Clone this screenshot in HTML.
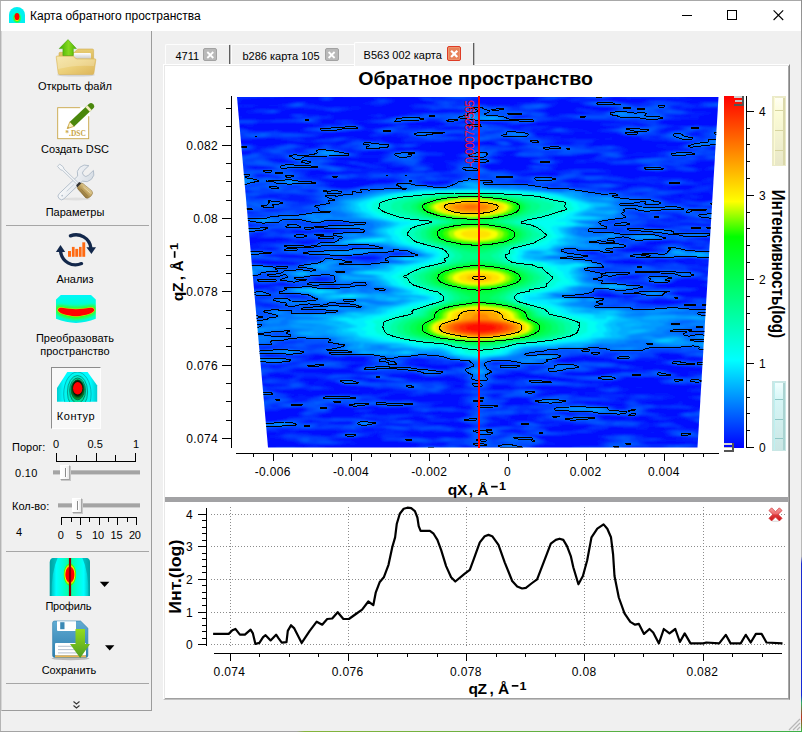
<!DOCTYPE html>
<html lang="ru"><head><meta charset="utf-8"><title>Карта обратного пространства</title>
<style>
*{box-sizing:border-box;margin:0;padding:0}
html,body{width:802px;height:732px;overflow:hidden;background:#f0f0f0}
body{font-family:"Liberation Sans",sans-serif;font-size:11px;color:#000;position:relative}
#win{position:absolute;left:0;top:0;width:802px;height:732px;background:#f0f0f0;overflow:hidden}
#edgeL{position:absolute;left:0;top:0;width:1px;height:732px;background:#b4b4b4}
#edgeT{position:absolute;left:0;top:0;width:802px;height:1px;background:#a8a8a8}
#edgeR{position:absolute;left:801px;top:0;width:1px;height:732px;background:linear-gradient(#8c8c8c 0,#b0b0b0 10%,#b8b8b8 76%,#1a2ad0 77%,#1428d8 95%,#30b060 96%,#c03020 98%,#30c040 100%)}
#edgeB{position:absolute;left:0;top:731px;width:802px;height:1px;background:linear-gradient(90deg,#a4a4a4 0,#a4a4a4 37%,#86b43c 38%,#6cb040 60%,#3cb048 100%)}
#titlebar{position:absolute;left:1px;top:1px;width:800px;height:30px;background:#fff}
#title{position:absolute;left:29px;top:8px;font-size:12px;line-height:14px;white-space:nowrap}
#dock{position:absolute;left:1px;top:31px;width:151px;height:680px;border-left:1px solid #d6d6d6;border-right:1px solid #9c9c9c;border-bottom:1px solid #9c9c9c;background:#f0f0f0}
.lbl{position:absolute;left:0;width:150px;text-align:center;font-size:11px;line-height:13px;white-space:nowrap}
.sep{position:absolute;left:4px;width:143px;height:1px;background:#a6a6a6}
.t{position:absolute;font-size:11px;line-height:13px;white-space:nowrap}
#cbtn{position:absolute;left:49px;top:336px;width:50px;height:62px;background:#f8f8f8;border:1px solid;border-color:#8c8c8c #fdfdfd #fdfdfd #8c8c8c}
.groove{position:absolute;height:5px;background:#a4a4a4;border-top:1px solid #bdbdbd;border-bottom:1px solid #cfcfcf}
.handle{position:absolute;width:10px;height:15px;background:linear-gradient(90deg,#fff 0,#fbfbfb 40%,#ececec 100%);border:1px solid;border-color:#fff #a8a8a8 #a0a0a0 #fff;box-shadow:1px 1px 0 #c8c8c8}
.handle:after{content:'';position:absolute;left:3.6px;top:1.5px;width:1px;height:9px;background:#8c8c8c;box-shadow:1px 0 0 #fff}
#tabs{position:absolute;left:164px;top:44px;width:626px;height:22px}
.tab{position:absolute;top:0px;height:20px;background:#f0f0f0;border-top:1px solid #fdfdfd;border-left:1px solid #fdfdfd;border-top-left-radius:2px;font-size:11px;line-height:13px;white-space:nowrap}
.tab span{position:absolute;top:4.7px}
.tab.act{top:-1.8px;height:23.8px;background:#f2f2f2;border:0;border-left:1.4px solid #fff;border-top:1.3px solid #fff;border-top-left-radius:2px}
.tab.act span{top:5.5px}
.tsep{position:absolute;top:0.5px;width:2px;height:19.5px;background:linear-gradient(90deg,#5e5e5e 0,#5e5e5e 50%,#c0c0c0 50%)}
.xb{position:absolute;width:14px;height:13px;border-radius:2px;background:#b9b9b9;border:1px solid #a2a2a2}
.xb.r{background:#e8825a;border:1.5px solid #de3c26;box-shadow:inset 0 0 0 1px #ec946e}
#paneframe{position:absolute;left:163px;top:64px;width:627px;height:636px;border-style:solid;border-width:1px;border-color:#fff #858585 #c0c0c0 #fff;background:#e8e8e8}
#pane{position:absolute;left:165px;top:66px;width:623px;height:632px;background:#fff;box-shadow:1px 0 0 #a8a8a8,0 1px 0 #a0a0a0,1px 1px 0 #a0a0a0}
#split{position:absolute;left:165px;top:497px;width:623px;height:5px;background:#a2a2a4}
#ov{position:absolute;left:0;top:0}
</style></head><body>
<div id="win">
<div id="titlebar"><div id="title">Карта обратного пространства</div></div>
<div id="dock">
<div class="lbl" style="top:48.5px;left:-2px">Открыть файл</div>
<div class="lbl" style="top:112.0px;left:-2px">Создать DSC</div>
<div class="lbl" style="top:174.5px;left:-2px">Параметры</div>
<div class="sep" style="top:194px"></div>
<div class="lbl" style="top:241.5px;left:-2px">Анализ</div>
<div class="lbl" style="top:301.1px;left:-2px">Преобразовать</div>
<div class="lbl" style="top:313.7px;left:-2px">пространство</div>
<div id="cbtn"></div>
<div class="lbl" style="top:378.5px;left:-1px"><span style="letter-spacing:0.5px">Контур</span></div>
<div class="t" style="left:10px;top:409.5px">Порог:</div>
<div class="t" style="left:51px;top:407px">0</div>
<div class="t" style="left:85.5px;top:407px">0.5</div>
<div class="t" style="left:131px;top:407px">1</div>
<div class="t" style="left:13px;top:436px;letter-spacing:0.3px">0.10</div>
<div class="groove" style="left:51px;top:438.5px;width:86.5px"></div>
<div class="handle" style="left:58px;top:434px"></div>
<div class="t" style="left:10px;top:468.5px">Кол-во:</div>
<div class="groove" style="left:56px;top:471.5px;width:82px"></div>
<div class="handle" style="left:70px;top:467px"></div>
<div class="t" style="left:14px;top:494.5px">4</div>
<div class="t" style="left:38.6px;top:497.5px;width:40px;text-align:center;letter-spacing:-0.2px">0</div>
<div class="t" style="left:56.9px;top:497.5px;width:40px;text-align:center;letter-spacing:-0.2px">5</div>
<div class="t" style="left:75.9px;top:497.5px;width:40px;text-align:center;letter-spacing:-0.2px">10</div>
<div class="t" style="left:94.5px;top:497.5px;width:40px;text-align:center;letter-spacing:-0.2px">15</div>
<div class="t" style="left:112.8px;top:497.5px;width:40px;text-align:center;letter-spacing:-0.2px">20</div>
<div class="sep" style="top:520px"></div>
<div class="lbl" style="top:569.0px;left:-8.7px"><span style="letter-spacing:-0.25px">Профиль</span></div>
<div class="lbl" style="top:632.8px;left:-8px">Сохранить</div>
<div class="sep" style="top:652px"></div>
</div>
<div id="paneframe"></div><div id="pane"></div>
<div id="tabs">
<div class="tab" style="left:1px;width:64px"><span style="left:9.5px">4711</span><div class="xb" style="left:37.3px;top:3.3px"></div></div>
<div class="tsep" style="left:65px"></div>
<div class="tab" style="left:67px;width:123px"><span style="left:10.5px">b286 карта 105</span><div class="xb" style="left:92.6px;top:3.3px"></div></div>
<div class="tab act" style="left:190px;width:119px"><span style="left:8.6px">B563 002 карта</span><div class="xb r" style="left:91.6px;top:3.2px;width:14.2px;height:14.3px"></div></div>
<div class="tsep" style="left:309px;top:-1px;height:22px"></div>
</div>
<div id="split"></div>
<svg id="ov" width="802" height="732" viewBox="0 0 802 732">
<defs><clipPath id="trap"><path d="M237,97 L718.5,97 L697.5,447.5 L268,447.5 Z"/></clipPath><filter id="bl" x="-5%" y="-5%" width="110%" height="110%"><feGaussianBlur stdDeviation="1.1"/></filter></defs>
<g clip-path="url(#trap)">
<g filter="url(#bl)">
<rect x="225" y="85" width="505" height="375" fill="#0009ff"/>
<path fill="#001bff" d="M232,92 312.8,92 316,93.1 333,93.3 340.3,92 375.9,92 373.7,95 374.4,97 392,98.9 395.8,100 396.5,101 382,106 376,106.7 371.4,105 360.6,104 362.6,103 373.8,101 374.4,100 372,97.2 336,96.4 333.7,97 334.9,99 333,100 325,100.8 316.1,99 321.1,96 296,92.7 293,93 284,97.1 259,97.6 242,99.5 240.4,100 242.6,101 241.1,102 232,103.7 232,96.5 241.2,95 232,93.7 232,92ZM382.7,92 383,92 383.6,92 383,92 382.7,92ZM400,93 414,92.8 420,93.9 423.6,96 430,96.8 452.7,94 432.8,92 516.9,92 503,94.4 483.3,95 479.1,98 478.1,100 476.5,101 477.6,103 480,104 493,105.4 502,105.1 510,105.9 517.5,105 517.2,104 515,103.4 504,103.8 502.8,103 531,102.3 536.9,101 533.7,99 534.6,98 555,95.3 570,94.2 572,94.7 573,96.2 577,96.6 578.6,96 580.3,94 590.7,92 617,92.6 619.5,92 709.2,92 711.7,93 711.8,94 709,95.1 692,95.6 685.6,97 694.9,100 690,100.5 685,100.6 683,99.8 664,97.6 640,97.6 629,98.8 616,97.1 588.5,100 610,100.6 632,103.4 642,102.5 646,100.6 653,99.7 684,101.1 688,103.1 693,104 704,101.7 716,101.8 724,101 724,107.4 683.6,109 683.4,110 692,111.6 711,112.3 714,113 699.4,116 698.7,117 699.5,118 698.9,119 665,119.9 661,120.9 660.4,122 663,124.1 676,125.4 724,125.5 724,146.9 713.9,147 713.9,148 717,148.6 724,147.8 724,160.3 701,161.5 694,164.2 688.1,165 686.9,166 703,169.2 710,166.4 724,166.3 724,170.4 704,170.1 699,171.3 691,171.9 684,171.8 673,170.2 655,171.3 642,170.6 634.9,169 635,167.9 643.7,166 642.1,165 639,164.6 612,165.3 605,162.7 597,161.7 578,163.4 572,163 576,159.9 588,159.4 591,158.6 599.1,154 597,153.5 589,153.6 580,155.3 569,156.1 557.7,156 553.4,157 553.3,158 555,159.7 563.2,161 564.7,162 556.7,164 556.3,165 559.1,166 554.6,168 555,169.3 557,170.4 563,170.4 571,168.9 593,168.6 609,170 612.1,171 611.2,172 606,172.9 588,172.6 584.1,174 585.2,175 594,175.1 608,173.8 614,174.8 614.4,176 631,178.6 647,176.6 658,176.7 692,179.3 695.2,180 692.4,181 693.6,182 696,182.1 702,181 701.8,180 703.3,179 716,177.3 719.4,178 713.9,180 711.7,182 712.5,183 724,183.4 724,187.4 718,187.2 714.9,188 715.5,190 717,191 724,191.1 724,195.9 715,195.4 709.8,194 707,192.1 704,192 692.4,194 693.2,195 703,196.1 705,197.1 701,198.2 689.2,199 691.2,200 702,201 714,200.3 724,200.9 724,206.5 716.4,207 724,207.9 724,229.6 720,230 719.3,231 724,231.2 724,263.8 707,264.5 701.4,266 711,265.4 724,266.1 724,272.8 712,273.1 709.8,274 710,275.2 711.5,276 724,275.4 724,293 709,293 704.5,292 711,290 712.8,288 697.2,285 707.5,283 708.2,282 704,280.5 693,278.7 687,278.4 679,279.6 677.3,280 677.7,281 675,282.2 660,284.3 657.7,285 657.1,286 667,287.6 697,287.9 700.2,289 698,290.3 691,291.4 679,291.9 673.9,293 673.6,294 689,297.1 701,297.4 710,298.6 715,300.1 724,300.3 724,350.6 717,350.9 711.9,352 712.5,353 724,353.4 724,356.8 703,358.6 692,357.7 687.1,359 688.1,360 694,361 724,359.7 724,387.6 661,383.5 657.6,382 657.6,381 659.2,379 669.4,378 657,377 643,377.5 626.8,377 624.5,378 624.7,379 624,379.3 611.1,381 612.4,382 610.7,383 604,383.8 603.3,385 603.8,386 606,386.5 619,386.1 622,387 621.8,388 623,388.4 631.2,389 629,390.2 615.7,393 617,393.4 629,394.6 642,393.7 653,394.3 659,393.5 672,393.9 672.6,394 667.7,395 678.3,397 659,400.2 644,401.7 641.1,403 643.2,404 668,405.2 677,403.6 678.5,403 678.1,402 680,401.6 682.6,402 683,403 682,405 694,406.5 700,408.7 706,408 707.4,407 702.5,404 705,402.3 714,401.3 724,401.2 724,422.7 701,423.6 680,417.8 663,420.5 645.1,419 649.8,417 645,416.1 628,416.9 609,415 596.9,416 603.5,418 604,420 625.6,420 622.7,419 629,417.6 636.6,419 632.3,421 646,421.4 648.5,422 647.9,423 650,423.6 665,421.6 671,421.8 676.9,423 679.2,425 685,427 686,428.6 689,429.2 713,428.5 724,429.6 724,430.2 715,430.9 704,430.9 701.2,433 712,434.5 717,437.4 724,437.6 724,445.4 712,443 696,441.8 689,442 682,440.9 654,441.4 643.8,443 650,444.2 661,443.5 678,444.4 689,443.4 699,444.4 707,444 713.6,446 724,446.4 724,449.1 714,449.7 705,447.2 691,447.7 678.1,450 675.4,452 661.1,452 667.9,450 666.2,449 655,447.8 644,448.6 632,447.8 627,450 613,449.9 605.3,452 551.8,452 553,451 558,449.9 567,449.6 570,447.8 576,446.8 596.4,446 598.8,444 599,442.6 592.2,441 603,440.2 605,439 596,437.1 584.3,437 588,436.5 595,436.7 599,435.8 610.5,435 614,433.7 627,433.7 643,435.1 644,435.5 644,437 647,437.6 660,437.8 666,439.6 674,440.1 685.6,437 662.1,436 667.4,434 666,432.9 658.9,432 660.2,431 677.2,429 671,427.8 653,426.5 649,426.7 647,429.2 642,429.7 636,429.3 635,429 634.7,428 633,427.7 622,427.6 613,426.6 610.5,427 610.5,428 607,429.1 595.6,431 603.1,432 602,432.3 576,433.5 568,435.3 537.9,436 540.7,438 546,439.7 549,442.3 557.1,444 553,444.9 546,444.6 535.8,446 533.4,447 538.3,449 531.4,451 519.9,452 473.3,452 466,451.3 457,452 377.4,452 374.7,450 381,448.7 401,449.1 416,446.6 418.8,446 418.8,445 416.4,444 416.8,443 408,442 395,441.1 382,441.3 380,440 380.7,438 380,437.4 375,436 335.1,439 338,439.6 355,439.6 355.8,440 351,441 359.4,444 355,444.5 348,443.8 331,445.2 297,444.1 295.1,442 287.3,441 280,438.5 265.3,437 285.3,433 284,432.7 276,432.6 265,431.2 257,432.7 250,432.1 241,432.6 238.8,433 244.2,435 232,436.8 232,432.3 235.6,432 232,431.2 232,426.3 246,424.2 251,422.6 272,421.5 281.6,420 288,417.6 299.9,417 299.1,416 296.4,415 296.6,414 299,412.1 303.4,411 304.7,409 300,407.6 287.3,408 279,410.4 271,410.7 246,414.3 242.3,414 240.7,413 241.3,412 244,410.9 232,410.4 232,399.4 257,399.7 261.8,399 262.8,398 254,395.6 232,394.9 232,381.7 257,380.3 263.3,378 253.7,375 232,374.2 232,372.6 244.2,372 245.7,371 232,369.5 232,366 241.4,365 245.6,364 246.5,363 241,362.6 232,363.3 232,286.4 245,288.5 257,288.2 270.9,286 270,285.3 266,285.2 258,286.9 251.2,286 250.9,285 252,284 245.3,282 247.5,280 245,278.6 232,277.5 232,244.6 245,244.7 261,242.2 288.1,240 287.2,239 279,237.7 261,238.5 232,234.8 232,226.3 248.9,226 248.5,225 242,223.9 232,223.4 232,193.4 248.3,192 245,191.3 232,191.1 232,189.4 234.1,189 232,188.8 232,154.4 245,154.1 250.3,153 251.9,152 243,151.7 232,152.8 232,145 252,144.3 260,146.6 264,146.8 289,143.2 312,145.9 322.6,143 293,141.4 270,137.8 249,140.2 241,140.3 236,142.3 232,142.7 232,136.2 235.6,136 235.9,135 232,134.4 232,124.2 242,125.9 246.7,125 244,123.9 232,124 232,119.1 271,119.7 289.5,119 293.2,118 288.7,116 289,114.6 295,113.6 322,115.8 337.3,115 333.4,117 333.1,118 334,119.1 325,118.9 320.6,120 321.9,121 321.8,123 323,123.6 335,124.1 335.7,124 333.7,122 336,119.6 364,120.8 370,119.6 383,119.1 386.1,118 386,117.1 379,117.4 366.1,116 367,115 384,114.7 385.6,115 386,117 387,117.2 400.7,116 396.6,115 399,114.3 405,114.4 411,112.8 433,112.8 447,111.8 456.1,112 464.4,111 462.2,110 456,109.6 434,111 422,109.8 409.2,110 413.9,108 407.7,106 409,105.5 414,104.6 429.2,104 432.3,103 431,101.8 420,100.1 417.8,98 413,96.2 406,95.8 400,94.2 400,93ZM479,122 478.4,122 481.3,123 499,123.8 503.7,123 489,121.6 479,122ZM508,151 501.3,153 506,154.4 510,154.6 514.8,153 517.9,151 508,151ZM521,116 516,116.7 514.6,117 524.9,117 525.5,116 521,116ZM554,99.9 551,100.9 537.5,101 537.6,102 541,102.5 549,102.9 553,101.6 557.2,102 558.7,103 556.5,104 555.7,106 548.6,108 545,109.9 537.9,111 548,112.4 550.2,114 549.2,116 553,116.8 556.3,115 560,114.3 584.5,114 584.4,113 575,111.3 572.6,110 577,108.2 593,109 605,110.9 610.8,110 612.7,109 612.5,108 610,107.4 602,107.4 582,105.2 578,102.5 569,101.7 565,99.3 554,99.9ZM631,123.9 640,125.1 643.4,125 640,123.8 631,123.9ZM655,137 654.6,137 655.5,137 655,137ZM683,115 677,115.5 673.5,116 684,116.6 691.1,116 692.1,115 683,115ZM668,128 663.4,130 667,130.6 678,130 681.9,129 676,127.5 668,128ZM692,133.9 691.2,135 697.6,135 697.4,134 696,133.7 692,133.9ZM569,179.9 565.6,181 566.9,182 577.7,183 590,183.1 599,182 574,179.7 569,179.9ZM604,181.9 603.2,182 610,183 621,183.3 628.8,185 622,187 621.2,188 622,188.3 639,184.7 659,187.2 662.5,187 664.1,186 654,185.5 649.2,184 636,182.4 621,182.8 613,181.6 604,181.9ZM666,198.8 665.3,199 668,200.1 674.8,200 671,198.5 666,198.8ZM678,185 666.8,188 667.9,189 672,189.5 686,189.6 689.6,189 695.8,186 685,184.7 678,185ZM703,183.7 701.2,185 710,184 708,183.4 703,183.7ZM694,248 692.1,249 702.4,249 700,247.9 694,248ZM695,224.9 703,226.2 711.4,226 710.3,225 706,224.5 695,224.9ZM707,219.9 706.5,220 710,220.5 714.1,220 707,219.9ZM703,271.9 702.7,272 706.2,272 704,271.8 703,271.9ZM712,367.9 711.2,368 715.4,368 714,367.9 712,367.9ZM619,397.8 618.2,398 619,399 622,400.5 626,399.7 626.9,398 624,397.4 619,397.8ZM665,395.9 664.2,396 667.4,396 667,395.7 665,395.9ZM652,408.8 647.5,410 647.1,411 649,412.1 655.6,413 673,413.9 694,411.3 698,410 697,409.4 681,408.6 659,408.3 652,408.8ZM575,450.9 574.3,451 579,451.7 584.7,451 575,450.9ZM280,429.9 285,431.4 290.3,431 289.6,430 287,429.6 280,429.9ZM301,429.9 296.4,431 295.2,432 298.9,433 311,433.5 314,435.1 328,436.1 330,435.9 331.5,434 347.7,432 347.1,431 330,429.7 301,429.9ZM248,382.9 248.2,384 268.7,386 272.4,386 274.3,385 253,382.4 248,382.9ZM267,354.9 267.5,356 270,356.4 282.4,356 278.6,355 267,354.9ZM247,247.8 243,249 252.5,249 252.4,248 251,247.3 247,247.8ZM270,248 266.9,249 270,249.6 273.6,249 273,248 270,248ZM240,212 247,212.7 250.6,212 244,211.7 240,212ZM252,166.7 251.4,168 256,169.1 265.1,169 271.1,168 263,166.7 252,166.7ZM258,148 256,149 260.4,149 260.1,148 258,148ZM272,159 270.5,160 282,162 289.4,162 280,158.9 272,159ZM294,231.9 296.7,233 301,233.1 311.3,232 300,231.1 294,231.9ZM310,146.7 307.6,148 314.1,148 315.5,147 310,146.7ZM262,122.8 254.5,124 252.8,125 254.8,126 254,126.5 242,126.2 237.9,127 237.3,128 245,128.7 258,131.4 265,131.5 277,130.2 280,130.5 284,132.3 295,131.6 298.9,133 305,133.2 310.3,133 300.5,131 301,129 304,127.7 318,127 320.5,126 307,123.3 288,122.5 262,122.8ZM352,130.9 346,132.1 324.3,133 320.8,136 315,137.7 306,137.3 300.1,138 310,140.1 348,136.4 356.2,137 354.8,138 368,140.4 372,140.3 375,138.8 383,139.8 389.4,143 396,144.1 413.7,143 399.3,141 403.7,138 401.6,137 389,135.8 373,137.7 367.2,136 367.1,135 374.9,133 371,131.5 366,130.4 352,130.9ZM360,122 352.8,123 361.7,125 366,127.9 369,128.7 380,128.2 393.5,126 392.8,125 388,123.8 369,123.3 360,122ZM416,122 406.7,123 405.8,124 412,125.8 421,126 431,127.4 435,125.9 443.2,125 443.8,124 438.7,122 433,121.2 416,122ZM450,126.9 441.6,129 450,129.3 461.5,128 458.3,127 450,126.9ZM461,122 464,122.4 469.1,122 465,121.5 461,122ZM500,140 505,140.3 507.9,140 504,139.6 500,140ZM504,156 495,156.7 492.7,158 502.9,160 504.1,161 499.6,164 501.1,165 493,163.9 487.2,164 484.4,166 484.5,167 493,170.4 505,169.3 511,171 518,171.3 530,169 525.1,167 525.2,166 538.9,164 531,162.7 527.8,161 530,159.7 534.8,159 534.8,158 534,157.8 509,155.5 504,156ZM565,118.9 564.6,119 567.9,119 566,118.7 565,118.9ZM576,119.8 572,121.2 567,121.6 551,120.9 508.6,126 509.2,127 514,127.8 527,125.4 546,125.7 555,127.1 588.4,130 588.2,131 587,131.4 578,131.4 574.2,132 573.1,133 576,134 567,134.6 563,134.4 560.1,133 557,132.6 538,132.2 536.2,133 537,135 540,136.5 556,136.1 564.8,137 561.1,138 560.8,139 562,139.1 568.2,139 571,138.1 584,139.2 602,138.8 616,137.5 616.4,138 612,138.9 611,140 602,139.5 596,140.6 593.6,142 594,143 593,143.7 588.5,145 592,146.1 607,145.2 623,146.8 628.4,150 628.7,151 623.4,153 624.1,154 627,154.5 632,154.3 637,152.4 648,153.6 667,150.3 682,150.6 683.7,150 664,148.2 653.1,146 657,144.9 663,144.6 666.4,145 667.2,146 670,146.7 676,146.8 690.8,142 654,141.3 642,139.6 637,137.2 623,135.3 613,132.9 602,132.5 590,133.7 580,133.3 578.9,133 587,132.1 600,132.4 600.8,132 595.2,131 596.3,130 617.6,127 603,126.1 598.1,125 601,123.1 612,122.9 615.1,122 613,121 594,120.7 583,119.5 576,119.8ZM574,356.9 557.9,360 557.4,361 569,362.7 584,360.2 594,362 608,360.9 615.7,363 643,367 644.1,368 641.7,369 643,369.4 659,369.4 670,370.7 670.7,371 669.9,372 671.3,373 682,374 679,376 681,377 686,376.9 690.4,374 684.9,372 697,371.6 706.9,370 703.7,369 693,368.1 686,366.4 654,364.1 649.8,363 659,362.3 661.9,361 659,360.3 652,360.2 649,361.5 644.8,361 643,360 630,361.1 603,358.7 588,356.5 574,356.9ZM590,252 584.8,253 586.8,254 591,254.3 594.4,254 595.9,253 593.8,252 590,252ZM608,261 606.5,262 615,263.4 640,264.3 644.5,264 645.4,263 640,261.7 625,260.4 608,261ZM613,189 612.4,190 616,190.2 619.4,190 621.3,189 621,188.3 613,189ZM636,246.9 630,248.9 622.2,250 629,252.1 638,251.3 650,251.9 655.4,251 653.8,250 645.2,248 644.2,247 636,246.9ZM648,225.8 647.4,226 647.7,227 656,227.8 667.6,227 648,225.8ZM673,195 671,196 680,197.2 685,196 684.2,195 681,194.2 673,195ZM689,258 683.9,259 692,260.2 696.6,259 689,258ZM701,237.9 700.1,238 707,239.9 716.9,240 714.1,239 701,237.9ZM705,230.9 709,231.3 715.8,231 709,230.5 705,230.9ZM665,415 661.6,416 663.1,417 667,417.3 676,416.7 677.5,416 676.8,415 674,414.2 665,415ZM272,373.8 269.1,376 270,377 287,378.8 291,378.1 294.3,376 290,374.4 277,373.3 272,373.8ZM251,260.9 250.4,261 251.8,262 256.6,263 271,264.5 296.3,264 287,261.7 261,260.5 251,260.9ZM268,255 270,256.1 291,257.4 305.2,257 304.7,256 293,254.7 268,255ZM260,175.9 261,176.1 264.6,176 262,175.4 260,175.9ZM270,195.9 269.3,197 272.6,197 271.4,196 270,195.9ZM298,243 304,244.1 306.5,244 307.4,243 304,242.3 298,243ZM309,171 311.9,172 307.3,174 306.8,175 313,175.6 318,174.8 360.7,173 352,171.9 334,172.3 316,170.1 309,171ZM331,163 327.7,164 337,166.1 348,166.7 355,168.4 367.2,168 365.5,167 342,162.7 331,163ZM344,141 335.9,143 335.3,144 340,144.2 345.7,143 346,141.4 344,141ZM373,151 363,151.9 361.3,153 362.5,155 374,155.9 384.5,154 385.1,153 384.7,152 382,151 373,151ZM447,141 440,142.4 426,142.4 421.6,144 420.5,145 421.7,146 420,146.5 409,148.1 400,148.1 394.7,150 400,150.6 421,150.3 428,152.1 444.5,153 446.4,155 440,156.3 430,155.9 426,156.5 425,157 426.5,159 422.1,161 426,162.5 437.2,164 429.8,166 434.2,168 434.5,169 433.5,170 435,170.9 442,171.3 450.1,170 450.5,169 443.9,167 449.1,165 442,161 451,160.8 461.7,158 454.1,156 456,154.9 464.8,153 467.2,151 464.7,149 465.7,147 475,144.3 493,145.1 496.4,144 488,141.3 474,142.7 466,141.4 447,141ZM452,134.8 451.1,135 458,135.7 462.1,135 458,134 452,134.8ZM493,385 492.5,386 493,387 490.8,389 493.9,390 514.3,389 508.6,387 508.8,386 506.3,385 493,385ZM516,372.9 513,374.2 498.2,375 496.3,377 496.8,378 501,378.4 519,376.8 561,381.4 572,381.2 573.7,380 573.6,379 572,378.8 544,376.3 525,373.9 520,372.4 516,372.9ZM533,173 518.8,175 551,176.2 556,175.5 559.1,174 555,172.7 549,172.1 533,173ZM514,142.5 513.1,143 517,144.6 523.3,144 519,142.7 514,142.5ZM543,128.9 541.3,130 547,130.3 551.4,129 549,128.2 543,128.9ZM558,142.7 552.9,144 566,144.4 569.3,144 569.8,143 565,142.2 558,142.7ZM640,155 632,155.7 624,158.3 617.1,159 622,159.7 646.5,158 656.9,157 658.9,156 640,155ZM668,166.9 667.6,167 670.4,167 669,166.9 668,166.9ZM600,368 599.5,368 599.9,369 601.5,370 586,372.4 562.9,373 569,375.3 589,376.1 602,375.4 608,373.7 637.1,370 600,368ZM608,294 599,295.2 596.1,296 600,297 612,297.3 619,296 608,294ZM626,276 621.2,277 628,277.7 633.1,277 633.3,276 626,276ZM655,299.9 654.9,301 652,301.8 642,301.3 639.4,302 642.1,303 663,304.6 679.3,303 681.8,302 663,299.5 655,299.9ZM653,241 646.1,243 648,244 652,244.5 675.7,242 673.6,241 670,240.7 653,241ZM677,260.8 674.6,262 689,264.2 694,264 695.9,263 694,262.2 685,261.5 682,260.2 677,260.8ZM280,283 278,284 283,284.9 285.2,284 283.7,283 280,283ZM294,296 297,296.5 300.9,296 298,295.9 294,296ZM272,210 271.8,210 273.4,210 273,210 272,210ZM313,176.8 312.3,177 314,177.6 318.7,177 313,176.8ZM328,179 321.7,180 325,181.4 338,183 332,184.3 330,185 329.7,186 334,187.3 342,188.2 355,187.5 372,183.7 389,183.1 395.5,181 383.3,179 371,180.3 360,178.7 345,179.8 328,179ZM338,156.9 331,158 332.7,159 343,161 357,161.2 371,163.4 378.1,162 378.7,159 381.1,158 378,157.4 354,158.1 347,156.9 338,156.9ZM346,151 349,152.1 350.7,152 351,151 346,151ZM413,358.9 414.3,360 421,361.5 426.1,360 423.2,359 413,358.9ZM442,181 426,181.8 423.9,183 427.2,184 434,184.5 448,183 448.1,182 447,181.4 442,181ZM491,417.9 491.1,419 498,420.3 504,420.8 508,420 495,417.7 491,417.9ZM492,394.9 491.5,395 492.2,396 495,396.4 496.8,395 492,394.9ZM514,397.8 509.3,399 510.9,401 503.8,403 506,404.4 511,405.1 534.9,404 528,401.4 527.8,400 525.9,398 514,397.8ZM532,385.9 528,387 528.5,388 541,389.6 564.1,391 561,391.8 551,392.1 539,395 542,395.6 571,393.2 572.2,393 569.9,392 572,391.6 578.3,392 580,392.8 590,392.2 600,393.6 606.7,393 595.2,391 595.5,388 593,387.2 572,387.9 564,385.8 532,385.9ZM580,382 591,383.5 596.5,382 590,381.4 580,382ZM600,381 599.1,382 604,382.3 607.4,382 608.3,381 600,381ZM624,296 630,296.8 639.4,296 634,295.3 624,296ZM664,353 658.5,354 658.2,355 662.8,357 662.8,358 667,359.5 677,359.4 684.7,358 679,355.3 678,354 664,353ZM658,259.7 655,261 657,262 664,261.8 667,261.3 668.9,260 665,259.2 658,259.7ZM317,354.9 313.7,357 312.3,359 308.6,360 317,360.1 321,358.4 327.9,357 326.9,356 323,355.1 317,354.9ZM323,230 319.6,231 327,232.1 334.1,231 331.7,230 323,230ZM346,256.9 345.2,257 346.9,258 367,259.4 374,259.2 378,258 374,256.7 359,256.1 346,256.9ZM393,374.9 390.1,376 392,377.1 430,381.1 446,381.1 461,382.6 464,382 464.7,381 454,377.6 448,376.8 431,377.4 423,376.7 415,374.6 393,374.9ZM394,254 397,254.3 399.2,254 396,253.8 394,254ZM372,169 370.6,170 382.8,170 379,169 372,169ZM379,164.8 378.2,165 389,166.7 388.3,165 387,164.6 379,164.8ZM420,363.7 414.7,365 421.8,367 440.2,370 447,369.2 448,367.1 450,366.3 460,366.7 463.4,366 463.1,365 461,364.5 451,365.7 435,365.4 422,363.4 420,363.7ZM500,421.6 499,422 501,424 491,424.1 488.2,425 487.9,426 491,426.6 500,425.7 509.1,426 511.1,425 505.3,424 508.7,423 510.5,422 510,421.8 505,421.1 500,421.6ZM515,414.9 507.3,416 511.3,417 512.4,418 509.9,419 511,419.8 526,421.1 533.1,420 532,419 521.7,418 543.1,415 521,414.3 515,414.9ZM555,422 554.4,422 561.7,422 559,421.9 555,422ZM560,412.9 565,413.4 568.6,413 563,412.3 560,412.9ZM577,393.6 576.6,394 581.8,396 586.6,397 597.4,397 595,395.5 581,393.3 577,393.6ZM320,368 307,369.2 298,368.5 291.3,371 309,373 331,373.5 355.8,373 348,369.1 335,369.5 325.9,368 320,368ZM323,280 322.9,280 324.2,280 324,280 323,280ZM346,356 345.4,357 347,358 340,358.7 333,358.3 332.4,359 346,361.4 361,361.7 366.6,361 366.5,360 363.6,359 364,358 366.2,357 357.2,356 346,356ZM396,393.8 379.3,398 380.4,399 390.5,400 409,399.6 421,402.3 443,400.9 443.7,401 443.4,402 441.9,403 433,405 433.2,406 434.7,407 441,407.3 455,405.9 458.2,408 461,408.6 468,408.8 470.2,408 470.1,407 467,406 457.1,405 459.1,403 456.5,402 456.9,401 460.5,400 460.2,399 458.4,398 458.9,397 467.9,395 467,394.8 444,393.5 430,394.4 423,396.2 411,396.5 403.2,395 407,394 405,393.4 396,393.8ZM453,384.8 452.8,386 457,387.7 463.4,387 463.2,386 459,384.3 453,384.8ZM389,167.1 386.2,169 387,169.8 401,170.6 405.2,168 402,167.1 389,167.1ZM506,429.9 505.1,430 505.1,431 513,432.1 519,432.2 522.9,431 514,429.5 506,429.9ZM540,421.9 536.3,423 545,423.9 553.9,422 540,421.9ZM563,424.8 557,426.3 543.1,427 548.6,429 549.3,431 558,431.9 568,431.3 581,429.3 586,426.8 592.8,426 590.3,425 586,424.7 563,424.8ZM584,402 586,403.1 608.9,406 621,406.6 625,406 625.1,405 619,403.3 603,403.4 600.6,402 597,401.4 584,402ZM307,378 300.9,379 299.7,380 303,381.2 309.9,382 308.6,384 310,385.1 320,385.5 331,387 335,389.2 346.2,390 344,390.5 324,389.7 308,390.8 303,389 300,388.8 290,389.9 274.5,390 274.7,391 295,394.8 303.2,395 307.2,396 306.7,397 309,397 320,395.5 332,394.8 358,395.2 370,392.8 372.3,393 371.8,394 373,394.3 376,394.5 394.8,390 387,388.7 374,389.7 369.1,387 342,385.1 333.6,382 330,381.4 326,381.5 324.8,383 323,383.7 317,383.8 313.2,383 312.1,382 324.2,381 316,378.2 307,378ZM354,378 354,379 362.9,379 360,377.8 354,378ZM354,364 348.7,365 351.1,367 350.9,368 352,368.2 363.1,365 361,364 354,364ZM366,373 373,373.7 377.2,373 372,372.4 366,373ZM432,411.9 422.7,413 424.3,414 429,414.5 441,414.5 450,413.4 453.2,414 442,415.5 439,417 439.4,418 450,418.7 459.7,418 466.2,416 466.4,415 464.2,414 464,412.9 461,412.1 452,412.6 441,411.3 432,411.9ZM387,171.9 390,172.6 394.1,172 390,171.6 387,171.9ZM401,171.7 400.3,172 406.7,172 403,171.4 401,171.7ZM617,407.9 616.5,409 624.5,409 621,407.5 617,407.9ZM292,395.7 290.3,397 292,398 298.2,397 298.2,396 297,395.4 292,395.7ZM300,399.8 299.2,400 303.4,400 302,399.7 300,399.8ZM307,421 310,421.7 316.3,421 311,420.6 307,421ZM373,406 359,407.6 340,406.6 331.1,410 334.4,412 323.5,414 323.5,415 318.1,417 326,417.9 356,417.2 357.9,417 351,416.8 349.9,416 366,413.3 382,415.1 392,414.1 405.6,414 414.2,412 407.1,410 408.6,408 407.5,407 380,408.3 376,406.4 373,406ZM369,379.7 368.5,380 370,380.9 372,381.2 388.8,381 376,379.5 369,379.7ZM428,421.9 427.1,423 431,424.2 446,425.4 461,428 465,427.8 471.4,426 471,424.9 458,421.6 428,421.9ZM293,402 295,402.1 297.2,402 297,401.3 293,402ZM339,421.9 331.1,423 335.4,424 345,424.4 349,423.8 350.9,423 351.4,422 339,421.9ZM369,428.9 362.1,431 385.6,430 384,429 369,428.9ZM372,419.5 371.5,420 376.2,420 373,419.4 372,419.5ZM382,425 381.7,425 382.3,425 382,425ZM388,424 387.4,424 391,424.6 393.2,424 388,424ZM394,424.8 393.5,425 404.5,425 401,424.6 394,424.8ZM412,416.9 397.8,419 420,420.9 425,420.5 427.8,419 419,416.5 412,416.9ZM372,434 375,435.8 379.4,434 378,433.3 372,434ZM408,431 402,432 410,433.9 411.7,435 403.8,437 412,436.3 432,438.6 442,436.5 458,438.2 467.4,437 465,435 464.2,433 458,431.5 434,432 429.4,431 424.7,431 422.6,432 425.9,433 422,433.1 419.4,433 420.1,432 419.1,431 408,431ZM431,443.8 428.6,445 438,446.1 445.7,445 445.6,444 443,443.3 431,443.8ZM714.3,92 724,92 724,94.5 716,93.4 714.6,93 714.3,92ZM267.7,101 269,101 270.1,101 269,101.1 267.7,101ZM297.5,102 306,101.7 309.1,104 316,104.5 324,106.3 330,106.7 337,105.9 346,107.2 357,106.8 364.9,108 335,112.4 332,112.2 328,110.7 298,108 286,109.4 283,110.4 279.2,113 273,113.8 248,113.2 246.9,113 245.4,111 259,108.6 271,109.2 284,108.3 285,108 282,106.7 267.4,106 268.8,105 287,104 297.5,102ZM342.7,103 346,102.7 349.3,103 348,104 342.7,103ZM232,105 256,104.5 259.2,105 259.6,106 240,107.5 232,108.8 232,105ZM722.2,109 724,108.8 724,110.7 718.6,110 722.2,109ZM232,116 242.5,116 243,117 232,117.5 232,116ZM603.5,144 604,144 605.1,144 604,144.1 603.5,144ZM426.4,146 433,145 435.5,146 429,146.8 426.4,146ZM454.5,146 456,145.9 457.2,146 456,146 454.5,146ZM723.4,179 724,178.9 724,179.1 723.4,179ZM352.6,182 356,181.6 358.7,182 356,183.2 348.9,183 352.6,182ZM235.4,239 243,238.7 249.6,240 242,242.7 232,243.5 232,239.2 235.4,239ZM723,295 724,294.9 724,296.4 720.6,296 723,295ZM673.9,370 675,370 676,370 675,370 673.9,370ZM232,377 232,376 238.7,379 232,380 232,377ZM635.5,387 639,386.7 644.8,387 642,388 633,388 635.5,387ZM647.8,388 651,387.6 656.8,388 654,388.3 647.8,388ZM698.6,388 703,388.2 707.7,390 708.1,391 704,391.8 690,391.5 683.7,390 698.6,388ZM351.3,390 359,389.3 360.6,390 357,391.6 346.8,391 351.3,390ZM706.4,395 724,394.3 724,399.8 694,399.6 689.4,398 682,397 706.4,395ZM358.8,409 373,408.8 376.6,410 367,412.7 355,411.7 351.9,411 351.6,410 358.8,409ZM341.5,411 343,410.9 343.4,411 342,411.1 341.5,411ZM232,417 237,416.9 243.8,418 232,418.7 232,417ZM250.1,418 256,417.9 258.4,419 254.8,419 250.1,418ZM651.1,432 654,431.9 657.5,432 654,433.1 645.8,434 651.1,432ZM259.7,439 265,438.7 273.2,441 263,441.9 252.7,441 251.9,440 259.7,439ZM232,440 233,440.3 233.8,441 232,441.2 232,440ZM232,445 233,444.4 250,445.5 256,445.2 258.8,446 259.1,447 241,447.8 232,449 232,445ZM310.7,446 315,445.2 316.1,446 330.8,449 328,450.6 324,451.4 314,450.3 312.6,452 252.5,452 255,450.6 267,449.4 275,447.7 303,447.2 310.7,446ZM388.5,446 391,445.5 393.3,446 391,446.2 388.5,446ZM358.5,448 363,447.5 366.6,448 365.6,449 362,449.5 359.1,449 358.5,448ZM540.7,449 541,449 541.2,449 541,449 540.7,449ZM718,451 724,451 724,452 706.8,452 718,451Z"/>
<path fill="#002eff" d="M232,92 252.4,92 255,93 262,92.2 293.3,92 280,96.7 264,96.8 245,98.6 235,98.7 234.3,99 240.1,101 238,102.1 232,103 232,98 233.4,97 246,96.4 248.6,95 232,93.3 232,92ZM307.5,92 308,92 308.1,92 308,92.1 307.5,92ZM341,93 342.3,92 372.5,92 372.6,93 371.1,95 369,95.7 354,96.6 343.4,96 343.5,95 341,94 341,93ZM436,92 514.5,92 504,93.8 480.6,95 478,97.3 470.7,99 471.7,100 470.9,101 472.3,102 466,104 467,104.1 484,104.8 492,106.4 501,105.9 514,106.7 517,106.5 524,103.7 541,103.1 552,104.5 553,106 543,109.2 533.8,110 533.1,111 546,112.7 547.9,114 546,116 547,117 558,117.8 560,118.3 560.7,119 560,119.6 513,124.9 507,124.7 506.5,124 508.4,123 506,122 488,121.1 474,121.6 465,120.6 452.6,123 474,122.8 492,123.9 502,125.3 514.8,130 518,130.4 522.5,130 522.2,129 518.7,128 528,126 547,126.5 549.5,127 540,128.5 533,128.1 530.1,129 534.5,130 530.3,131 534,133.2 537.6,137 544,137.6 554.8,137 553,138.3 546.5,139 559.1,141 545.1,145 570.9,145 573.7,143 576.8,142 572,141.1 561.5,141 574,139.3 593,139.4 595.1,140 585.8,144 585.2,145 591,146.6 613,145.9 620.8,147 622.5,148 621,148.8 611.2,150 613,150.7 623,150.4 623.9,151 620.8,153 621.2,154 626.2,156 625.4,157 616,158.4 608,158.3 605.1,160 608,160.6 627,160.1 664,156.7 665.7,156 657.3,155 656.6,154 661.2,153 661.7,152 667.6,151 687.1,151 687.7,150 686,149.2 678,148 682.9,145 693.8,142 672,141.3 658,139.4 645,139.3 643,138.9 641.7,137 638.2,136 623,134.8 619.5,134 616.1,132 600.6,131 600.7,130 619,128 621,127 618,126.1 601.4,125 604,123.7 631,124.6 641,126.4 646.7,126 648,125 644,123.8 616,120.5 574,118.9 567,117.5 559,117.8 558.2,116 560.1,115 566,114.5 584,114.7 588.8,114 590.4,113 574.6,110 578,108.8 584.4,109 600,112.1 610.7,111 616.1,109 615.7,108 612,106.9 600,106.6 584.5,105 580.8,102 582,101.7 608,100.9 636,104.4 642,103.4 645,102.6 647,101 650,100.4 664,100.6 683,102.4 696.6,106 696.3,107 684,108.2 680,108 680.2,107 683.2,106 681,105.6 674,105.7 672.3,106 671.7,107 678.4,110 697.2,113 672,114.9 668.4,116 675,117.3 693.9,118 665,119.5 658.7,121 658.2,122 661,124.6 676.2,126 661.3,129 659.9,130 660.5,131 659.1,133 664,133.5 670.7,131 682,130.1 683.9,129 677.2,127 679,126.2 712,126.6 724,126 724,146.5 714,146.4 711,147 710.3,148 713.4,150 724,150.3 724,159 711,160.2 701,159.5 694.1,161 695.9,162 695.6,163 684.4,165 684.3,166 686.3,167 695.7,168 698.7,170 697.4,171 685,171.2 673,169.4 655,170.8 639,169.5 636.9,169 637,168 651.1,165 634,163.7 612,164.4 605,161.5 593.7,160 593.5,159 600.9,154 597,152.9 587,153.4 571,155.6 549.3,156 547,157 550,157.9 552.2,160 558.8,161 560.2,162 551,164.4 545,164.6 533,162.5 529.7,161 531.8,160 540.3,159 539.4,158 534,156.9 516,156.1 512.4,155 522.5,151 521.6,150 519,149.7 504,150.5 499.2,152 497,153 503.6,155 494,156.1 490,158 499.1,160 500.4,161 499.3,162 496,162.9 483.1,164 481.8,166 482.2,167 492,170.9 504,170.2 514,171.9 525,171.6 528.7,170 535.1,169 527.5,167 527.4,166 530,165.5 548,165.3 551.6,166 552.7,167 552.1,170 551,170.5 513.3,174 514.8,175 523,176.3 533,175.7 554,176.4 561.3,174 555.7,172 557,171.7 571,169.6 593,169.2 607.6,171 603,172.1 584.8,172 581.9,174 582.2,175 588,175.6 605,175.3 610.9,177 621,177.4 628,179.5 635,180.2 638.8,180 638,179 638.9,178 654,176.9 659.7,178 658,178.8 649.3,179 644.6,180 646,180.7 660,180.9 667.9,180 670,178.8 676,178.6 689,180 685.3,181 687.8,182 699,183 698.6,184 695,184.6 683,184.3 671,185.1 662,183.7 658,181.7 653.7,183 650,183.1 642,181.4 623,182.1 605,180 595,181 581.5,180 576,178.7 564.8,180 562.7,181 563.6,182 574,183.4 607,183.3 625.1,185 616,187.8 607.2,189 607.5,190 613,190.7 623,190.5 625.4,190 629,187.8 641,186.3 657,188 661,190.2 689,190.6 702.8,186 711,186 711.7,187 708.8,189 710.5,190 710,190.1 697,192.3 689,192.3 675,193.8 666,195.6 658.3,196 662.1,198 661.2,199 663.4,200 676,203.2 681.4,203 681.3,201 679.5,199 681,198.9 699,202.1 714,200.8 724,201.3 724,206 707.1,207 711.4,208 724,208.3 724,220.8 710,219.5 700.9,220 709,221.2 724,221.1 724,224.7 718,225.2 687,222.7 680.9,223 678.5,225 687,224.7 705,226.7 718,226.2 724,227.9 719,229.6 705,230 700,231 724,232.1 724,239.4 704,237.5 692.6,238 694,238.9 712,241.2 724,240.9 724,263.5 702,263.6 700.5,263 711,261.3 713.3,260 709,259.2 701,260.1 700.4,260 700.5,259 697.1,258 690,257.6 676,259 653.6,259 654.1,260 649,262.3 632,258.9 608,260.5 605.2,261 604.2,262 614,263.7 635,264.6 653,264.5 656,264 657,262.9 672,262.4 687,264.7 698,264.7 698.7,265 698,266.3 702,267.6 710,266.1 724,266.4 724,272.5 711,272.3 698,268.6 692,268.6 690.1,270 698,271.3 707.3,274 707.6,275 707,275.5 700.8,277 724,275.8 724,281.3 713,281.7 696,278.1 687,277.9 676,279.6 674.8,280 675.7,281 671,282.6 655.7,284 652.6,286 662,288.1 696,288.4 697.9,289 693,290.5 679,291.3 671.2,293 670.6,294 688,297.7 707,298.8 714,300.9 724,300.7 724,350.2 716,350.4 708.2,352 708.9,353 711,353.3 724,353.8 724,356.4 701,357.9 695,356.8 686,356.5 681.8,355 681.8,354 678,353 663,352.5 657.6,353 655.1,354 655.4,355 659.4,357 657,358.2 643,357.8 633,360.5 616,359.6 601,356.8 585,355.2 568.4,357 555.6,360 555,361 557.4,362 568,363.2 583,361.3 595,362.4 606,361.7 630.4,366 634.9,367 635.8,368 626,369 615,367.5 598,367.5 594.4,368 597.7,370 592,371 583,372.2 568,372.1 559.9,373 568,375.5 585,376.5 599.3,376 622,372.3 635,372.4 639.2,371 657,370 666.5,371 669.1,373 676.3,374 678,375 675.1,377 685,377.5 690.5,377 696,374.6 706.6,374 708,373 704.9,372 708,371.7 711,369.5 718.2,368 674,365.3 660.5,363 666,360.8 670,360.4 683,360 694,361.4 724,360.2 724,381.4 719.7,382 721,382.9 724,383.1 724,387.2 707.5,385 708.6,384 713.6,383 711,382.6 684,384.7 663,383.2 660,382 662,379.8 672.6,378 672,377 628,376.4 623.2,377 622,379.1 612,380.4 580,380.8 577,380.2 576.9,379 576,378.8 545.7,376 527,373.2 521,371.4 512,371.2 509.9,372 510.8,373 508,373.9 494.1,375 493.8,378 500,379.5 516,380.3 520.2,379 512.9,378 519,377.8 559,381.7 598,384.2 599.5,385 595,386.3 575,387 565,385.5 535,385.4 520,387.8 514.8,387 509,384.4 493,384.1 490.4,385 490.6,387 487.2,389 488.6,390 510,390.3 521,388.6 534,389 545,390.9 559,391 546,391.1 543.6,393 538.3,394 536.7,395 540,396.2 567,394.2 582.5,397 594,398 601.4,397 598.7,395 601,394.7 613,395.3 621,394.7 628,395.8 636,394.6 644,394.6 667,398 659,399.1 657.2,399 658,397.6 651,397.9 639.9,399 635.6,400 635.2,401 638,401.7 640,403.8 642,404.3 661,405.9 679,405.4 691,406.7 693.7,408 689,408.7 658,407.6 650,408.5 645,410 644.7,411 647,412.2 658.9,414 659.3,415 657.1,416 657.4,417 672.2,418 669.9,419 664,419.7 653.3,419 652.7,418 655.6,417 645,415.4 631,416.5 608,414.6 594.3,416 601.6,418 601.5,419 600.1,420 601,420.1 644.7,422 644,423.1 638.9,425 638.9,427 624,427.1 611,426 607.6,427 607.9,428 605,428.7 589,429.6 586.1,428 589,426.9 599.1,426 586,424.1 573.7,424 570.2,422 562,420.9 535,421.6 534,422 534.4,423 540,424.2 559.8,424 559.5,425 557,425.5 539.4,427 540.8,428 546.4,429 547.3,431 550,431.8 561,432.3 586,430.1 595.7,432 577,433 559,435.2 527.5,435 537,436.9 540,438.8 544.2,440 546.5,443 533,446.1 531.4,447 533.6,449 531.1,450 517.2,452 489.7,452 487,451.2 480,451.7 467,450.7 440,451.2 435.6,452 380.1,452 377.9,450 383,449.3 400,449.6 413,448.2 422,446.3 441,446.5 448.2,445 447,443.2 445,442.4 435,442.5 423,444.5 420.5,444 421.4,443 416,442.1 396,440.6 384,440.7 382.2,440 383.1,438 380.6,436 381.2,435 384,434 393,433 401,433.5 404.8,434 405.5,435 393.8,437 402,437.8 417,437.6 433,439.3 443,437 459,438.6 467.2,438 469.3,437 467.1,435 466.4,433 458,430.6 438,431.2 433,430.2 421,430.5 412,429.8 403,430.8 395,430.7 391,432.5 380,432.1 369,433.1 368,434 369.7,435 368.2,436 333,438.5 331.6,439 331.5,440 336,441.2 344,441.8 345.6,443 341,444.1 331,444.6 315,444.5 300,443.3 298.7,443 299.2,442 297,441 289.8,440 277.4,436 291,433.4 306,434 313,435.9 330,436.7 334.1,436 334.2,435 335.8,434 347,432.5 367,432.8 372,431.4 394.1,430 383,428.3 366,427.7 363.9,428 361,429.8 356,430.5 341,430.3 331,429.2 302,429.4 294,430.2 282,428.7 277.5,429 275.6,430 279.5,431 278,431.9 265,430.3 242,431.7 232,430.3 232,427 238,426.6 252,422.9 272.2,422 285.1,420 290,418.3 302,417.5 303.6,417 300,414.9 299.1,414 299.6,413 305.7,411 306.8,409 302,407.3 297,407.1 282.6,408 277.2,410 248,412.4 245.5,412 250,411.5 250.8,411 250.4,410 232,409.9 232,399.8 261,400.1 264,399.4 265.5,398 264.6,397 251.5,395 232,394.6 232,382.5 243,381.8 244.2,382 244.6,383 243.8,384 246,384.5 260,385.3 269,386.7 284,386.5 286.8,386 285.5,385 280,383.9 264,383.4 257.1,382 268,378 276.7,378 286,379.7 292,378.7 298.2,376 292,373.7 277,372.4 270,373 267,375.4 262,376.1 251,374 249,373 251,372 250.3,371 232,369.1 232,367 239,366.4 252.3,363 242,362 232,362.5 232,287.3 242,289.2 258,289.2 276,285.4 295.4,286 289,284.6 286.5,283 282,282.5 270,284.3 258,284.6 249.4,282 250,280 248,278 232,276.9 232,251.1 239,249.5 252,249.9 260,249 268,250.5 273,250.3 277.1,248 267,247.5 259,248.8 257.5,248 261.6,247 261.6,246 256.2,244 265,242.7 283,243.1 284,243 276.6,242 289,241.4 292.8,240 291.1,239 280,237.3 262,237.6 257,236.1 247,236.2 232,234.4 232,226.7 248,226.8 253.2,226 252.9,225 250,224.5 232,222.9 232,212.4 249,213.4 253.4,213 254.2,212 243,210.9 232,211.2 232,194.2 251.2,192 249.1,191 238,190 237.7,189 232,188 232,172.2 239.9,172 238,171.4 232,171.7 232,154.9 244.3,155 255,152.6 262.3,152 256.3,151 265.6,148 288,143.8 305.5,146 303,147.5 295,149 293.3,150 295.2,151 295.1,152 300.2,153 302.1,152 300.4,151 304,149.2 319.6,148 317.6,146 319.3,145 329,144.4 336,146.4 348,143 350.8,141 349.7,140 351,139.7 358,139.2 366.6,141 375,141.3 376.8,141 377.8,140 379.9,140 383.6,141 382.5,142 395,144.5 416,143.8 417.3,144 418.3,146 409,147.5 397.4,147 395,148.6 389.7,150 391,150.4 399,151.2 412,150.5 428,152.7 442,153 443.5,154 441,155.1 427,155.4 422.3,157 424.4,159 420.2,161 421.5,162 421.3,164 427,165 426.5,166 431.4,168 432,169 429,170.5 419.8,172 426,172.4 435,171.7 443,172.5 453.8,170 454.8,169 455.6,167 455,166 449.5,164 449,163 457,162.3 457.7,162 456,161 467,158 457.7,156 458.1,155 467.2,153 470.5,151 467.9,149 470.8,147 477,145.2 494,145.7 498.3,145 498.4,144 492.9,142 492.2,141 490,140.8 475,141.9 453,140.1 439,141.5 427,140.9 404,141.2 402.5,141 409.9,137 407,135.7 399,136 395.5,135 404.3,134 401.4,133 394,132.9 392,134.2 376,136.3 372,136.1 370,135 378.1,133 369.9,130 395,126.3 396.4,126 396.6,125 396,124.3 390,123.5 373,122.8 368.5,122 371,120.3 384,119.5 392,117.4 414.7,115 412,113.9 459,112.4 466.6,111 464,109.8 454,109.2 443,109.2 431,110.3 428.8,110 426,107.8 410.3,106 415.6,105 434.6,104 434,101.8 422,99.9 420.5,99 420.2,97 433,97.5 437.8,96 450,95.3 455,94 436,92ZM457,100 458.3,101 461,101.3 462.7,100 457,100ZM515,116 511.8,117 513.9,118 517,118.2 530.3,117 529.8,116 526,115.5 515,116ZM488,132 489,132.4 491.5,132 490,131.9 488,132ZM502,139 495.7,140 510,141.6 510.7,143 514.4,145 503.3,147 516,147.2 526.8,144 513,141 509,139.4 502,139ZM663,166 664.2,167 670,168.1 675.3,167 668,165.7 663,166ZM652,135.9 649.2,137 657,138.6 660.4,137 658,136 652,135.9ZM697,131.9 690,133.5 688.7,134 688.8,135 692.3,136 700.3,136 701.1,135 700.7,134 699,132.3 697,131.9ZM702,130 701.5,130 702,130.6 704.4,130 702,130ZM493,362.9 493.4,364 496,364.3 510.9,363 500,362.5 493,362.9ZM520,181.8 518.1,183 529,183 529.9,182 520,181.8ZM532,368.9 529.5,370 534.8,370 535.6,369 532,368.9ZM572,185.8 571.2,186 575,187.1 586.1,187 585.7,186 584,185.8 572,185.8ZM587,251.9 582.4,253 584,254 589,254.6 598.4,254 596.8,252 587,251.9ZM600,292.9 599.4,293 601.7,294 596,294.6 593.4,296 596,297 612,297.8 622,297 631,297.3 641.7,296 635,294.8 621,295.4 607,292.9 600,292.9ZM637,192.9 634.1,194 641,194.3 642.9,194 643.9,193 637,192.9ZM647,225 644,226 644.3,227 663,228.3 675.1,226 660,225.8 651,224.2 647,225ZM662,219 656.4,220 670,221.2 677,220 669,218.8 662,219ZM672,214 671.5,215 675.6,216 678,219.4 685.9,219 686.8,218 686.2,217 676.5,214 672,214ZM689,204.9 688.3,206 690.2,207 697.5,207 698.2,206 694,204.9 689,204.9ZM636,274.9 621.1,276 618.4,277 618,278 620,278.8 635,278.5 636.8,278 640.1,275 636,274.9ZM655,298.9 650,300.8 640,300.4 635.6,301 641,303.4 662,305.2 690.1,303 691,302 686,299.8 675,300.1 660,298.7 655,298.9ZM694,308 694,308 696,308 695,307.8 694,308ZM707,307.8 710,308.3 714.2,308 710,307.2 707,307.8ZM712,378.8 711,379 718.8,379 715,378.5 712,378.8ZM718,373 715.6,374 721.2,374 720.3,373 718,373ZM491,393.9 487.8,395 492.1,397 496,397.6 499,397.1 499,396 500,395.3 503.6,394 497,393.4 491,393.9ZM517,397 502.1,399 507,399.7 509.3,401 500.4,403 501.6,404 508,405.7 535,405.1 540.8,404 530.8,402 529.1,401 529.5,399 528,397.8 517,397ZM560,411.9 556.9,413 571,414.7 575.2,414 573.5,413 566.9,412 560,411.9ZM618,396.9 613,397.6 606,397.2 603.9,398 616.1,399 616,400 608,401.8 603.8,401 590,400.8 575.6,401 572.2,402 574,403.1 615.9,407 614.4,409 617,409.5 622,409.8 626.5,409 624.4,407 627.9,406 623.6,403 625,401.5 629.8,400 629.4,399 631.7,397 628,396.2 618,396.9ZM456,445 466,447.8 471.3,447 465,445 456,445ZM245,426.9 247,427.4 248.8,427 247,426.8 245,426.9ZM257,296.9 263,297.7 269,297 264,296.6 257,296.9ZM272,289 272.5,290 276,290 273.6,289 272,289ZM288,296 289,297 294,297.3 301.7,297 303.9,296 294,295.3 288,296ZM249,259.9 246.3,261 255,263.5 270,265 293,265 299.5,264 297,262.8 287,261.2 261,259.8 249,259.9ZM265,254.9 264.5,255 268,256.3 288,257.8 302,257.9 308.5,257 305,255.5 293,254.3 265,254.9ZM254,233 255.3,235 257,235.8 262.6,235 264.6,234 261,232.7 254,233ZM249,166 248.9,168 255,169.5 272.4,169 273.4,168 265,166.5 249,166ZM267,153.9 265.3,155 271.5,155 268.5,154 267,153.9ZM274,156.9 276,157.6 278,157 276,156.6 274,156.9ZM346,150 342.8,151 347,152.3 357,152.3 358.1,153 357.7,155 359.5,156 358.5,157 340,156.5 326.7,158 338.7,161 324.8,164 337,166.6 347,167.3 352,168.8 360,169.1 363.4,170 358,171.3 349,170.8 339,171.9 325,171.2 318,169.3 293.5,170 306.6,172 306.5,173 304,174 304,175 307.5,176 308.1,177 307.4,178 319.7,179 317.7,180 319.1,181 330.7,183 325.8,185 326,186 333,187.9 343,188.9 355,188 373,184.3 389,183.5 399,182 400.3,181 398,179.8 385,178.4 370,179.5 361,177.4 346,179.3 322,178.7 320.7,178 324,175.9 330,174.9 352,173.8 364,174.6 369,171.7 373,171 381.2,171 382,171.6 381,172.6 375.3,173 377,173.2 395,173.3 411.6,172 408.5,170 408.3,169 409.8,168 406.2,166 394,166.3 391.7,165 392.3,163 382,162.6 380.8,160 381.4,159 384.6,158 385,157 380.5,156 389.4,153 389,151.7 387,150.9 377,150.2 357,151.6 351,149.4 346,150ZM431,181 424,181.4 421.5,183 423.6,184 435,185.2 444,184.5 450.7,183 449,180.6 447,180.2 431,181ZM443,174.8 441.1,176 445,176.8 455,176.8 457.8,176 458.3,175 447,174.3 443,174.8ZM432,119.8 425,121.1 401.2,123 397.1,124 405,124.6 409,126 408,127.4 401.3,129 403,129.3 433,128.3 437,128.7 437.9,129 437.8,130 441,130.4 458,129.2 465,129.5 468,129 468.8,128 465.6,127 455,126.3 438,127.2 437.3,127 438.8,126 445.2,125 445.5,123 432,119.8ZM439,98.8 438.1,99 447.7,99 442,98.6 439,98.8ZM697,156 696.2,156 696.7,157 703.1,157 702.2,156 697,156ZM650,240.9 643.1,243 646.4,245 645,245.7 636,245.6 627,248.3 613.1,250 621,250.8 627,252.4 652,252.2 657.9,251 658,250 652.7,249 651.4,248 658,245 662.2,244 681,243.1 684,243.6 684.6,244 683.8,245 686,245.5 693.5,245 693.6,243 691,242 681,241.8 670,240.1 650,240.9ZM629,283 630.3,284 635,284.5 648,284 636,282.6 629,283ZM518,413.9 502.5,416 508.8,417 509.4,418 508,418.3 501,418.1 495,416.4 488,417.6 487.1,418 488.3,419 495.3,421 488,423.6 484.2,426 485.8,427 490,427.4 501,426.4 523,426.8 525.9,426 516,425.5 512,424 517,421.6 533,421.4 537.8,419 535.8,417 547.7,415 539,413.7 518,413.9ZM530,409.9 535,411.2 540.2,410 533,409.2 530,409.9ZM259,304 266,306.3 273,306 271.7,305 266.9,304 259,304ZM257,174.8 257,176.6 258,177.1 273.2,176 262,174.1 257,174.8ZM269,158.7 268.1,159 268.7,160 273,161.5 283,162.9 293.6,163 292.9,162 282,158.4 269,158.7ZM308,190 306.6,191 311,191.9 313.4,191 312.6,190 308,190ZM319,229.9 314,230.9 297,230.6 289.6,232 293,233.2 305,233.4 316,232.1 331,232.4 337.4,231 336.8,230 333,229.6 319,229.9ZM334,223.9 333.6,224 341.4,224 337,223.4 334,223.9ZM352,256 340.4,257 341.9,258 364,259.9 374,259.6 379.8,258 378.9,257 373,256.2 352,256ZM391,253.9 397,255.1 401.9,255 402.9,254 396,253.1 391,253.9ZM407,372.7 404,373.9 392,373.6 387.4,376 391,377.4 407,379 411.8,381 410.6,382 412,382.1 422,382 423,381.2 447.6,382 446.3,383 451.1,387 451,388 443.1,390 442,391 445,391.8 450,391.6 465,388.2 466.7,387 463.5,384 467,382 467,381 461.1,379 455.4,376 448,374.9 438,376.8 429,376.8 423.1,376 414.8,373 407,372.7ZM410,358.7 409.3,359 411.8,361 407.6,362 407.8,363 409.8,364 408.1,365 409,365.4 437,370.1 448.6,370 449.3,368 451,367.2 462,367.2 465.4,366 465,364.4 462,362.7 452,364.5 432,363.7 428.1,363 427.6,362 429.8,361 429.8,360 427.9,359 415,358 410,358.7ZM450,134 446.2,135 446.4,136 462,136.6 465.2,136 465.9,135 460,133.6 450,134ZM690,247.9 689.2,249 696,249.7 701,249.8 704.9,249 703,247.6 701,247.3 690,247.9ZM488,449 486.1,450 489,450.7 496.1,450 498.9,449 488,449ZM502,429.9 500.7,431 503.6,432 518,432.9 530.4,431 514,429 502,429.9ZM546,418.9 545.4,419 547.7,419 547,418.9 546,418.9ZM261,365.8 260.6,366 266.4,366 263,365.6 261,365.8ZM272,193.9 261,196.3 253.8,197 258,198.1 278,198.3 284,200.4 302,202 312.1,201 303.6,198 310.2,196 301,195.5 293.2,194 284,195 279.6,194 272,193.9ZM313,240 293,242.3 291.8,243 307,244.6 310.6,244 316,241.4 328,241.4 330.2,241 330.9,240 313,240ZM267,209.9 266.4,210 267.6,211 271,211.2 277.2,211 279.1,210 273,209.4 267,209.9ZM315,277.9 319.1,281 329.1,281 329,280 323.1,279 322,278 315,277.9ZM278,229 274,229.3 271,230 275,230.5 281.3,230 278,229ZM316,354 309.7,355 311,356 308,356.6 305,355.8 288,355.9 271,354.3 263.7,355 263.4,356 267,357 289,356.2 309,357.5 309.5,358 309,359 304.4,360 307,361.2 318,360.9 322.7,360 322.8,359 326,358.6 333,360.5 361,362.7 365,362.5 369,361 368.8,360 365.8,359 366.5,358 370.1,357 364.4,356 348,355.6 341.6,356 341,357.1 337,357.5 326,354.9 316,354ZM323,287 331,287.6 334.7,287 331,286.2 323,287ZM280,232.9 282,233.2 285.3,233 283,232.5 280,232.9ZM273,365 269.6,366 268.8,367 270,368 277,368.4 279.7,368 283.2,366 282.9,365 282,364.9 273,365ZM291,363 290.5,364 297.6,363 295,362.4 291,363ZM350,363.9 345.9,365 348.3,367 345,368.2 336,368.7 325,367.6 309,368.2 298,367.7 294,368.4 288.1,371 291,372.4 296,373.3 315,373.8 327,374.9 335,374 352,373.8 360,374.7 375,374.3 378.5,374 380.7,373 376,371.9 362,371.9 356,371.1 353.1,370 359,367.2 367.2,365 367.2,364 361,363.2 350,363.9ZM303,375.9 304.9,377 298.1,379 297.7,380 299,381 304,382 307,385.4 310,386.1 320,386.4 329,388 329.3,389 310,390.1 306,388.5 302,388.2 266.2,390 289.5,395 287,397 287.1,398 294.8,399 295.3,400 289.1,402 292,402.6 301.1,402 307.3,400 307,399 309.7,398 322,395.7 366,395.1 376,395.8 387,393.6 388.6,394 388.3,395 379,396.7 376.7,398 377.5,399 386,400.4 399,401.2 403.1,400 407,399.9 419,402.7 436,402.7 429.6,405 429.9,407 433,407.8 452,407.4 457.3,409 466,409.6 471,409.1 472,408 471.6,407 469,405.8 463.2,405 462.9,404 465.5,403 461.4,402 464.2,400 461.5,398 463.3,397 472.6,395 468.8,394 447,392.2 442,393.1 427.9,393 421,395.4 411,395.9 407.8,395 413.4,394 409.7,391 388,388.1 376,389 373,386.9 342,384.5 335,381.7 314,375.9 303,375.9ZM336,378.9 335.2,379 339.6,379 338,378.9 336,378.9ZM358,377 348.2,378 347.5,379 363,380.1 370,382 396.1,382 394.2,381 358,377ZM308,420 303.8,421 305,422.4 307,422.8 319.3,422 321.4,421 308,420ZM332,404 328.3,405 334.2,406 335.7,407 329.3,410 331,411 331,412 319,413.6 317.9,414 319.4,415 314,417 326,418.4 364,418.1 367.7,420 372.5,421 383,421.4 388.5,420 379,419.2 377.6,418 375,417.6 364,417.9 359.9,416 360.7,415 367,414.1 382,415.8 394,414.7 412,414.4 413.6,415 413.8,416 398,417.7 394.3,419 397,420.2 413,420.6 420.8,422 427,424.9 445,425.8 448.2,427 460,428.7 468,428.1 474.4,426 473,424.8 463.2,422 452,420.2 444,421.3 427.4,421 432,419.1 446,419 452,419.8 462.4,418 468.7,416 469.2,415 466.8,413 463,411.3 451,411.6 440,410.7 423,412.2 410.8,410 410.1,409 412.7,407 410,406.5 383,407.5 373,405.5 365,406.7 355,407 332,404ZM362,400.8 361.1,401 368.6,401 366,400.1 362,400.8ZM331,421.9 328.1,423 328.4,424 347,424.8 350.8,424 353.5,422 347,421.2 331,421.9ZM382,423.8 375.7,425 375.5,426 391,425.4 404,426.4 407.1,426 411.9,424 387,423.3 382,423.8ZM591.4,93 593.6,92 596.6,92 598,92.9 608,92.3 619,93.4 621,93.1 621.5,92 706.2,92 708.5,94 704,94.9 689.8,95 680,96.9 682,98 680,98.2 646,97 628,97.8 617,96.4 604,98.4 584,99.4 576,100.8 569.8,100 573,98.5 581,97.3 585.7,95 586.1,94 591.4,93ZM716.7,92 724,92 724,93.9 719,93.2 716.7,92ZM316,94 330.2,94 327.6,96 330,96.4 333.5,99 327,100.4 320,99.5 318.5,99 319.3,98 326.6,96 316,94ZM402.6,94 407,93.1 417.7,94 417,95 415,95.1 402.6,94ZM553.6,96 567,95.3 570.6,97 550,99.8 539,100.1 536.6,99 540,97.6 553.6,96ZM376.4,99 379,98.3 388,98.9 392.4,101 392,102 382,104.4 371.4,104 368.8,103 376,101 376.4,99ZM686.4,99 688,98.9 689.3,99 688,99.1 686.4,99ZM706.6,102 715,102.5 724,101.6 724,106.7 705,107.4 699.3,107 698.2,106 700.1,105 699.3,104 700.8,103 706.6,102ZM294.3,103 304,102.1 308,105.2 313,105.2 326.8,108 340,107.5 348.1,108 349.3,109 334,111.7 316,108.5 300,107.4 290,107.4 280.4,105 294.3,103ZM232,106 253,105.1 255.8,106 244,106.1 232,107.5 232,106ZM256.4,110 261,109.1 280.2,110 279.3,112 278,112.5 270,113.4 253.8,112 253.8,111 256.4,110ZM290.8,115 295,114.1 301,114.2 305.9,115 309,116.8 315,116 324,116.6 331.4,116 329.4,118 318.5,119 317.7,120 319.4,121 319.2,122 316,123.5 289,122.1 272,122.5 263,121.4 252,123.7 232,123.5 232,119.9 255,119.9 263,120.6 292,119.4 297.8,118 291.6,116 290.8,115ZM376.4,115 382,115 383.9,116 380,116.8 371.5,116 376.4,115ZM569.6,120 570,120 571,120 570,120.1 569.6,120ZM337.4,121 345,120.3 356.3,121 350,122 349.1,123 360,125.7 366.5,129 344,131.5 319,132.5 305.5,131 303.2,130 306,128 322.1,127 322.8,126 322,125 323,124.8 331,124.7 338,126.1 343.3,125 341.1,124 341.7,123 337.4,122 337.4,121ZM232,126 232,125.5 236.5,126 232,126.7 232,126ZM416.5,127 420,126.7 423,127 419,127.5 416.5,127ZM555,128 563,128 572.9,131 565,132.8 543,132 551,130 555,128ZM232,129 232,128.1 242,128.8 257,131.9 266,132 276,130.8 283,132.7 318.1,134 318.6,135 317.2,136 314,136.7 288.5,138 301,139.2 307,140.9 342,137.3 347,137.5 349.4,139 347.6,140 335,141.7 318,141.9 308,141.1 296,141.1 283,139.2 279.6,138 269,137.4 239,139.4 236.5,140 236.5,141 235,141.7 232,142.2 232,136.8 239.6,136 238,134.5 232,132.9 232,129ZM247,145 252.2,145 256.8,147 252.8,149 254.6,150 253,150.6 238,150.9 236.4,152 232,152.4 232,145.3 247,145ZM362.6,157 366,156.6 370,157 367,157.1 362.6,157ZM579.2,161 582,160.4 587,161 585.4,162 578.1,162 579.2,161ZM344.6,162 357,161.7 371,165.1 382.9,167 383.4,168 372,167.7 350,163.8 344.6,162ZM711.1,167 724,166.7 724,169.9 709,169 708.7,168 711.1,167ZM707.9,179 711,178.7 712.6,179 708,180.9 706.1,180 707.9,179ZM716.3,184 724,183.9 724,186.8 715.1,185 716.3,184ZM714.9,192 724,191.3 724,195.7 716,195 711.2,193 714.9,192ZM278.1,196 284,195 290.3,196 288,197.5 284,198 279,197.5 278.1,196ZM690.7,196 694,196.1 702,197 695,197.8 688.9,197 690.7,196ZM232,240 240,239.1 246.4,240 240,242.3 232,242.9 232,240ZM232,246 232,245.1 242,245.4 246.1,246 246.1,247 240,248.8 232,248.9 232,246ZM711.3,283 715,282.2 724,283 724,292.1 714.2,292 713.4,291 715.2,289 718.8,288 702.3,285 711.3,283ZM232,379 232,378.2 234.7,379 232,379.3 232,379ZM612.5,387 618.7,387 618.1,388 620,388.9 625.7,390 610,392 601,391.3 598.1,390 600,387.8 609,388.2 611.8,388 612.5,387ZM686.6,390 701,389.2 705.4,390 705.8,391 694,391.1 686.6,390ZM393.4,392 398,391.5 401.3,392 397,392.3 393.4,392ZM711.8,395 724,394.6 724,399.4 697,399 690.3,397 711.8,395ZM644.5,400 646,399.8 648.5,400 646,400.1 644.5,400ZM710.1,402 724,401.6 724,412.4 718.7,413 719.3,414 724,414.1 724,422.5 706,423.1 698,422.4 693.4,421 685.6,417 681,416.2 678.3,414 695,411.8 702,409.5 709.7,408 711.6,407 704.6,404 705,403 710.1,402ZM696,416.9 695.4,417 700.2,417 698,416.9 696,416.9ZM354.7,410 368,409.5 372.7,410 371,411.2 365,411.8 356,411.3 354.4,411 354.7,410ZM419.4,415 434,415.2 436,416 434,418.1 432,418.8 420.1,416 419.4,415ZM232,418 232,417.6 235.4,418 232,418.2 232,418ZM659,423 668,422.4 674,422.9 676.3,425 682.7,427 680,428.1 662.7,427 656.1,426 654.1,425 659,423ZM670.3,430 682,429.4 695,430.6 699.3,432 698.6,433 699.9,434 710,435 715.8,438 724,438.2 724,444.6 713,442.6 694,441 691.1,440 701.6,439 698.6,438 670,435.7 668.3,435 669.6,434 669.3,433 665.3,432 664.5,431 670.3,430ZM707.1,430 713,429.1 719.1,430 713,430.5 707.1,430ZM232,434 232,433.1 236,433.4 238.6,434 239.1,435 232,436.3 232,434ZM618,435 628,434.6 638.9,436 644,438.3 659,438.6 663.6,440 646,441.6 641.4,443 646,444.4 678,444.9 690,444.1 704.4,446 698,447.2 689,447.3 673,450 657,446.7 646,447.7 630,446.7 627.9,447 626.2,449 624,449.5 613,449.6 598,451.9 590,451.7 581,449.9 572,450.2 570.7,450 570.4,449 571.4,448 577,447.2 599,446.6 600.4,446 600.5,445 602.8,443 609.7,441 606,438.5 599.7,437 602.8,436 618,435ZM681.9,439 684,438.8 685.8,439 684,439.5 681.9,439ZM263.7,440 266.2,440 269,441 263.4,441 263.7,440ZM232,445 241,445.2 246.4,446 245.9,447 232,448.5 232,445ZM308.6,447 315,446.6 327.5,449 327,450 323,450.5 316,449 305,448.2 301.1,449 302.6,450 309,450.5 310.1,451 310,452 253.9,452 256,451 266,450.2 276,448.1 304,447.9 308.6,447ZM712.5,447 718.7,447 724,447.7 724,448.2 716,449 710.4,448 712.5,447ZM556.1,451 561,450.6 567.3,451 555.6,452 556.1,451ZM667.5,451 673,450 673.4,452 663.9,452 667.5,451ZM716.5,452 720,451.5 724,451.4 724,452 716.5,452Z"/>
<path fill="#0040ff" d="M233.6,92 234,92 249.7,92 249,93 244,93.6 236.6,93 233.6,92ZM261.1,93 282,93 285,92 288.9,92 285.2,93 285.5,94 283.2,95 277,96.3 263,96.2 254,97.1 250,96 261.1,93ZM344.9,92 354,92.6 369.1,92 370.1,93 369.5,94 367,94.7 358,96 351,96.1 349,95.8 344,93 344.9,92ZM440.3,92 441,92 512.4,92 503,93.6 470.4,95 472.5,97 464,98.4 455,98.6 439.3,97 453,95.3 457,94 452,92.8 440.3,92ZM603.8,93 611,93 620,95 603,98.1 585,98 585.1,97 592,94.7 603.8,93ZM623.5,92 703.7,92 705.5,93 705.7,94 689,94.5 672,96.7 628,97.2 625.1,97 632.2,95 625,93.6 623.5,92ZM718.5,92 724,92 724,93.3 721,93 718.5,92ZM321.7,94 323,94 324.6,94 323,94.3 321.7,94ZM408.3,94 411,93.9 413.7,94 412,94.1 408.3,94ZM562.8,96 565.9,96 566.4,97 552,99.1 540,99 541.1,98 548,97 562.8,96ZM239.6,98 241,97.4 244.4,98 242,98.1 239.6,98ZM321.6,98 328,97.3 332,99 325,99.9 320.9,99 321.6,98ZM423.4,98 428.3,98 432.4,99 433.3,100 425,99.6 423,99 423.4,98ZM232,100 233,99.9 237.6,101 235.7,102 232,102.4 232,100ZM379.3,100 384,99.3 386.8,100 387.3,101 383,102.4 378,102.1 379.3,100ZM436.1,101 445,100.7 454,101.7 457.3,103 449.9,105 454,106.2 477,105 485,105.6 491,107.1 501,106.5 510,107.4 512.1,108 511.9,109 508.6,111 526,111.2 543,112.8 545.8,114 542.3,117 553.8,119 542,120.1 532,122.5 514,124.2 511.1,124 512,122 510,121.8 475,121 465,120 448,122.7 438.9,121 438.5,120 442.2,119 434,118.4 431,118.6 424,120.8 395,123.1 372.9,122 374.4,121 387,119.7 393,117.8 416,115.9 423,114 460,112.9 466.7,112 468.9,111 467.8,110 464,109.3 443,108.1 434,109.7 431.4,109 431,107.7 427,106.8 413.9,106 427,105.5 437,106.5 441.1,105 438.5,104 437.5,103 437.7,102 436.1,101ZM511,115.9 509.7,117 515,118.5 535.3,117 533.3,116 526,115 511,115.9ZM649.9,101 664.1,101 683.7,104 671,105.3 669.9,106 669.6,108 672.8,110 682.6,111 686.8,112 688,113 681,114.2 667,114 665.4,116 666.2,117 674.7,118 658.6,120 654,121.2 636,119.2 623,119.9 577,118.4 570,116.8 561.3,116 568,115 581,115.3 601,114.5 603.3,113 618,110 618.7,109 616.4,107 613,106.4 587.9,105 583.9,103 585.6,102 609,101.3 627.8,104 635,106.4 640,106.9 648.8,106 649,104.8 653.9,103 648.8,102 649.9,101ZM612,117.5 611.5,118 614.5,118 613,117.3 612,117.5ZM296.5,103 303.4,103 304.3,106 292,106.7 287.5,106 286.9,105 296.5,103ZM704.1,103 714,103.2 724,102.2 724,106.3 705,106.6 703.2,106 703.6,105 702.8,104 704.1,103ZM533.2,104 545,103.8 549.7,105 550.1,106 542,108.6 529,109.9 522,109.4 520.3,109 519.8,108 520.6,106 523,105.1 533.2,104ZM307.6,107 310,106.8 312.9,107 310,107.3 307.6,107ZM322.3,109 326,108.6 341,109 340.6,110 335,110.7 322.3,109ZM577.5,110 580,109.7 582.2,110 580,110.2 577.5,110ZM265.2,111 274,110.3 278,111 277,112.2 271,112.9 265,112 265.2,111ZM293.6,115 301,114.8 304.1,116 299,116.9 294.5,116 293.6,115ZM375.6,116 379,115.6 381.7,116 379,116.3 375.6,116ZM314.4,117 319.5,117 321.4,118 314.3,119 316.8,121 313,122.1 289,121.5 273,122.1 269.6,121 295,119.8 311.5,118 314.4,117ZM232,121 232,120.5 237,120.2 253,120.5 257.5,121 257.6,122 252,123 232,122.9 232,121ZM341.5,121 345,120.8 349.3,121 344,121.4 341.5,121ZM637,122 640,121.3 655,122.3 656.9,123 656.1,125 668.5,126 658,129.2 654.9,133 659,134.8 666,134.1 674,131.2 684,130.2 685.8,129 681.5,127 682,126.9 698,126.6 711,127.5 724,126.5 724,146.2 712.5,146 703.8,148 708,148.8 711,150.8 724,150.9 724,153.1 709.6,154 714,154.8 724,154.4 724,158.4 708,158.9 704.6,158 707.3,156 706,155.2 676.7,157 680,157.9 690,157 698.8,158 698,159 696,159.5 685.2,161 693.1,163 680,163.5 679.6,164 680.2,165 679,166.1 666,164.8 660,165.4 659.1,166 669.8,169 660,170.5 639,169 639.1,168 656.2,165 636,163.1 615,163.8 612.3,163 612.7,162 614,161.8 631,160.5 638.9,159 669,157.2 669.5,157 668.6,156 664.5,154 667.4,152 670,151.7 693,151 691.9,149 684,147.5 683.1,147 683.2,146 697.1,142 695,140.9 673,140.8 669.2,140 668.7,139 664,137.7 660,135.2 641,135.5 625,134.7 621.6,134 619.5,132 605.3,130 620,128.4 627,125.5 642,127.2 648,126.5 652.8,125 637,122ZM697,130 688,133 686.6,134 687,135 689.4,136 698.1,137 701.2,138 699.5,139 702,139 703,138 706.6,137 704.4,135 703.9,133 708,132 709,131 708,129.7 706,129.1 697,130ZM663,160.9 660.5,162 671,162.6 676,162 671,160.5 663,160.9ZM448.5,124 475,123.4 493.7,125 514,130.4 530,132.4 533.2,134 534,137 535,137.6 544,140.2 552.4,141 541.4,145 544,145.7 573,146.2 582,145.3 587.1,147 582.8,148 584,148.2 598,150.6 618.9,152 618.3,153 618.9,154 622.6,156 622.7,157 615,157.7 603,156.4 601.8,156 601.7,155 602.7,154 602,153.1 598,152.3 584,153.1 571,155.2 549,154.6 541,156.7 519,155.9 514.9,155 519,152.9 533.5,149 517.1,148 531.8,144 507,138.3 501,138.4 479,141.3 472,141.3 464.6,139 464.5,138 468,136.5 476,136 477.5,135 460,133 451,133.2 441,135 440.9,136 442.7,137 455,136.9 459.9,138 458,138.6 438,140.4 428,139.9 422.1,139 408.9,135 408.2,134 408.7,133 408,132.7 396,131.9 388,133.7 384,133.8 374.5,131 373.8,130 403,125.5 405.4,126 404.8,127 396.8,129 397.3,130 415,130.6 431,128.9 434,129 437,131 456,130.1 466,130.4 474.9,129 476.4,128 456,125.6 444.7,126 447,125.6 448.5,124ZM495,130.9 485,131.7 483.8,133 490,133.6 502.7,131 500,130.4 495,130.9ZM551,150.9 544,151.4 542.6,152 548,152.7 556.5,152 558.7,151 551,150.9ZM608.9,125 612,124.7 616.4,125 613,125.1 608.9,125ZM325.5,126 328,125.2 338,126.6 348,125.1 353,125.2 360,126.6 362.9,128 363.2,129 331,131.8 306.2,130 306.3,129 308,128.5 323,127.4 325.6,127 325.5,126ZM537.4,127 540,127 542.1,127 540,127.1 537.4,127ZM523.7,128 524,128 524.3,128 524,128 523.7,128ZM232,129 236,128.7 246.1,130 248.1,131 247.2,132 250,132.5 275,131.8 281,133.2 314.4,135 312.5,136 298,136.7 272,136.9 253,138.1 244,137.4 232,139.3 232,137.4 242,137 242.9,136 239.8,133 232,132.2 232,129ZM555.3,129 561,128.6 567.8,131 561,131.7 550.1,131 555.3,129ZM373.7,135 376,134.8 377.4,135 375,135.2 373.7,135ZM338.7,138 343.7,138 345.9,139 334,140.9 315.3,141 318.8,140 329,139.7 338.7,138ZM296.3,140 299,139.8 301.3,140 299,140.5 296.3,140ZM356,140 359.8,140 360.3,141 362,141.3 386,143.2 395.3,145 395.2,146 393.4,147 393.7,148 391,148.8 366,150.3 358.3,150 352.3,148 352.1,147 357.9,146 356,145.5 345,147.4 342,147 340.9,146 356.4,141 356,140ZM232,141 232,140.2 234,141 232,141.4 232,141ZM494.8,142 498,141.2 506,141.6 507.7,142 511.7,145 502,145.5 500.2,144 494.8,142ZM285.8,145 292,144.4 301.9,146 290,149.4 284.4,150 284,151 287.8,152 286.9,153 288,153.7 300,153.8 310,153 303.5,151 306,149.6 324.2,148 320.4,146 325,145.1 330.7,146 332,147 330.5,149 337,149.6 342.8,152 354.9,154 355.2,156 354,156.2 338,156.2 320.9,158 335.6,161 324.4,163 322.1,164 323,164.6 337,167.1 347,168 343.7,171 326.7,171 324.2,170 324.3,169 321,168.7 295,168.9 288.5,170 288.2,171 301.1,172 300.7,173 298.2,174 303.8,176 304.6,177 295.3,178 296.3,179 312,180.2 325,183 324.8,184 314.6,186 324,186.4 331,188.3 345,189.7 356,188.3 374,184.7 387,184.2 400,182.5 402.3,182 402.7,181 402.4,180 393.8,178 397.1,177 395,176.7 370,178.2 369.1,178 372.1,177 369,176.4 367.6,175 370,174.2 385,173.6 396,174.1 435,172.6 438.6,173 440.5,174 431.7,176 433.5,177 439,177.7 449,178 449.3,179 436,180.4 422,180.6 418.9,183 419.9,184 435,185.8 449,184.2 452.8,183 452,181 453,180.2 458.6,179 463,176 462.5,175 460,174.1 449.1,172 457.1,170 457.5,165 457,164.2 454.7,164 460,163.7 464.8,160 471.7,158 460.9,156 461,155 469.4,153 473.3,151 471.1,149 477.9,146 486,145.7 502,147.6 515,148 516,149 500,150.4 493.9,153 497.7,154 498.3,155 492,155.8 487.8,158 495,160 496.7,161 496.1,162 479.8,164 478.9,166 479.9,167 490,171 495,171.6 504.3,171 511.5,173 508.3,174 525,177.7 533,176.2 556,176.8 567,173.2 570.7,173 571.6,172 571.3,171 573,170.6 596.3,170 599.6,171 582,171.1 579.6,172 579.4,174 580,175.2 582,175.8 602,176.1 609,177.7 621.4,178 621.2,179 613,179.9 605,178.7 590,180.2 586,179.9 581,177.7 577,177.3 561.3,180 559.7,181 560,181.9 573.5,184 571.9,185 566.6,186 567.5,187 576,187.8 589,187.8 590.9,187 589,185.8 579.7,185 577.5,184 607,183.8 621.2,185 612,187.6 597.5,188 597.9,190 613,191.4 625,191.3 628,190.6 632,188.3 647,187.7 653,188.3 657,190.5 660.3,191 682,191 683.1,192 666,194.7 657,195.1 652.4,197 659.8,200 667.5,202 669,204.2 683,204.3 686,207 694,207.7 703,207.2 712,208.5 724,208.7 724,212.2 721.2,213 724,213.3 724,219.7 696,218.2 684,215.4 677,212.9 666,211.8 658.1,212 654.9,213 657.1,214 666,214.6 671.6,216 672.2,217 656,219.1 647,219.3 645.4,220 647.5,222 647.1,223 643.1,225 632.7,226 629.7,227 638,226.6 647,228 663,228.8 686,225.8 717,227.1 720.9,228 719.3,229 715,229.6 696,230.3 681,229.2 677.6,230 685,231 685,232 720.2,233 724,235.7 724,238.6 703,237 688.1,238 688.1,239 690,239.6 698,240 708.6,242 701,242.9 692,240.8 683,241.2 674,239.8 651,240.3 640.6,242 639.9,243 640.7,244 640,244.2 632,244.4 630.9,245 631.3,246 628,247.4 611.8,249 610.7,250 626,252.8 656,252.2 663.6,250 662.5,249 656.4,248 658,246.7 667.8,244 675,243.8 679.7,244 684,246.2 692.8,247 688,247.4 687,249 688,249.3 703,250.2 707.6,249 705.1,246 705.5,245 710.1,244 712,242.8 724,241.5 724,263.2 713.3,262 717.2,260 714.1,259 691,257.3 674,258.4 656,258 642,258.9 633,258.1 605,260.2 602,261 601.8,262 608,263.6 628,265.3 647,265.2 658,267.4 664.8,267 664,265.6 660.4,265 661,264.9 667,264.7 672,263.3 678,263.7 686.7,266 687.6,267 685.8,269 688.8,271 696,271.8 704.8,274 705,275.1 697,276.6 675,279 672.5,280 674,281 672,282 667,282.8 653,283.2 634,281.7 623.7,283 625.5,284 633,284.8 645,285.3 652.4,287 656,289 658,289.2 682,288.4 695.6,289 691,290.2 679,290.6 668.8,293 668.1,294 682,296.7 685.2,298 684,298.9 675,299.5 658,298.1 647,299.6 632,299.4 627.7,298 644.1,296 637,294.6 618,294.4 602.6,291 604,290 601,289.7 598.8,290 599.3,291 590,295.8 578.9,296 577.1,297 586.3,297 589,296.2 592.3,297 609,298.2 623.5,298 623,300.2 633,301.6 639,303.7 662,305.7 695.1,303 692.3,301 692.9,300 692.3,299 695,298.6 704.2,299 708.9,300 707.6,301 703.2,302 703.6,303 710.9,303 724,301.2 724,307.8 710,306.6 689.1,307 689.8,308 692,308.3 703,308.2 724,310.4 724,325.9 723,326 724,326.1 724,349.8 713.8,350 705.5,351 705.1,352 706.3,353 710,353.7 724,354.5 724,355.7 715,356.9 702,357.1 695.4,356 687,355.7 684.7,355 685,354 684.3,353 662,352.1 655,352.6 651.7,354 652.3,355 655.6,356 654,356.8 640.1,357 632.8,360 618,359.4 611.6,358 612,357 616.3,355 616,354 619.2,353 617,352.5 609,353 598,355.8 582.9,354 578,355.5 566,356.7 553.6,360 553.1,361 556,362.5 567,363.5 584,361.9 605,362.7 615,363.8 618.5,365 617,365.9 611,366.9 591,367 589.8,368 594.3,370 585,371.6 570,371.3 556.5,373 566,375.7 584,376.7 600,376.3 624,372.5 646,373.5 647.9,373 644.4,372 648,371 657,370.4 663.4,371 667.2,373 676,375 674.8,376 672,376.5 625,375.9 620,376.8 620.4,379 617,379.5 584,379.7 576,378.2 544,375 550.4,374 549.6,373 536,373.8 529.3,373 527.1,372 539.4,370 539.3,368 540,367.7 548.4,367 539,365 533,364.6 528.7,365 527.8,368 523,370.1 507,370.4 504.6,371 505.7,372 505.1,373 493.8,374 491.4,375 491,376 491.7,378 494,379.6 498,380.5 509.6,381 500,383 490,383.4 488.7,384 488,387.1 480.2,389 485,390.5 495,391 510,391 519,389.5 533,389.5 538,390.3 542.1,392 535.6,394 534.4,395 536,396.2 533,397.4 518,396.5 503,397.5 500.9,396 507.1,394 500,392.8 492.3,393 483.2,395 492.7,398 489.5,400 504,400.1 507.7,401 494,403.7 480.3,404 498,404.3 502.3,405 502.8,406 502,407.4 499,408.7 489,408.7 487.3,409 486.7,410 491,410.6 504,409.8 507.6,409 509.5,407 512.8,406 516.6,406 520.1,407 514.1,410 519.2,412 518.1,413 512,414.3 493,415.5 485,417.4 483.9,418 490.5,421 483,424.7 479,425.5 455.6,420 471.1,416 471.1,414 468.2,412 468,411 474,409.3 473.2,407 470.2,405 474,404 466,402 465.8,401 467.6,400 466.2,398 467.4,397 478.8,395 463.3,392 463.1,391 464,390.6 477,389 471,387.9 466.6,385 466.2,384 469.6,382 469.5,381 464.3,379 463.9,377 466.6,375 465,374.4 447,374.1 439,376 431,376.3 426,375.9 417,372.8 404,370.9 393,370.1 390,371 400.5,372 399,373 363,371.2 356.6,370 362,367.1 373.9,365 372.9,363 370.9,362 371.6,360 368.2,359 369.7,358 375.8,357 370,355.8 348,355.2 336,356.3 317,353.3 296,355.3 267,354 255,356.4 255.2,357 267,357.6 288,357.2 304.6,359 301.2,360 301,361.1 300,361.5 293,361.8 278,364.2 262,363.6 254.4,362 232,361.9 232,340.5 237.1,340 235.2,339 232,338.9 232,329 238.9,328 232,327.9 232,317 237.6,316 232,315.1 232,297.1 263,298.3 272.8,297 264,296.2 232,297 232,288 240,289.8 265,289.6 273,291 279.8,290 279.1,289 269.5,288 277,286.2 292,286.8 301,286 283,282.1 266.2,284 260,283.8 251.9,281 251.9,278 256.3,277 232,276.6 232,251.4 242,250.3 277,251.1 276.8,250 280.1,248 277,246.9 267,246 271,244.5 276,243.9 291,243.7 303,245.1 310,245 317,242.3 330,241.6 333.4,240 293,238.5 278,236.6 263.3,237 263,236 268.5,234 266.6,232 265,231.8 254,232.1 250.9,233 250.8,235 249,235.5 243,235.1 237,233.7 232,233.7 232,227.2 251,227.3 260,225.7 268,225.9 278.2,225 272,224 258,224.8 241,222.5 232,222.5 232,212.8 251,213.8 257.3,213 258.2,212 243,210.6 232,210.6 232,195 254.3,192 253.1,191 245.2,190 238.2,188 232,187.5 232,172.9 242.9,172 243,171 240.9,170 243,169 258,170 276.4,169 274,167.4 270,166.5 242,164.5 240,165 245,166.2 245.9,167 245,168.7 232,169 232,163.4 235,163.3 237.1,162 232,161.2 232,155.2 245,155.6 254,153.3 260,153.3 262.2,154 261.6,156 267.3,157 263.8,159 270,161.5 280,163.5 297,163.9 297.7,163 286.5,159 281,154.7 270,153.2 267,151.6 262.3,151 267,149.3 274.8,149 276.4,147 285.8,145ZM286,153.9 285.2,154 286.4,154 286,153.9ZM289,185 288.3,185 290.6,186 295,186.4 297.3,186 298.3,185 289,185ZM310,189 303,189.6 301.3,191 310,192.6 316.5,192 315.9,190 315,189.5 310,189ZM319,224.9 318.9,225 322.4,225 321,224.7 319,224.9ZM331,222.9 328.5,224 335,224.7 347.9,224 341,222.5 331,222.9ZM348,256 335.7,257 339,258.2 365,260.6 378,259.6 381.7,258 381.8,257 371,255.4 348,256ZM350,245.9 349.2,246 351.4,247 356,247.2 360.2,247 360.4,246 356,245.4 350,245.9ZM390,253 388.2,254 396,255.5 410.1,255 400,252.8 390,253ZM414,176.9 420,177.8 426.5,177 421,176.2 414,176.9ZM496,362 491,362.8 490.6,364 495,365 515.8,364 515.2,363 511,362.4 496,362ZM517,179 514.6,180 513.8,182 512.2,183 519,183.7 533.1,183 533,182 529,180.6 522,178.9 517,179ZM548,184.9 554,186.4 557.8,186 554,184.2 548,184.9ZM584,251.8 580.1,253 582,254.1 602.1,256 600,257.2 591.4,258 590.7,259 594,259.3 604,258.7 607,257 606,256 608,255.6 618,255.7 620.4,255 619.4,254 617,253.7 605,254.4 595,251.3 584,251.8ZM609,221.8 608.1,222 614.6,222 612,221.6 609,221.8ZM615,230.8 619,231.7 621.7,231 618,230.2 615,230.8ZM640,192 635,192.6 627.2,194 630,195.1 642,195.2 649.3,193 647,192.1 640,192ZM631,275 620,275.7 611.9,278 610.6,279 611,280 619,281.2 627,279.7 637,279.7 639.5,279 641,276.9 649.6,275 639,274 631,275ZM251,301 244.6,302 252,303.3 264,307.2 278,308.1 280.2,308 281.1,307 273.2,304 261,302.4 257.9,301 251,301ZM282,342 282.8,343 285,343.2 297.8,342 294,341.3 282,342ZM286,295 284.1,296 285.6,297 290,297.8 303,297.5 305.4,297 306.2,296 300,295 286,295ZM249,259 241.6,260 251,264 271,265.6 294,265.4 302.1,264 302.2,263 300,262.2 286,260.5 249,259ZM274,254 262.1,255 263.7,256 269,256.8 286,258.5 301.8,259 301,260 303,260.3 317,259.4 322.2,257 294,254 274,254ZM280,251.9 279.6,252 281.8,252 281,251.9 280,251.9ZM272,228.9 268.6,230 268.8,231 276,231.8 277,233.4 280,234.2 288,233.5 307,233.7 317,232.6 331,232.8 343.3,231 343.8,230 334,229.1 321,229.2 307,230.5 299.3,230 296,228.9 272,228.9ZM251,216 248.9,217 261,217.3 263.9,217 264.4,216 251,216ZM256,173.8 255,174.4 254.2,177 256,177.6 269,177.1 277,178.3 280.4,178 277.3,176 268,174 261,173.4 256,173.8ZM408,358 405,359 407,360 404,362 404.1,363 406.1,364 396.7,366 412,366.5 437,370.4 446,370.8 452.8,370 451.6,369 451.7,368 453,367.7 464,367.5 467.2,366 467.5,365 465,362.1 463,361.6 454,361.4 416,357.5 408,358ZM417,179 419,179.7 420.2,179 419,178.6 417,179ZM494,368.8 493.2,369 494.8,370 499.2,370 498,369 494,368.8ZM600,269 596.3,270 604,270.9 610.6,270 610.3,269 609,268.8 600,269ZM635,213 637.5,215 644,216.3 646,216 646.2,215 638,212.9 635,213ZM267,346 257,346.9 254.7,349 264,349.4 278.4,347 276,345.9 267,346ZM314,276.9 311.3,278 314.9,280 314.7,281 325,281.7 331.3,281 331.1,280 328.1,279 328,276.9 314,276.9ZM264,193.8 258,195.9 246.7,197 256,198.8 274,198.8 283.2,201 295,201.9 298.9,203 299.2,204 298,204.3 287.9,205 296,206.2 314.3,204 317,203 317.6,202 317.3,201 310.5,199 309.3,198 314.9,197 316,196 310,194.9 293,193.5 272,193.1 264,193.8ZM317,345 312,345.4 308.8,346 315,346.4 324.8,345 317,345ZM320,285.9 318.7,287 332,288.2 337,287 336.7,286 334,285.7 320,285.9ZM268,209 264,209.7 263.2,211 266,211.7 277,211.7 282,211 283.7,210 268,209ZM290,221 288.2,222 298.9,222 297.7,221 290,221ZM301,211.9 300.5,212 302.6,212 302,211.9 301,211.9ZM400.2,145 413,144.6 415,145 415.9,146 406,146.9 399.6,146 400.2,145ZM232,146 250,145.4 254.1,147 248.8,150 232,149.8 232,146ZM595.4,147 611,146.3 617.1,147 617.1,148 605,149.7 590.1,148 595.4,147ZM406.5,151 419,151.7 427,153.6 440.1,154 425,154.6 419,157 422.3,159 418.5,161 419.1,162 417.9,165 428.8,168 429.6,169 424,170.6 414,170.8 412,170 411.4,169 413.7,168 412.4,167 406,165.1 398,164.1 397.5,163 395,161.9 385,161.5 383.3,160 384,159 389.1,157 386.5,156 393,152.1 406.5,151ZM232,152 232,151.7 232.9,152 232,152 232,152ZM537,160 546,159.4 556.8,162 552,163.5 545,163.8 535,162.4 531.7,161 537,160ZM349.5,162 354.8,162 356.5,163 351,163.2 349.6,163 349.5,162ZM359.9,164 363.8,164 366.8,165 363,165.3 359.9,164ZM529.7,166 545,165.9 549.5,167 549,168.1 547,168.7 531,167.2 529.8,167 529.7,166ZM676.9,168 681,167.1 691.2,168 695.6,170 693,170.9 688,170.7 676.1,169 676.9,168ZM712.1,168 724,167.1 724,169.6 713.4,169 712.1,168ZM232,170 232,169.7 234.2,170 232,170.1 232,170ZM355.7,170 356,170 356.5,170 356,170 355.7,170ZM534.3,170 539.7,170 540.7,171 531.5,171 534.3,170ZM337,175 353,174.3 359,175 358.5,176 348,178.6 324.2,178 324.2,177 327,175.9 337,175ZM647,178 650,177.8 652.6,178 649,178.1 647,178ZM674.9,180 680,180.1 685,182.2 692.7,183 694.7,184 670,184.5 664,183.3 662.4,182 674.9,180ZM622.2,181 625,180.7 628,181 625,181.2 622.2,181ZM719.9,185 724,184.5 724,186.1 722.8,186 719.9,185ZM718.8,192 724,191.6 724,195.5 717.9,195 714.4,194 713.9,193 718.8,192ZM685.5,202 690,201.4 701,203 713,201.3 724,201.6 724,205.6 703,206 697,204.5 687,203.4 685.5,202ZM659.9,221 662.1,221 664,222 660,222.6 656.8,222 659.9,221ZM680.2,221 689,220.2 700,220.5 708,221.6 724,221.9 724,223.2 719,222.6 711,223.5 702,223.3 691,222.2 679.3,222 680.2,221ZM667.5,224 672,224 668.8,225 658.8,225 667.5,224ZM285.7,230 289,229.3 293.8,230 290,231 284.7,231 285.7,230ZM233.8,240 240,239.6 243.7,240 241,241.4 232,242.3 232,240.2 233.8,240ZM697.9,245 700,244.6 703.4,245 701.9,246 695,246 697.9,245ZM232,246 232,245.4 240,245.6 242.8,246 243.9,247 239,248.2 232,248.5 232,246ZM708,267 724,266.6 724,272.2 715,272.2 708.9,271 706.6,270 706.7,268 708,267ZM714,277 724,276.2 724,280.6 711,280.4 701.1,279 700.5,278 714,277ZM710.1,284 715,283.4 724,283.9 724,286.3 712,286.3 705.5,285 710.1,284ZM720.4,289 724,288.8 724,290.5 718.8,290 720.4,289ZM326.6,361 353.1,363 340.5,364 341.3,365 345.3,366 346,367 342,367.8 325,367.2 292,367.5 285,370.2 268,372.3 266.4,373 266,374.3 263,375.1 254.4,374 252.8,373 254.6,372 254.4,371 243.7,369 247.8,368 232,368.1 241,367.4 243.4,366 251,364.9 255,365.9 253.9,367 256,367.5 277,369.2 283,368.3 287.8,367 289,365.9 298,364.2 302,362 326.6,361ZM670.6,361 682,360.7 694,361.8 724,360.6 724,372.4 716,372.1 712.2,371 712.7,370 720,368 717,367 675,364.9 665.7,363 665.9,362 670.6,361ZM439.9,362 447,361.6 454.2,363 444,363.3 439.9,362ZM621.1,366 625.1,366 629.7,367 628.8,368 625,368.4 620.9,368 618.8,367 621.1,366ZM332.4,375 352,374.5 358,375.8 384,374.3 384.8,376 388,377.3 404,378.9 407.3,380 406.9,381 403,381.7 358,376.1 330,378.5 324.6,377 332.4,375ZM705.4,375 724,374.9 724,378.8 718,377.8 709.7,378 707.1,379 708.2,381 704,382.5 698,383.3 688,382.7 684.6,384 680,384.1 665.4,383 662.9,382 666,380 676,377.9 691,377.7 697,375.7 705.4,375ZM296.6,378 298,377.7 299.4,378 298,378.1 296.6,378ZM266.1,380 270,379.2 281.3,381 274,383 266,382.9 260.9,382 266.1,380ZM289.7,380 293,379.6 295.3,380 295,381.1 293,381.5 289.3,381 289.7,380ZM334.5,380 349,379.5 361,380.7 370,382.7 404,382.2 428,383.3 433.8,382 440,381.9 442.4,383 441.6,384 445.7,385 447.8,387 447.7,388 440.2,390 439.4,391 441,392 440,392.3 427,392.1 419,393.6 415.9,392 417.2,391 416.4,390 401,389 385,386.4 379,388.1 377.7,388 378.6,387 374,386.5 344,384.2 334.8,381 334.5,380ZM522,380 527,379.4 539,379.6 591.3,385 577,386.2 568,385.2 545,384.7 521,386.3 515.3,385 515.1,384 516.2,383 514.3,382 522,380ZM716.8,380 723,379.2 724,379.1 724,380.7 717,381.5 712.6,381 716.8,380ZM235.9,383 241.2,383 239.7,384 242,385 261,385.8 268,388 287,387 289.6,386 289.3,385 287.3,384 292,382.4 299,382.3 303.1,384 304.5,386 304,386.7 296.1,388 282,389.1 267,388.1 260.6,390 272,391.5 285.7,395 286,396 281.6,397 283.1,398 290.7,399 292.8,400 284.4,402 285.8,403 296,403.1 305,402.1 313.9,398 322.4,396 343,395.5 367,395.9 374.9,397 372,398.4 365,398.1 356.9,401 359,401.5 370,401.4 371.7,401 372,399.6 374,399.3 380.3,400 383,401.1 397,402.3 408.7,401 419,403.2 427,404 414,405.7 387,406.8 373,405 365,406.3 355,406.7 346.9,406 341.8,404 329,403.5 325.4,404 324.5,405 332.8,407 327.5,410 328.8,411 327.9,412 318,412.5 313,414.5 307,415.6 301.2,414 301.9,413 307,411.8 308.1,410 310.3,409 301,406.6 281,407.2 277.6,406 278.6,404 277,403.6 268.1,405 272,406.5 272.9,408 262,408.9 256,407.9 246,409.2 232,409.5 232,400.1 263,400.5 265.7,400 270.2,397 251,394.6 232,394.3 232,383.6 235.9,383ZM275,397 274.8,397 279.9,397 277,396.8 275,397ZM714.8,384 724,383.7 724,386.7 712.8,385 714.8,384ZM311.7,387 318,386.9 323.6,388 321.2,389 313.5,389 310.6,388 311.7,387ZM609.9,389 615,388.8 619,390 617,391 610,391.5 602.9,391 602,390 609.9,389ZM694.7,390 699,389.9 702,390 700,390.5 694.7,390ZM559.5,395 566,394.8 571.9,396 572.9,397 568.4,398 568.1,399 571,399.3 582,397.6 608.7,399 608.5,400 606,400.1 573,400.4 568.1,403 568.4,404 570,404.3 580,403.9 591,405.8 612.4,407 612.6,409 618,410 624,410.1 628.3,409 628.1,407 631.3,406 626.5,403 627.5,402 631,401.5 635.4,402 639,404.7 653,405.4 659,407 675,406 689.3,407 689,408 688,408 659,407 649,407.8 642.9,410 642.4,411 648,413.4 654.4,414 654.1,415 644,414.5 634,416.1 609,414.3 592,414.5 588,412.9 564,411.4 557,411.9 554.1,413 554.1,414 566,414.8 571,416.7 579,414.6 586,414.9 599.9,418 599.4,419 596.6,420 600,420.5 611,421.5 638,422.2 640.9,423 635.3,426 627,426.5 615,425.5 603,425.6 585,423.3 577,423.3 575.9,423 576.6,422 575,421.7 552.9,420 552.3,419 549,418.1 540.5,417 551.1,415 550,414.3 538.9,413 537.2,412 544,409.4 547.7,409 547,408.4 535,408.5 527.8,407 530,406 554,405.1 535,402.5 530.6,401 533,399.2 543.2,397 559.5,395ZM721.8,395 724,394.9 724,399 705,399 697,398 704,396.4 721.8,395ZM603.3,396 605,395.9 606.9,396 605,396.1 603.3,396ZM633.7,396 639,395.2 652,397 641,398.1 633.7,396ZM713.9,402 724,401.9 724,410.4 712.2,409 720.7,407 712,405.8 706.5,404 707,402.9 713.9,402ZM413.9,408 421,407.2 431,408.7 448,408.4 458.7,410 452,411.1 437,410.1 424,411.7 412.8,409 413.9,408ZM272.8,409 273,408.1 278.5,409 276,409.3 272.8,409ZM255.1,410 261,409 265.8,410 258,411.1 255.1,410ZM703.1,410 712,409.1 712.3,410 718,410.6 719.8,412 712.6,413 713.2,414 724,414.9 724,422.2 698,421.8 695.1,421 694.4,420 695,419.1 704.4,417 699,416.1 685,416.3 682,415.6 680.7,414 695,412.6 703.1,410ZM357.1,411 360,410 368.1,411 361,411.2 357.1,411ZM523.4,411 528,410.7 533.7,413 523.9,413 523.4,411ZM364.2,415 369,414.9 376.2,416 366,416.6 363.3,416 364.2,415ZM392,416 406,415.2 410.5,416 391,417.8 386.9,417 392,416ZM423.6,416 431,415.8 432,416 432.1,417 429,417.3 423.6,416ZM501.9,417 503,416.9 505,417 504,417.2 501.9,417ZM306.9,418 326,418.9 335,418.3 359,418.9 368.9,421 380.6,422 382.1,423 373.4,425 370,426.5 360,426.9 359.5,428 360.1,429 355,429.8 342,429.2 340.9,429 342.3,428 337,427.2 325,428.7 292.6,429 296.2,427 294,426.9 288.7,428 277,428.3 271,429.5 259.7,429 254,430.2 251.7,430 253.3,429 252.2,427 249.3,426 249.1,425 254.4,423 273,422.3 283.4,421 292,419 306.9,418ZM300,420 301,423 304,423.8 316,423.1 318.3,426 316.1,427 318,427.6 321.8,427 322.3,426 331.5,425 350,425 352,424.5 355.4,422 349,420.8 331,421.1 309,419.3 300,420ZM657.6,419 659,418.1 663.3,419 660,419.1 657.6,419ZM440.9,420 443,419.9 444.7,420 443,420.3 440.9,420ZM539.1,420 542,419.7 545.1,420 542.6,421 538.6,421 539.1,420ZM398.4,421 409,420.6 415,422 411,422.9 402,423.3 393.7,423 388.8,422 398.4,421ZM321.6,423 323,423 323.4,423 323,423 321.6,423ZM516.2,423 520,422.2 529,422.1 537,424.2 546.7,425 535.4,427 539,428.4 543.4,429 544.9,430 544.7,431 549,432.2 568.5,433 565.7,434 556,434.8 527,434.3 524.3,433 537.1,431 524,429.9 516,428.4 501,429.6 498.1,431 505,433.3 514,433.2 520.4,435 534.9,437 543.1,441 543,443 530.3,446 529.4,447 530.9,448 530.9,449 526,450 513,449.4 504,449.8 502.7,449 493,447.8 486,448.2 476,450.1 432,450.4 430.3,451 431.7,452 385,451.9 382,451 381.7,450 411,449.3 427,446.5 441,446.9 452,445.8 459,446.6 465,448.5 472,448.5 474.7,447 466,444.6 450.2,444 450,443 451,442.7 463.7,442 464.1,441 435.5,441 436.2,440 445,438 459,439 470.5,438 471.3,437 468.9,433 462.6,431 462.7,430 475,427.5 480,427.2 490,428.1 505,426.7 520,427.7 527.7,427 528.7,426 518,425.1 514.8,424 516.2,423ZM501,434.8 497,436.5 489.2,437 492,437.4 493.6,439 495,439.1 507,436.2 508.9,435 505,434.2 501,434.8ZM501,442.9 500.1,443 505.9,443 504,442.8 501,442.9ZM662.1,424 669,423.1 673.2,424 665,426.3 659.8,426 658.6,425 662.1,424ZM386.6,426 394,425.9 409,427.3 410.1,428 409.8,429 408,429.5 402,430 380,427.1 372.3,427 386.6,426ZM413,426 416,425.7 423,426.9 441.2,426 456.2,429 454.4,430 448,430.9 435,429.2 421,430 417,429.4 410.5,427 413,426ZM674.7,427 676,426.4 679.8,427 678,427.2 674.7,427ZM232,428 240,427.8 246.7,429 248.5,430 242,430.9 237,429.4 232,429.1 232,428ZM588.9,428 593,427.3 603.6,428 593,428.6 588.9,428ZM578.9,431 586,430.9 591.8,432 575.1,432 578.9,431ZM667.7,431 679,430.4 695.5,432 697,434.2 709,435.6 712.3,438 724,438.8 724,444.1 714,442.3 699.4,441 699.1,440 705.2,439 706,438 672,435.3 670.8,435 672.3,433 667.7,431ZM347,433 357.4,433 365.9,435 355,436.9 337.7,437 337.4,435 339,434.3 347,433ZM232,434 232,433.7 234.9,434 234.6,435 232,435.4 232,434ZM283.8,435 292,434.4 300,435.9 323.3,437 329.1,438 328,439.2 325.1,440 342.1,443 335,444 318,444 303.5,443 297,440 296,437.8 287,437.3 282.5,436 283.8,435ZM315,439.9 313,441 314,441.5 317.3,441 315,439.9ZM397.3,435 399,434.7 400.4,435 399,435.1 397.3,435ZM616.7,436 624,435.2 634.2,436 636.1,437 633.8,439 638.8,441 638.5,443 643,444.6 651.9,446 646,446.8 629,446.3 625.5,447 622.2,449 612,449.3 599,451.2 572.7,449 573.8,448 577,447.7 597,447.7 603.4,447 605.1,446 603.5,445 606,443 616.7,442 613,439.7 603.8,437 616.7,436ZM385.7,439 388,438.3 419,438.3 426.2,439 433.9,441 426,442.5 393,439.9 386,440.1 385.7,439ZM650.1,439 656.2,439 658.5,440 648.2,440 650.1,439ZM682.7,445 691,444.6 698.3,446 676,448.8 662.4,447 668,445.2 682.7,445ZM232,446 232,445.2 243.1,446 241.5,447 232,448 232,446ZM284.7,448 298.1,448 298.9,450 307,450.9 307.7,452 271,451.4 255.5,452 258.4,451 269,450.5 275,448.7 284.7,448ZM713.8,448 716,447.8 718.3,448 716,448.2 713.8,448ZM493.2,451 505,450.1 514.7,452 492.7,452 493.2,451ZM666.9,452 669,451.8 670.6,452 670,452 666.9,452ZM720.6,452 722,451.9 724,451.8 724,452 720.6,452Z"/>
<path fill="#0052ff" d="M238,92 238,92 246.7,92 243,92.7 238,92ZM357.7,93 363,92.5 366.3,93 364.5,94 353.2,95 357.7,93ZM449.4,92 450,92 510.3,92 502,93.4 468,94.4 465.8,95 466.8,97 462,97.8 451,97.8 444.5,97 457,95.2 459.2,94 455,92.6 449.4,92ZM625.6,92 701,92 702.7,93 701,94 672,95.1 664,94.2 658.9,95 660.5,96 639,96.3 635.5,96 635,94.8 627,93.1 625.6,92ZM720.3,92 724,92 724,92.8 722,92.5 720.3,92ZM260.4,94 273,93.1 282.2,94 279,95.4 272,96.2 261,95.3 260.1,95 260.4,94ZM601.2,94 609,93.4 614.1,94 615.5,95 601,97.9 588.9,97 601.2,94ZM253.2,96 256,95.7 258.5,96 255,96.3 253.2,96ZM551.9,97 556.6,97 557.5,98 548,98.7 544.3,98 551.9,97ZM325.5,98 328,98.1 329.9,99 323.6,99 325.5,98ZM232,101 232,100.7 234.5,101 232,101.6 232,101ZM593,102 611,101.9 626,104.5 636,107.7 650.4,107 653,106 653.2,105 655,104.7 666,104.8 667.9,106 666,108.3 653.3,110 663,114.7 663.6,117 667,118 653,120 636,118.4 620,119.2 618.4,119 617.1,117 613,116.4 608,116.5 606.2,118 604,118.2 580,118.2 574.6,117 575.5,116 578,115.8 604.7,116 606,115.3 606.4,113 621.7,110 619.3,107 617,106.4 592,105.1 587.1,103 593,102ZM627,110.8 633,112.1 635.3,112 636.7,111 631,110.1 627,110.8ZM653.1,102 657,101.4 666.2,102 657,102.3 653.1,102ZM441.3,103 445,102.3 450.5,103 446,104.3 441.3,103ZM720.2,103 724,102.7 724,105.9 706.9,106 706.9,105 708,104.4 720.2,103ZM294.4,104 300,103.4 301.8,104 302.1,105 300.4,106 296,106.3 291.5,106 290.3,105 294.4,104ZM527.7,105 542,104.1 546.8,105 546.7,106 540,108.1 528,109.1 523.9,108 523.2,106 527.7,105ZM444.2,106 446,105.8 453,107 449,107.5 442.7,107 444.2,106ZM466.8,106 480,105.7 483.6,106 490,108 501,107.2 507.9,108 508.9,109 504,111 523,112.1 527.2,113 527.9,114 507.5,116 507.5,117 509.2,118 516,119 534,118.2 536.9,119 537,120 536.7,121 533.3,122 527,122.6 518,122.6 504,120.9 475,120.7 464,119.5 457,121.2 449,122.1 441.8,121 442.4,120 447.4,119 445,117.9 429,117.6 427,117.9 427.2,119 425.7,120 423,120.4 396,122.5 383.1,122 382.9,121 389,120.1 395.1,118 408,116.5 421,116.6 422.2,115 426,114.2 442,114.9 450,113.4 460,114.6 471.5,111 468,109.3 455.2,108 466.8,106ZM498,113.7 497.3,114 502.8,114 500,113.3 498,113.7ZM423,116.8 422,117 425.3,117 424,116.9 423,116.8ZM270.6,111 275,111 275.2,112 268.6,112 270.6,111ZM662.1,111 669,110.2 682,111.7 683.4,112 683.9,113 679,113.5 667,112.7 663.1,112 662.1,111ZM533.6,113 540,113.5 542.4,114 542,115 538,115.8 531.5,115 529.4,114 533.6,113ZM305.4,119 311,119.1 314,121 308,121.7 295.7,121 305.4,119ZM232.6,121 251,121.3 253.4,122 232,122.4 232,121 232.6,121ZM469.7,124 476,123.8 487.8,125 489.1,126 486,127 488.1,128 505.5,129 514,130.9 528,132.6 531.4,134 531,136.7 521.2,139 528,140 536,139.4 544.4,142 543.4,143 540,143.5 529,142.7 521.3,141 520,139.4 508,137.3 500,137.8 477,141.1 473,140.6 471.4,140 471.8,139 468.8,138 472,136.8 484,136.7 485.6,136 483.8,135 491,134.7 501,132.8 505.3,131 503,129.2 484,131 479,133.6 471,133.5 466,132.4 453,132.3 430.3,136 440,137.8 455.6,138 447,139.1 429,139.2 412,135.1 411,134 414,132.1 428,129.8 432,129.9 431.6,131 435,131.4 457,130.7 467,131.6 478,129.8 481.9,128 457.3,125 469.7,124ZM347.7,126 356,126.3 361.2,128 359.6,129 331,131.4 318,130.5 309.9,129 347.7,126ZM649.8,127 655,126.2 658.9,127 655,128.8 654.6,130 651,132.5 640,134.8 625,134.3 622.1,133 622,131.9 611.9,130 628,127.2 642,127.9 649.8,127ZM691.9,127 699.1,127 704.1,128 693.2,130 685,133 685.4,135 687.4,136 696.3,138 695.4,140 677,140.5 674.2,140 675.1,139 673.1,138 667,137.1 664.7,136 665.3,135 674,132 687,130.5 688.1,130 688,129 686,127.8 691.9,127ZM721.2,127 724,126.9 724,145.8 713,145.5 694,147.8 685.3,147 685,145.9 692,143.5 702.6,142 704.7,140 708,138.8 717.6,138 713,137.2 708.1,135 713.5,131 712,130 712.8,129 718,128.8 721.2,127ZM388.5,128 395.9,128 391.8,129 397.8,131 385,133.1 377.5,131 376.7,130 388.5,128ZM232,129 235.3,129 241.9,130 238,131.2 232,131.6 232,129ZM555.3,130 559,129.3 562,130 561.1,131 554.6,131 555.3,130ZM259.5,133 268.8,133 270.2,134 270.4,136 253,137.4 247,136.3 244.5,135 246,134 256,134.2 259.5,133ZM282.9,134 289.1,134 308.7,135 296,136.2 284.6,136 279.2,135 282.9,134ZM335.5,139 340,138.7 342.7,139 332.9,140 335.5,139ZM496.9,142 505.1,142 508.4,144 508.8,145 503.6,145 496.9,142ZM352.9,143 369,142 386,143.7 392.6,145 391,147 391.3,148 390,148.3 364,149.6 355.8,148 361.8,146 358,144.4 350.9,144 352.9,143ZM289.1,145 294.1,145 298,146 292,147 287,149 279.3,150 283.1,152 281,152.6 274,153 269.5,151 269.7,150 278,149.6 278.9,149 278.5,148 280,147.2 286,146.4 289.1,145ZM405.2,145 410.1,145 413.1,146 403.7,146 405.2,145ZM232,146 249,146 251.8,147 246,148.9 232,148.9 232,146ZM323.6,146 327.5,146 328.9,147 325,147.2 323.6,146ZM527,146 535,145.2 546,146.5 564,146 581,149.3 595,151 592,152.1 570,153 572.2,154 569,154.4 557.4,154 556.6,153 560,152.6 563.8,151 558,149.7 541,150.1 535,148.1 526.4,147 527,146ZM482,147 486.7,147 483.2,148 483.9,149 482.1,150 483,150.2 494,149.4 497.3,150 496.8,151 491,153 493.3,154 485.3,158 493.4,161 492.6,162 477,163.5 475.5,164 475.4,165 474.1,166 483.8,169 489,171.5 502,172.7 506,174.6 518.6,177 517.8,178 510,179 509.8,181 509,181.3 501,181.9 497.2,183 498,183.2 516,184.3 540,184.2 544.4,186 554,187.7 567,187.7 585,188.8 595,191.2 618,192.5 622,193.3 624,195.9 640,196.5 643.9,198 652,198.7 662,201.1 664.5,202 665,203 662.4,205 664,205.4 678,205.2 680,205.5 682.1,207 689,208.1 702,208 715,209.3 724,209.2 724,211.6 699,211.3 695.1,212 695.5,213 699,213.5 715,212.3 724,214 724,219.4 697,217.6 685.7,215 679,211.5 665,211 656,211.5 651.7,212 649.6,213 651.1,214 650,214.1 639,211.4 631.9,211 626.8,213 637.8,216 639,217 634,219 609,220.8 603.5,222 607,223.4 614,223.2 622,220.5 631,221.6 639,220.7 643,222 633.4,225 620,227.2 610.6,226 612.8,228 612.1,229 598,230 617,232.4 634,233.3 639.2,233 638,232 625,230.7 622,229 625,227.7 638,227.7 670,229.4 680,231 679.1,232 682,232.9 712.1,233 719.4,236 724,236.8 724,237.7 700,236.7 685.1,238 685.1,239 686.6,240 685,240.3 675,239.2 649,240 638,241.4 635,243.1 627,243.5 626.5,244 629,246 627,247.1 609,249.5 608.8,250 618.8,252 617,252.8 605,253.6 598,251.4 592,250.9 583,251.4 577.3,253 580,254.3 597,256 595.8,257 585.8,258 585.6,259 593.9,260 605,263.8 615.8,265 612.2,266 611.8,267 613,267.5 630,268 631,267.8 631.8,267 631.3,266 632,265.9 644,265.6 654.7,268 657,269 653.5,270 656,270.6 667,270.1 682,270.7 693,272 701.6,274 702.1,275 695,276.3 681,277.3 671.9,279 670.1,280 672.3,281 670.4,282 664,282.8 646.9,282 643.8,281 646.5,280 643.2,278 643.7,277 650,275.8 664,275.3 667.7,274 636,273.6 619,275.4 604.3,279 605.4,280 620.8,284 643,285.6 648.5,287 649.2,288 639,289 637.3,290 638,290.1 676,289.8 676.8,290 667,293 666.2,294 680,296.8 682.6,298 680,299 676,299.1 658,296.8 647,298.5 635.5,299 632.4,298 646.7,296 637,294.3 619.1,294 613.6,293 608.5,290 602,288.9 597,289.6 594.9,292 587.9,295 569.4,296 571,297 591,297.3 618,298.9 618.7,300 616.8,302 623,303.6 633,302.9 636.4,304 634.4,306 635.8,307 644,308.2 654.8,308 648.3,306 649,305.9 664,306.8 687,304 710,303.5 724,301.8 724,307.1 697,306.1 685.4,307 686.9,308 692,308.7 703,308.8 724,311 724,317.8 719.2,319 724,321 724,325.1 718.5,326 724,327 724,333.3 718.2,334 724,335.1 724,349.5 694,350.6 685,352.2 667.7,351 680.5,350 682.9,349 682,348.8 655,348.4 649.9,349 648.7,350 651.5,351 645,352.7 631,351.5 608,351.8 599,350 598,351 603,351.6 604,352 603.9,353 601,354.4 596,355.2 586,353.4 570.2,353 568.9,354 570.7,355 566,355.6 551.5,360 551.5,362 552.7,363 555,363.4 571,363.9 585,362.5 612,363.9 615.3,365 611,366.1 604,366.4 597,366.1 592,365 582,364.9 580.5,366 584,367 589.5,370 581,371.3 572,369.9 554,372.5 544,372.3 537,373.3 532.7,373 530.8,372 541,370.5 542.6,370 543,368.7 551.1,367 548,365.5 532,364 525.1,365 524.7,366 520.9,368 520.6,369 518,369.5 492,367.3 490.5,368 490.2,369 491.6,370 502.1,372 493,373.4 489.1,375 488.8,376 491,379.5 494.7,382 487,382.7 485.4,387 479,387.8 473,387.4 468.8,385 468.4,384 472.5,382 472.3,381 467.7,379 467.5,377 469.1,375 466,373.6 457.7,372 458.4,371 454,369 464,368.2 467.6,367 469.3,366 469.5,365 467.3,362 464,361 437.5,359 434.8,358 438.3,357 436,356.7 426,357.7 414,356.8 399,357.9 398.4,358 398.5,359 403.7,360 403.5,361 401.1,362 400.9,363 403,364 392.9,366 399,367.1 411,367 437,370.8 455.6,372 456.9,373 439.9,374 436,375.2 431,375.6 426,375 418,372.4 401.2,370 391,369.5 373,371 360.1,370 359.6,369 362,367.8 375.1,366 383.4,363 375.1,362 374.6,360 372.2,359 380.2,357 372,355.5 349,354.9 335,355.6 314,352.2 298,354.7 267,353.6 248,356.5 232,357 232,341.1 241.7,340 241.6,339 232,338.5 232,330.6 239,331.2 244,333.3 249.3,333 248.7,332 240.4,330 244.9,327 241.9,326 241.4,325 238,324 232,323.9 232,319.9 249,320 249.8,319 245.2,318 243.7,317 244,315.9 232,314.6 232,308.1 244.9,308 243.3,306 243.7,305 248,304.2 255.1,306 248.7,307 250,307.5 259,307.5 268,308.7 289,308.6 293.1,308 284,306.7 279.9,305 279,303.8 265.5,302 257.2,299 268,298.7 280,296.8 290,298.4 300,298 302.7,299 297.8,300 308,300.2 310.2,300 311.3,299 308.5,298 308.2,296 306,295.3 293,294.3 281,294.9 277,296.3 245,295.8 232,296.4 232,288.6 238,290.4 265,290.4 267.8,291 269.3,293 273,293.4 274.5,293 274.7,292 282.1,290 282.2,289 276.1,288 275.8,287 294,287.2 305.7,286 304.7,285 293.9,284 283,281.5 261,283.2 255,281.4 253.9,280 255,278.6 257,278.1 277.9,278 276,277.6 261,275.8 242,276.5 232,276.2 232,260.6 238,260.7 245.7,263 241.4,265 242.9,266 255,264.7 274,266.2 293,265.9 305.3,264 307.4,263 306.4,262 308,261 319,260.8 323,258.2 326,257.5 332,257.4 366,261.7 367.1,262 364.4,263 367,263.4 373.9,263 377,262.1 376.6,261 381,259.6 384.9,257 375.5,255 377.7,254 375,253.6 369.1,254 366,255.1 332,256 314,255.5 288,253.3 279.3,250 283.1,248 273.3,245 291,244.3 311,245.4 313.4,245 318,242.6 331.3,242 335.4,240 331,239 316.8,239 311,237 302,238 293,237.8 281.6,236 282.5,235 288,234.1 307,234.1 317,233.1 329,233.6 359.5,231 358,229.9 320,228.6 306,230.1 298,228.4 280,227.9 271,228.6 263,231.1 251.1,232 246,234.1 242.7,233 232,231.6 232,228.4 253,227.7 283.7,225 275,223.5 258,224.1 248.3,223 243,221.4 232,222.1 232,213.2 250.5,215 243.4,217 256,217.8 265,217.3 273.3,215 257.8,214 266,212.6 279,212.2 293,210.6 296.4,211 294.8,213 295,213.6 302,213.6 311.3,211 311.7,210 303,209.1 301.8,208 307,206 318.5,204 321.5,203 322,202 320.8,201 314.4,199 320.5,197 320,196 312.7,194 319.3,192 318.2,191 317.7,189 300.6,188 300,187 303.5,186 304.3,185 297,184.4 279,185 280,186.1 291,187 284,188.6 282,190.3 279.3,191 286,191.5 296,189.7 297.1,190 296.5,191 304.8,193 303,193.1 275.4,192 272.6,190 263,187.4 259.1,188 260.8,189 260.9,190 257,190.5 249.3,190 246.2,189 245.5,188 267.7,184 260.1,183 251,183.9 242,186.8 232,187.1 232,173.9 244,172.8 249,170.5 279.9,170 273,166.2 248,164.2 241.8,163 253.9,162 254,161 255.7,160 261,159.7 272.3,163 272.6,164 275,164.5 288,164 301,164.5 303,164 296.5,161 289.2,159 285.8,156 286.9,155 290,154.5 308,154.1 313.7,153 305.7,151 308,149.8 321,149.1 331,149.7 351,153.7 352.2,154 352.5,155 350,155.7 316.8,157 311,157.7 308.3,159 312,159.9 321,158.9 329.6,161 320.3,163 319.1,164 322,165.5 341.9,168 341.4,170 340.2,171 330,170.8 326.9,170 327.7,169 327,168.8 322,168.2 293,168.4 284.1,170 282.5,171 293.4,172 293.6,173 292,174 300.5,176 298.7,177 292.4,178 293.4,179 303.1,181 315,181.6 320.6,183 320,184 308,185 305.2,186 313,186.9 323,186.9 329,189 343,190.5 347,190.5 364,187.1 372,186.3 375.6,185 389,184.8 403,182.6 404.8,182 404.7,181 405.7,180 400.3,178 404,177.3 410.8,178 411,179 417.6,181 415,183 415.8,184 434,186.4 440,186.4 453,183.6 454.6,183 454.4,181 462.4,180 461.8,179 462.2,178 468.9,176 468.8,175 465.4,174 468,172 463,171.6 459.8,170 459.3,169 459.8,166 467.8,164 469.2,163 468,161.2 468.3,160 475.1,158 464.7,156 464.6,155 476.9,151 474.5,149 480.7,148 482,147ZM478,175 473.5,176 481,179.1 502,179.9 505.3,179 495,178.6 490,177.3 483.9,177 488,176.6 491.1,175 489,174.1 478,175ZM530,354 529.7,354 535.4,354 533,353.8 530,354ZM555,350.9 552.2,352 556,352.3 559.7,351 555,350.9ZM561,349.9 560.1,350 570.3,350 566,349.5 561,349.9ZM569,258 568.6,258 574,258 571,257.9 569,258ZM646,206 651,206.5 658.3,206 651,205.5 646,206ZM619,238 616.4,239 619.9,241 620.8,242 620.3,243 626,243.3 624.2,242 631.9,241 625.3,238 619,238ZM649,232.9 651.6,234 659.8,234 657,233 649,232.9ZM661,234.6 660.5,235 667,237.2 673,237.6 677.8,237 676,235.9 661,234.6ZM592,268.9 591.3,269 591.4,270 602,271.6 613,271.1 623,271.9 630.6,271 611,268.1 592,268.9ZM615,305 613,305.3 602.9,306 605.5,307 610.7,307 619.3,306 620.1,305 615,305ZM690,347 692,347.3 694.6,347 692,346.9 690,347ZM706,333.8 705.8,334 708.4,334 707,333.6 706,333.8ZM716,314.9 715.5,315 718.2,315 717,314.9 716,314.9ZM254,312 256,312.3 256.1,312 255,311.9 254,312ZM257,312.8 256.2,314 262,314.6 263.2,314 257,312.8ZM275,333.8 274.4,334 278,335.1 280.3,335 280.6,334 275,333.8ZM294,339.9 277,341.7 276,342 278.3,344 275,344.9 263,345.5 252.5,345 250.8,346 251.9,348 250.7,349 253,350.1 262,350.3 286,348.4 305,350.1 311,351.4 318,348.7 326.9,348 324.4,347 334,346.1 336.1,345 321,343.4 308,344.8 304.1,346 309.4,348 302,348.5 298,348.2 293,346.5 284.9,346 283.5,345 302.2,343 305.3,342 303.6,341 303.6,340 294,339.9ZM302,310.9 301.4,311 303.7,312 311,312.3 323,312.1 324.9,311 316,310.3 302,310.9ZM304,305.9 307,306.4 312.8,306 309,305.2 304,305.9ZM266,273 268,273.4 274.2,273 270,272.7 266,273ZM303,268.9 302,269 312.2,270 310,269 303,268.9ZM321,276 310.2,277 307.9,278 312.4,280 301.2,282 327,282 333.1,281 332.8,280 331.1,279 331.4,277 330,276.1 321,276ZM349,263.9 348.5,264 352.8,264 351,263.8 349,263.9ZM303,248.8 302.4,249 304,251 314.4,249 308,248.4 303,248.8ZM352,244.9 343,246.6 330.1,247 343,249.4 349,247.8 371.4,247 360,244.9 352,244.9ZM284,221 284,222 285,222.2 299,223.2 306,225.9 346.2,225 351.2,224 346,222.4 340,221.7 329,221.8 313,223.4 304,223 301.3,221 298,220.3 284,221ZM257,172.9 252.5,174 253,176 251.1,177 252.9,178 257,178.5 268,177.7 278,179.2 283.4,178 279,175.5 270,173.6 257,172.9ZM385,186.9 384.1,187 391.6,187 388,186.7 385,186.9ZM470,172.7 469.2,173 475.2,173 472,172.7 470,172.7ZM491,361.9 488.5,363 488.4,364 493,366.3 503,364.7 519,364 516,362.6 510,361.7 491,361.9ZM317,285.9 316.3,286 316.3,287 332,288.5 337,288 339.6,286 334,285.2 317,285.9ZM385,253 384.3,254 394,255.9 413.4,255 402,252.3 385,253ZM606.5,147 610,146.8 613.1,147 611.8,148 609,148.2 607.4,148 606.5,147ZM500.1,149 508,148.6 511.2,149 508,149.2 500.1,149ZM697.8,149 703.1,149 705.7,150 701,150.8 695.9,150 697.8,149ZM402.9,152 411,151.3 421.1,153 419.2,154 418.2,156 411.4,158 419.7,159 417.6,160 415.2,164 413,165.5 404.8,164 404,163.1 396,160.3 387.2,160 387.2,159 392.8,157 390.8,155 393,153.4 396,152.4 402.9,152ZM406,161.9 405.5,162 410.7,162 408,161.9 406,161.9ZM688.7,152 703.6,153 698,154.8 675,156.4 670,155.6 667.9,154 674,152.1 688.7,152ZM704.7,152 707,151.8 724,151.6 724,152.4 707,152.6 704.7,152ZM535.9,153 539,152.6 543.9,154 543.2,155 539,155.7 526,155.8 517.2,155 518.2,154 521,153.3 531,153.7 535.9,153ZM606.8,153 615,153.2 619.3,156 619,156.9 614.9,157 603.8,155 606.8,153ZM253.2,154 259.5,154 257.2,156 258.4,157 246.3,159 243,161.2 232,160.4 232,158.1 233.4,158 232,158 232,155.6 245,156.2 250,155.5 253.2,154ZM722.7,155 724,155 724,157.1 721,156.8 720.4,156 722.7,155ZM709,157 714,156.5 718.8,157 719.7,158 711,158.3 709,158 709,157ZM687.7,158 691,157.7 694.9,158 694.4,159 692,159.4 684.7,159 687.7,158ZM649,159 659,158.4 667.1,159 664.6,160 650.4,162 659.4,163 661.3,164 659,164.2 643,163.4 635.3,161 636.1,160 639,159.5 649,159ZM534.2,161 545,160.3 554.1,162 551,163.1 545,163.4 536,162.1 534.2,161ZM619.4,162 627,161.5 632,162 626,163.1 619.4,162ZM232,165 234,164.8 242.6,167 239.8,168 232,168.5 232,165ZM533.2,166 537.5,166 540.9,167 533,167 533.2,166ZM645.7,167 658,166.4 666.9,169 663.4,170 657,170.3 641.4,169 641.1,168 645.7,167ZM420.4,168 425,168 426.7,169 424,170 419,170.3 415.4,170 414.5,169 420.4,168ZM717.5,168 724,167.6 724,169.2 717.8,169 717.5,168ZM683.7,169 685,168.9 687.1,169 686,169 683.7,169ZM385.6,174 394.4,175 390,176 379,176.3 373,176 371.8,175 385.6,174ZM401.4,174 409,173.7 423.7,174 423.6,175 405,176.8 400,176.2 397.9,175 401.4,174ZM349.8,175 353,174.8 355.7,175 352,176 350.6,176 349.8,175ZM565.4,175 574,174.2 577.1,175 576,176.1 558,180 553.1,183 547,183.8 537,183.7 535.4,182 529.8,179 531,177.5 534,176.8 559,177.6 565.4,175ZM329,176 341,175.5 346.6,176 346.7,177 346.1,178 345,178 329,177.8 326.4,177 329,176ZM584.6,177 593,176.7 602.7,177 602.4,178 591,179.6 586.2,179 584.6,177ZM426.4,178 431.9,178 437.4,179 435.7,180 433,180.1 424.9,179 426.4,178ZM665,182 677,181.1 685.5,183 672,184.1 665.1,183 665,182ZM558.7,184 562,183.3 569.8,184 568.3,185 564,185.4 558.7,184ZM591,185 606,184.2 616.3,185 614,186.4 608,186.9 597,186.6 591,185ZM642.5,189 649,188.6 651.6,189 652.8,190 648,191.1 637,190.9 633,192.1 627.3,192 642.5,189ZM658.1,192 663.1,192 669.8,193 661,193.9 656.9,193 658.1,192ZM722.1,192 724,191.9 724,195.2 716.2,194 716.2,193 722.1,192ZM253.5,193 260.9,193 257.3,195 254,195.4 244,195.2 241.9,194 253.5,193ZM232,196 242,195.5 242.8,197 250.7,199 246.6,201 248,201.3 271,199.2 293.6,203 287,203.5 283,205 291.7,207 288,207.8 262,208.8 260.9,209 260,210.5 258,211.1 232,210.2 232,196ZM237,204.9 239.4,206 245,206.7 250.6,206 249.3,205 246,204.6 237,204.9ZM710,202 724,201.9 724,205.2 705,205.2 702.8,205 701.5,204 710,202ZM651.8,215 660,215 668.1,216 667.5,217 659,218.3 649,218 649,217 651.8,215ZM695.4,222 699,221.2 707.8,222 703,222.8 695.4,222ZM683.3,227 714,227.3 718.9,228 715,229.2 697,229.6 675.6,228 683.3,227ZM267.1,236 272,235.5 274.9,236 270,236.2 267.1,236ZM236.2,241 238,240.9 238.5,241 237,241 236.2,241ZM717.3,243 724,242.1 724,259.6 689,256.9 668,258.2 655,257.7 643,258.3 632,257.6 623,258.1 617,259.3 608.4,259 613,257.2 623,257.3 625.1,256 622.6,254 624,253.5 663,252.4 666.5,250 666.3,249 660.5,248 660.3,247 671,244.7 677,245 678.5,246 683.3,247 684.8,249 689,249.9 701,250.7 710.4,250 711.4,249 709,247 712,245.8 719.3,245 717.3,243ZM232,246 239.8,246 241.8,247 232,248.1 232,246ZM239.8,251 275,251.9 277.5,253 259.4,255 263,256.4 279.5,258 282.3,259 277,260.1 251,257.8 232,258.6 232,251.8 239.8,251ZM291.8,260 292,260 292.2,260 292,260 291.8,260ZM717.3,261 724,260.4 724,262.9 716.8,262 717.3,261ZM673.5,264 675.8,264 679,265 674,265.2 673.3,265 673.5,264ZM710.7,267 724,266.9 724,272 717,272 711.1,271 709.3,270 709.3,268 710.7,267ZM717.5,277 724,276.5 724,280.2 703.6,279 704.7,278 717.5,277ZM708.5,285 715,284.3 724,285 714,285.7 708.5,285ZM681.7,289 690,288.9 692.2,289 689,289.3 681.7,289ZM232,299 232,298.2 244,298.3 249.9,299 250.4,300 242,301.3 232,301.6 232,299ZM696.8,300 700,299.5 706,300 698,301.8 695.3,301 696.8,300ZM232,304 232,303.4 235,303.7 238.1,305 232,306.3 232,304ZM654.8,351 657,350.9 658.9,351 657,351.1 654.8,351ZM697.4,352 701,352.2 709,354.2 720.1,355 718.4,356 713,356.5 687.9,355 689.1,354 697.4,352ZM621.1,354 637,353.9 640,356 636,356.6 634,357.6 633.1,359 630,359.6 618,359 614.1,358 614.8,357 618.2,356 621.1,354ZM242.9,358 248,357.4 267,358.1 285,357.5 297.6,360 295.2,361 277,363.7 263,362.9 255,361.6 232,361.4 232,359.8 237,359.6 242.9,358ZM326.1,362 338.6,362 342.1,363 335.8,364 335.9,365 341.7,366 342.9,367 327,366.6 308,367.2 296,366 305.8,363 326.1,362ZM668.8,362 678,361.2 694,362.3 724,361 724,371.8 715.2,371 715.5,370 722.1,368 719.6,367 700,365.2 675,364.5 668.7,363 668.8,362ZM247,366 249,365.8 251,366 249,366.2 247,366ZM248.1,369 254,368.4 273.9,370 272,371.1 260,371.6 248.1,369ZM653.2,371 660.1,371 674.1,375 672.5,376 668,376.3 656,375.7 640,376.2 619,375.3 615.6,376 618.3,378 618.3,379 609,379.7 588,379.2 577,377.6 564.2,377 601,376.5 625,373 649,374.6 652.4,374 652.5,373 650.4,372 653.2,371ZM255.7,373 261,372.2 263.3,373 263.5,374 257.9,374 255.7,373ZM549.3,375 556,374.1 560.7,375 557,375.5 549.3,375ZM332.4,376 337,375.3 350,375.4 352.2,376 332,377.5 328.4,377 332.4,376ZM364.7,376 380,375.3 387,377.7 402,378.9 404.9,380 402,380.5 393,380.1 374.7,378 364.7,376ZM699.4,376 708,375.3 724,375.6 724,377.6 714,377.2 701,377.9 698,377 699.4,376ZM673.2,379 678,378.2 688,378.8 702,378.2 705,381 703,382.1 698,382.8 687,381.7 680,383.1 667.6,382 669.6,380 673.2,379ZM339.1,380 349,379.9 358.2,381 367,383.2 381.6,384 380,385.2 376,385.9 345.9,384 342,383.3 337.1,381 339.1,380ZM528,380 539.2,380 573.8,384 556,385 547,384 527,384.8 524.5,384 527,383 522.3,381 528,380ZM265.3,382 270,381.2 273,382 269,382.2 265.3,382ZM290.9,384 297,383.3 301.3,385 300.9,386 299,386.5 292,387.2 291.4,387 292.1,386 290.9,384ZM384.3,384 399,383.2 420,383.6 423.2,384 419.5,386 423.8,387 427,388.7 431,388.5 435.7,387 432,385 436,384.8 442,385.5 444.8,388 437.3,390 436.2,392 434.2,392 429.7,391 427,389.5 408,388.7 400.7,387 398,385.4 389,385.1 384.3,384ZM232,385 232,384.4 234,384.4 243,385.6 260.2,386 263.7,387 262,388.2 252.7,390 270,391.7 277.6,394 275,395.2 267,395.9 246,393.8 232,393.7 232,385ZM574.4,385 577,384.6 581.4,385 578,385.2 574.4,385ZM717.7,385 724,384.4 724,386.2 721.6,386 717.7,385ZM278.3,388 283,387.8 287,388 282,388.3 278.3,388ZM519.5,390 533,390.1 539.6,392 532.6,394 531.7,395 533.1,396 532,396.3 515,396 506,396.8 503.1,396 514.5,393 513,392 513.9,391 519.5,390ZM606.9,390 612,389.5 615.8,390 610,391 606.9,390ZM421.6,391 423,390.8 424.1,391 420.2,392 421.6,391ZM471.3,391 477,390.5 484,391.6 505.3,392 494,392.1 479,393.6 472,393 469.6,392 471.3,391ZM327.8,396 345,395.9 360,397.1 360.6,398 360.2,399 353.7,401 355,402.4 375,401.7 396,402.8 409,402.2 418.7,404 412,405.3 388,406.3 372,404.5 364.3,406 355,406.5 349,406 346.2,405 353.5,403 353,402.8 330,402.7 323,403.7 314.9,406 325,406.3 330,407.4 330.2,408 325.1,410 326.3,411 323,411.5 313,411.3 312.2,411 313.4,410 317.5,409 305,406.3 287,407.1 280.9,406 284,404 307,402.9 314,400.7 323,400.6 324.8,400 317.5,398 327.8,396ZM342,400 344,400.2 346.7,400 344,399.7 342,400ZM556.5,396 564,395.4 568.5,396 569.5,397 558.2,398 558.6,399 569.2,400 569,401 564.5,403 563,404.6 561,404.8 542,403.2 532.2,401 535,399.8 543.4,399 556.5,396ZM717.2,396 724,395.4 724,398 709,398.7 700.4,398 705,396.7 717.2,396ZM473.2,397 484,396.2 489.3,398 485.5,400 487,400.4 494,401.3 505.6,401 478,403.2 469.3,402 468.7,401 470.8,400 473.2,397ZM640.1,397 642,396.7 646.5,397 643,397.2 640.1,397ZM269.6,399 273,398.3 280,398.4 287.2,399 290.4,400 274,402.4 266,404.6 253.6,405 264,406 266.4,407 256,407.2 245,408.8 232,409.1 232,400.4 265,401 268,400.5 269.6,399ZM582.1,399 585,398.7 599.6,399 594,399.7 582.1,399ZM629.7,403 632,402.6 634.2,403 632,404.1 629.7,403ZM708.6,403 724,402.4 724,406.3 713,405.2 708.4,404 708.6,403ZM487.8,405 497,404.8 500.7,406 498,407.6 488.8,408 481,409.9 477,408.8 473.7,406 476,405.2 487.8,405ZM574.3,405 579,404.6 589,406.5 609,407.2 611,407.9 610.9,409 612,409.5 620,410.5 626,410.3 634,407.1 641,407.1 643.9,408 643.3,409 639.5,411 642.5,413 641.3,414 633,415.8 609,414 596,414.1 586,412 561,411.1 547,413.1 541.7,412 551,409.2 553,407.5 556,406.7 562,405.5 568,405.9 574.3,405ZM643,406 648,405.6 653.7,406 652.2,407 650,407 643,406ZM723,408 724,407.9 724,409.5 720.3,409 723,408ZM416.8,409 419,408.6 421.1,409 420,409.3 416.8,409ZM421.8,410 424,409.6 429.9,410 428.3,411 425,411.2 422.7,411 421.8,410ZM446.6,410 448,409.8 451,410 449,410.1 446.6,410ZM475.7,411 481,410.2 485.1,411 478.5,412 483,412.3 510,410.7 514.4,412 514.1,413 510,414.1 489,413.8 488.5,414 489.2,415 481.8,417 481.1,418 482,418.8 487.1,421 480.4,424 458.2,420 473,416.4 475,413.5 476.7,413 473.8,412 475.7,411ZM702.6,411 707,410.6 713.7,412 709,412.9 709,414 724,417 724,421.8 699,421.4 697.1,421 696.9,420 709.5,417 705,415.8 696,415.4 688,415.9 682.8,415 682.8,414 685,413.6 695,413.7 702.6,411ZM304.4,413 311,412.2 313.2,413 307,414.4 303.7,414 304.4,413ZM554.9,415 563.9,415 565.8,416 564.6,417 568,417.5 574,417.2 581,415.7 593,416.8 598.3,418 596,419.3 589.2,420 607.7,422 605.1,423 605,424.2 595,424.1 585.8,422 586.1,421 585,420.7 569,420.7 545.3,417 554.9,415ZM313.2,419 316,418.8 319.6,419 317,419.2 313.2,419ZM332.5,419 356,419.5 376.7,422 379.4,423 369,425.6 356.9,426 354,428 356.1,429 352.7,429 351.1,428 343.3,427 343.9,426 354,425.3 357.7,421 350,420.3 335,420.5 332.3,420 332.5,419ZM287.5,421 296,420.9 297.8,423 301,424.1 313,424.5 314.2,425 314.5,426 312,428 309,428.4 301.4,428 300,426.9 295,426.3 260,428.1 256,427.6 251.6,425 252.6,424 256,423.3 272,422.7 287.5,421ZM404.5,421 409.6,421 412.1,422 403,422.7 396.1,422 404.5,421ZM616.3,422 623,421.8 637.6,423 631,425.3 626,423.6 619.8,424 619,425 613.9,425 612,424 616.3,422ZM518.8,423 528,422.6 541.3,425 534,426.3 517,424 518.8,423ZM606.7,425 607,424.9 608.7,425 608,425 606.7,425ZM385.2,427 393,426.4 405.8,428 406.8,429 397.1,429 385.2,427ZM429.2,427 439,426.6 441.2,427 443,428.6 451.9,429 450.6,430 448,430.2 440,428.6 424,429.4 419.1,429 420,427.9 429.2,427ZM495,428 506,427.2 513.3,428 498,429.7 495.3,431 499.9,433 499.6,434 495,435.1 484.3,436 482.9,437 488,438.1 492,441.4 495,441.8 500.4,439 510,436.2 512.2,435 511.5,434 513.9,434 523,436.2 533,437.2 540.7,441 539.4,443 536.1,444 529,445 520,444.2 517.9,445 526,446.5 528.7,448 525,449.1 506,448.7 494,447.1 481,447.3 462.1,443 475,442 462.3,440 473.7,438 472.2,436 473,434 472.2,433 465.4,431 466.9,430 478,428.2 489,428.6 495,428ZM501,442 493,442.3 491,443 490.7,444 496,444.7 507.8,444 509.9,443 501,442ZM523.5,428 532,427.7 536,429 530,429.5 522.6,429 523.5,428ZM671.9,431 678.1,431 681,432.3 692,432.3 694.1,433 694.1,434 696,435.3 706.5,436 700.9,437 674,435.1 673.3,435 675,433.7 678.5,433 671.9,431ZM537.9,432 542,431.6 559,434 540,434.5 531.4,434 529,433 537.9,432ZM343.8,434 353,433.3 360.9,435 357,436.3 349,436.7 342,436.2 340.4,435 343.8,434ZM287.7,436 290,435.5 293.3,436 291,436.3 287.7,436ZM620.9,436 627,436 631.8,437 629.8,438 629.6,439 630.8,440 629.5,442 638,443.8 639.9,445 626,446.2 620,448.4 606,449.4 600.7,449 609.9,446 607.6,444 610,443.1 623.5,442 622.9,441 619.5,440 620,439 614.4,438 615.8,437 620.9,436ZM302.4,438 306,437.3 309.9,438 309.2,439 309.7,441 306,441.9 300,440 299.9,439 302.4,438ZM400.5,439 422,438.9 427.1,440 427.3,441 409.2,441 400,440 400.5,439ZM442.4,439 449,438.6 458.1,440 444,440.7 439.8,440 442.4,439ZM708.5,439 724,439.5 724,443.5 715,441.9 702.7,441 703.4,440 708.5,439ZM319.4,442 325,441.3 331.6,442 331,443 329,443.1 316.4,443 319.4,442ZM688.5,445 692.7,446 678,448.1 666.3,447 670,445.9 688.5,445ZM232,446 232,445.6 239.1,446 237.1,447 232,447.4 232,446ZM426.7,447 434,446.9 441,448.1 455,446.7 462.9,449 460,449.7 446,450.2 439,449.4 419,449.8 417.9,449 426.7,447ZM275.7,449 294,448.3 296.8,449 296.9,450 298,450.6 304.4,452 282,451.8 273.4,450 275.7,449ZM581.3,449 588,448.3 598.7,449 597.2,450 594,450.3 581.3,449ZM390,451 398,450.7 402,451 398,451.7 390,451ZM497.5,451 503,450.9 511.4,452 495.6,452 497.5,451ZM258.2,452 260,451.8 261.5,452 261,452 258.2,452Z"/>
<path fill="#0064ff" d="M456.2,92 457,92 507.6,92 500,93.2 464,93.8 456.2,92ZM628.2,92 698.2,92 699,93 662,93.6 652,95.2 642,95.7 629.9,93 628.2,92ZM722.8,92 724,92 724,92.1 723,92 722.8,92ZM264.2,94 272,93.6 278.4,94 277.4,95 272,95.6 264.7,95 264.2,94ZM605,94 609.1,94 611.8,95 601,97.4 593.2,97 595,95.8 605,94ZM457,96 460.1,96 462.9,97 452.1,97 457,96ZM549.9,98 552,97.9 553.3,98 552,98 549.9,98ZM599.3,102 610,102.1 624.2,105 624.2,106 629.9,107 634,108.7 654,107.7 656,107.2 656.2,106 659,105.2 666,106 665.6,107 664,107.6 651,108.7 646.5,110 648.2,111 648.7,113 646.4,115 647,115.4 652,116 656,114.4 660,114.9 661.4,117 664,118 662,118.6 652,119.5 636,117.8 623,118.5 620.1,118 618,116.5 610.1,115 609,113 622,111.1 636,112.7 640.5,112 641.4,111 634,109.3 624,109.2 621.8,108 622.1,107 621,106.3 617,105.6 596,105.1 594.5,105 593.6,104 594.9,103 599.3,102ZM717.4,104 724,103.3 724,105.2 712.2,105 717.4,104ZM293.2,105 298,104.3 299.7,105 296,105.6 293.2,105ZM537.7,105 543.1,105 542.5,106 538,107.1 528.3,106 537.7,105ZM466.2,107 480,106.5 489,109.4 498,108 503.1,108 505.9,109 488.4,114 503,115.9 508,118.3 513,119.4 532.9,119 534.4,120 534.6,121 531.1,122 526,122.2 510,120.6 475,120.3 462,118.8 455,121.2 449,121.6 444.6,121 451.5,119 452.3,118 449.1,117 464,115.4 465.6,115 465.3,114 467.6,113 475.4,111 472,109.1 465.4,108 466.2,107ZM666.3,111 669,110.9 677.2,112 668,112.1 666.3,111ZM505.6,113 520,112.6 522.8,113 523.4,114 509,114.9 507,114.6 505.6,113ZM425.5,115 432,114.9 439.4,116 438.9,117 433,117 426,116 425.5,115ZM450.2,115 451,114.7 452.5,115 451,115.3 450.2,115ZM406.1,117 417,117 425.1,119 422,120.1 396,121.9 390.8,121 395,118.9 406.1,117ZM577.7,117 583,116.3 588.2,117 582,117.6 577.7,117ZM303.1,120 308,119.5 311,120 310.5,121 307,121.2 303.2,121 303.1,120ZM236.7,122 237,122 238.2,122 237,122 236.7,122ZM463.4,125 476,124.3 482.8,125 484,126 474,126.4 463.4,125ZM343.2,127 353,126.4 359.3,128 331,131 319,130.1 317.2,129 343.2,127ZM628.3,128 648,128.7 651.6,130 648,131.7 642,132.7 640.5,134 633,134.4 626,134 623.9,133 626,131.6 630.6,131 622.8,131 618.3,130 628.3,128ZM689.1,128 696,127.5 700.7,128 693,129.1 689.1,128ZM232,130 232,129.4 237.3,130 232,130.9 232,130ZM380.9,130 387,129.8 393.2,131 385,132.3 380.9,131 380.9,130ZM485.6,130 489,129.2 493.3,130 490,130.2 485.6,130ZM718.4,131 724,130.4 724,135.9 717,135.7 713,134.3 713.4,133 718.4,131ZM419.9,132 426,131.6 448.2,132 423,136.1 416,135.4 413.3,134 419.9,132ZM473.3,132 477,131.1 479.1,132 476,132.6 473.3,132ZM505.3,132 510,131.1 525,132.7 529.4,134 529.5,135 528.8,136 526.3,137 520,137.7 497.7,136 504.5,134 505.3,132ZM674,133 681,132.6 684,135.3 693,137.7 693.8,138 693.5,139 690,140.1 679,140.1 679.9,139 668.3,136 674,133ZM262.9,134 265,134 266.2,135 266,136 255,136.6 249.7,136 251,135.3 259,135.1 262.9,134ZM292.4,135 294,135 294.8,135 294,135 292.4,135ZM719,137 720,136.3 724,136.2 724,137.6 719,137ZM429.1,138 431,137.9 432.5,138 431,138.2 429.1,138ZM474.9,138 484,137.8 490.6,138 490,139 478,140 477.1,140 477.9,139 474.9,138ZM707.2,140 712,139.2 721.6,140 722,141 721.3,142 724,142.3 724,145.4 713,144.9 692,147.4 687.7,147 686.7,146 695,143.3 706.8,142 707.2,140ZM525.7,141 536,140.4 539.5,141 540.8,142 532,142.3 525.7,141ZM361.9,143 370,142.6 390.3,145 387.9,148 366.4,149 360.3,148 366.4,146 365.3,145 361.2,144 361.9,143ZM232,147 232,146.4 234,146.4 249.1,147 242,148.3 232,148.1 232,147ZM535.2,147 559,146.6 574.5,149 571,149.7 559,149 546,149.6 535.2,147ZM281.6,148 284,147.8 286,148 283,148.3 281.6,148ZM311.6,150 323,149.5 332,150.3 349.8,154 350.1,155 310,156.6 307,157.2 304.4,159 304.3,160 313.7,162 313,164 317.7,166 330.9,167 332,167.8 338.2,169 338.5,170 337,170.4 330.6,170 331.3,169 330,168 324,167.3 292,167.8 283,169.2 277.9,167 277.7,166 286,164.6 303,165.3 307,165 309.3,164 302.5,163 300.2,162 300.2,161 299,160.2 292.2,159 288,156 293,154.7 310,154.6 316.2,153 314,151.5 308.5,151 311.6,150ZM489,151 492,150.7 493.5,151 490,151.4 489,151ZM585.7,151 588,150.8 590.5,151 588,151.3 585.7,151ZM407.4,152 413.2,152 417,153 413.9,154 414.7,155 413.3,156 406.2,158 415,160 412,160.8 404,160.2 397.5,158 393.3,155 393.8,154 396.5,153 407.4,152ZM478.3,152 488,151.5 489,152 488.2,153 489,154 486,156.7 481,157.9 467.9,156 467.2,155 478.3,152ZM674.3,153 688,152.4 695.7,153 697.7,154 681,155.7 674,155.7 670.6,155 670.4,154 674.3,153ZM520.5,155 523,154.3 529.5,155 525,155.2 520.5,155ZM607.3,155 610,154.1 613.6,155 611,155.2 607.3,155ZM232,156 234.5,156 234.5,157 232,157.1 232,156ZM245.4,157 249,156.8 251.3,157 246,157.6 245.4,157ZM476.3,159 481,158.3 488.9,160 490.6,161 488.9,162 480,162.4 471.4,161 471.1,160 476.3,159ZM653.6,159 660.1,159 659.6,160 644,161.2 641,161 639.8,160 653.6,159ZM317,161 320,160.1 323.3,161 320,161.5 317,161ZM537.9,161 546,160.9 551.6,162 548.3,163 544.1,163 538.1,162 537.9,161ZM259.9,162 266.6,163 266.4,164 254.7,163 259.9,162ZM232,166 235,166.2 238.9,167 232,168 232,166ZM462.1,167 465,166.3 475,167.7 480.6,169 486.1,172 482,172.4 464,170.4 461.4,169 462.1,167ZM648,167 657,166.7 664.7,169 660.1,170 655,170 643.9,169 643.2,168 648,167ZM723.7,168 724,168 724,168.1 723.7,168ZM260.2,171 270,170.2 286.7,173 283,174.3 278,174.4 262.2,172 260.2,171ZM250.3,172 253,171.7 254.8,172 252,172.4 250.3,172ZM239.7,174 250,174.5 251,175 250.9,176 247.1,177 248.8,178 261,180 262.2,179 266,178.5 276,179.9 283,179.7 287.2,178 284.5,177 283.3,176 284,175.6 291,175.1 296.3,176 288.5,178 290.4,179 301,181.3 313,181.8 317.7,183 316.2,184 312,184.3 276,184.2 271,182.1 260,181.8 251,183.2 240,186.3 232,186.6 232,174.7 239.7,174ZM382.4,175 387,174.6 390.8,175 387,175.4 382.4,175ZM401.6,175 407,174.2 412.7,175 405,175.5 401.6,175ZM496,175 499,174.6 512.6,176 515.5,177 509,177.9 498,177.7 493.6,177 496,175ZM332.4,176 341,176 341.1,177 329.2,177 332.4,176ZM466.3,178 470,177.7 478,179.5 496,181 492,183.6 486.9,183 486.7,184 530,184.9 552,188.4 568,188.5 603,193.4 617,193.6 619.4,195 614.8,196 615.2,197 650,199.3 661,201.9 662.5,203 661,204.1 657,204.7 644,204.5 640.9,204 641,203 623.8,205 638,205.2 649,207.2 676,206.1 686,208.7 703,208.7 712,210 695,210.8 691,212.7 688.5,213 694,214.4 712,213.2 724,214.4 724,219 716,219 698,217 695,215.2 688.5,214 687.8,213 685,212.4 684,210.4 682.4,210 672,210.6 664,210.2 646,211.7 631,208.7 627.5,209 625.5,210 625.7,212 623.4,213 623.7,214 626.5,215 627.1,216 631.9,217 628.6,218 603.1,221 600.6,222 600.9,223 602.9,224 602.9,225 608.2,227 608.9,228 592,229.5 590,231 595,232 609,231.8 626,234.1 646,233.6 658,235.2 668,238 665.7,239 638,240.6 634,240.3 625,237.3 615.6,238 612.1,239 615.9,241 616.8,242 615.9,243 625,244.6 626.9,246 623,247.4 606.9,249 606.9,250 614.9,252 610,252.9 605,253 599,251.1 594,250.5 575,251.3 573.8,251 573.9,249 570,248.6 564.9,249 563.2,250 562.9,251 577,254.2 592.1,256 582,257.6 568,257.1 563.8,258 590.3,260 593.3,261 593.8,262 602.7,264 604.5,265 604.1,266 606.5,267 601,267.9 590,268.1 586.4,269 587.1,270 594,271.4 602,272.5 612,272 623,272.6 639,270.8 648,270.6 655,271.5 668,270.7 691,272.6 696,274.6 696.5,275 692,276.3 682,276.5 678,276.2 669,273.5 654,272.6 640,272.9 620,274.6 614,276.1 607,276.6 598.3,279 605.6,281 608,282.6 631,285.4 642,286 644.8,287 642.5,288 629,290.4 618,291.4 607.1,289 597,288.8 594.1,290 594.3,291 593.1,292 585,294.4 564.3,296 567,297.1 594,297.8 613,300 604,300.1 597.9,302 602,303.1 610,303.1 613.8,304 597.1,306 598,307 612,307.6 623,306.7 628,304.9 630,305.8 630.1,307 636,309.1 652.1,309 673,307.2 693,309.2 704,309.5 714,311.2 724,311.4 724,313.7 705,313 700.5,314 703.5,315 715.5,316 717.5,317 716.5,319 718,320.6 724,321.8 724,324.7 717.4,325 715.2,326 716.8,327 724,327.4 724,332.7 694,331.8 688.6,333 686.9,335 699,334.4 724,336.3 724,341.7 720.8,342 724,342.4 724,349.1 700,349.7 694.6,349 698,347 693,346.2 674,347.9 652,347.9 641,351 612,350.9 602,348.8 594,348.3 589.9,349 592.2,350 593,352 601.2,353 599.8,354 596,354.6 581,351.8 578.4,351 578.8,350 575.2,349 565,348.7 551,350.1 546,351.8 529,353.4 526.2,354 527.8,355 532,355.2 552,353.5 559,354.5 561.9,356 557.9,358 548.9,360 549.1,361 547,364 523,363.9 510,361.2 492,361.2 488.2,362 486,364 487.8,366 488,369 493.8,372 486.9,375 486.5,376 488.7,380 482.3,382 483.8,386 478,387.1 474,386.6 471.2,385 471,383.9 477.5,382 470.6,379 469.9,378 471.3,375 464.9,372 462.4,370 471.9,366 472.1,365 467.9,361 445.7,359 441.8,357 431,355.7 425.8,356 426.2,357 425,357.1 421.7,357 421.3,356 419,355.8 400,357 390.3,359 388.8,360 400.3,361 397.1,362 399.1,364 387.6,366 396,367.5 411,367.6 422,369.5 446.8,372 445.5,373 430,374.4 425,374 420,372.2 411,370.6 392,368.8 379,369.2 373,370.3 365,369.9 362.1,369 366,367.5 385,365.2 386.9,363 377.5,361 377.8,359 383.2,358 383.6,357 378.9,356 372,355 351,354.5 336,355.1 325.5,353 349,352 341,350.7 325,351.5 321,351 321.8,350 335.2,348 341.5,346 341.7,345 327,342.5 325.9,342 327.7,340 325,339.4 304,338.3 295,338.6 286,340.1 273.2,341 271.9,342 274.6,344 273,344.3 264,344.8 252,344.1 249.2,345 246.9,347 248,348 247.4,349 252,350.8 262,350.8 285,349.3 301,350.6 306,352 301,353.7 290,354.5 266,353.3 244.8,356 232,356.5 232,352.3 234.8,352 232,351.8 232,341.6 254.3,340 241,338.3 232,338.2 232,331.6 236.3,332 243,334.2 252,334.1 253.8,333 244.5,330 244.7,329 248,327.5 256.2,327 258.6,326 257,325.2 248,325.4 242,323.6 232,323.1 232,321.6 238,321 251,321.5 259,319.6 265.8,319 264,317.9 253,318.5 247.3,317 251,315.3 259,315.6 268,317.1 275,316 260.5,311 262,310.4 273,309.5 295,309.8 303,307.5 325.2,306 309,304.3 296,306.4 287,306.3 283.2,305 284.6,304 283.7,303 265.8,300 280,297.8 290.4,299 292,300.3 295,300.9 309,300.6 314.4,300 315.6,299 312,297.7 310.1,296 306,294.7 293,293.6 278,293.6 277.3,293 277.7,292 283,290.5 285.1,289 280.2,288 312,286.1 318.2,288 334,288.8 344,286.5 352.7,286 351,285.1 344,285.8 334,284.7 312,285.8 304.9,284 308,282.8 329,282.4 334.9,281 333.2,279 333.6,278 332.7,276 328,275.2 312,275.9 305,277.4 297.4,278 309.5,280 302,280.7 296.8,283 282,280.8 263,282.1 259,281.7 256.6,281 255.8,280 257.7,279 261,278.8 278,279.6 285.3,277 270,276.5 265.2,275 279,273.1 281.1,272 279,271.6 265,272.4 262.5,273 262.8,274 262,274.5 258,275.3 242,276.2 232,275.8 232,261.2 238,261.4 242.5,263 237.9,266 240,266.5 246,266.5 256,265.1 273,266.7 286,266.5 289.8,267 287,268.5 277.4,269 281,270.3 301,269.5 312,270.7 314.8,270 311,268.6 295.6,267 304,264.7 316.3,263 321.6,261 324,259 327,258.2 340,259.2 348,261.2 361,262 359,263.5 351,262.6 342,264 366,264.4 379,263 381.8,262 383.9,260 383.7,259 389,256.3 412.1,256 416.6,255 409.7,253 406.3,251 398,250.3 390,252.2 371.1,253 363,254.5 344,255.5 315,254.9 301,253.2 290.6,253 282.1,250 288,248.1 298,248.3 299.4,250 294.7,251 300,252.8 310,251.3 323.3,251 327.1,250 323.9,249 327,248 331,249.5 343,250.2 352,248.5 378.5,248 374,246.4 357,244.3 341,246 320,246.5 314,247.7 286,247.6 282.1,246 291,244.8 305,245.9 313,245.7 315.8,245 319,242.9 332,242.4 337.3,240 335,238.5 317,238.2 316.2,238 317.3,237 321.2,236 313,235 312.4,234 322,233.7 330,235.3 331.3,234 336,233.2 360,232.2 363.4,231 362.5,230 357.9,229 333,228.2 317,228.1 306,229.5 300,227.8 278.5,227 283,226.6 287,225 282,223.2 261,223.4 242,220.3 232,221.6 232,213.6 244.9,215 239.5,218 242,218.5 265,217.9 280,214.5 293,215.4 304.3,214 316.8,211 315,208.3 310.6,207 311.8,206 326.4,203 324,200.7 319.3,199 323.1,198 324.1,197 323.3,196 324.2,195 322.4,194 322.1,193 323.1,192 320.7,191 320.6,190 322,189.4 337,190.3 346,192 365,187.7 371.3,188 368.7,189 370,189.1 395.7,188 398.9,187 395,185.9 394,185 395.1,184 406.5,183 407.7,182 406.9,181 410,180.4 414.2,181 410.2,183 416,184.9 436,187.1 443,187.1 455,183.6 458,181.2 466.1,180 465.2,179 466.3,178ZM592,241.9 591.3,242 608.7,243 600,241.6 592,241.9ZM677,330 673.8,331 685.2,330 682,329.8 677,330ZM693,339.9 703,341.2 705.7,341 706,340 693,339.9ZM275,332 267.1,334 276,336.1 285,335.9 288.3,335 282,332.7 275,332ZM298,309.9 296,310.4 295.5,311 296,312 306.9,313 321,313.1 331.5,312 332.3,311 318,309.7 298,309.9ZM332,304 327,305 355.8,306 353.9,305 347,304.1 332,304ZM346,299.9 345.3,300 349,300.8 353.8,300 346,299.9ZM358,282.9 357.3,283 359.4,284 363.1,284 363,283 358,282.9ZM336,236.6 335.3,237 337,237.7 340,237 336,236.6ZM288,220 283,220.4 280.7,222 282,222.8 296,223.8 301,226.2 305,226.8 350,225.2 355,224 347,221.9 341,221.2 329,220.6 321,222.4 314,222.6 307,222.1 298,219.6 288,220ZM342,193.9 341.3,194 346.8,194 345,193.5 342,193.9ZM533.2,178 543,177.2 557.5,179 553,180.5 546.2,181 545.8,182 542,182.5 534,180 533.2,178ZM668.7,182 677,181.7 681.6,183 674,183.7 667.3,183 668.7,182ZM562.8,184 564,183.9 565.9,184 564,184.2 562.8,184ZM271.3,185 274,185.1 281.4,188 279,189.4 275,189.5 269.3,188 265.6,186 271.3,185ZM602,185 607,184.8 611.9,185 611.2,186 607,186.3 602.2,186 602,185ZM317.9,188 320,187.8 322.4,188 321,188.3 317.9,188ZM250.8,189 253,188.6 255.7,189 254,189.4 250.8,189ZM643.5,190 647,189.7 648.7,190 646,190.2 643.5,190ZM718.2,193 724,192.3 724,195 717.9,194 718.2,193ZM232,198 237,197.5 245,198.5 246.9,199 241.3,201 247,202.6 257,202.9 258,204 260,204.5 264.9,204 265.2,203 263.2,202 262.9,201 267,199.8 272,200 284.8,203 277,205 276.2,206 277.8,207 277.9,208 277,208.1 263,207.7 254.6,206 252,204.5 246,203.7 237,204.3 233.3,205 233.4,206 232,206.3 232,201.4 236.7,201 232,200.6 232,198ZM713.9,202 724,202.3 724,204.6 714,204.8 707.1,204 713.9,202ZM234.2,207 238,206.6 250,207.8 256.4,210 247,210.1 236.8,209 237.3,208 234.2,207ZM717.2,210 724,209.7 724,211.2 715.9,211 717.2,210ZM287.7,212 290.2,212 289.8,213 280.4,213 287.7,212ZM269.2,213 273,212.9 278,213 275,213.8 269.2,213ZM654.6,216 658,215.7 663.5,216 662.4,217 656.6,218 653.7,218 652,217 654.6,216ZM619.4,223 625,222.1 629.9,223 631.4,224 621,225.9 611.8,225 611.7,224 619.4,223ZM257.3,228 264,227.2 271.1,228 262,230.6 246,232.3 232,231.1 232,229.1 257.3,228ZM687.8,228 694,227.3 717.1,228 713,229 705,228.4 696,228.9 687.8,228ZM625,229 638,228.4 664,229.7 674.2,231 675.2,232 675.1,233 677,233.4 706,233.1 711,233.9 711.4,235 710.7,236 709,236.2 684,237.1 679,235.6 658,232.7 627,230.2 625,229ZM291.3,235 304,234.7 307.4,235 308.3,236 305,237.2 298,237.5 290.9,236 291.3,235ZM720.9,243 724,242.7 724,244.5 721.9,244 720.9,243ZM717.1,246 724,245.2 724,249.8 718,249.4 711.8,247 717.1,246ZM232,247 232,246 239.5,247 232,247.6 232,247ZM665.1,247 673,246.5 690,250.6 720,250.7 724,252.1 718.8,253 717.6,254 724,254.7 724,259.1 691,256.7 667,257.9 630,257.2 628.1,257 629.7,255 626,254 644,253.1 664,253.5 666,252.9 669,249 665,248 665.1,247ZM236.2,252 245,251.2 270,252.1 274.2,253 264,253.7 249,255.9 244,257.4 232,257.7 232,252.1 236.2,252ZM381.7,255 382,255 382.5,255 382,255 381.7,255ZM254.5,257 257,256.3 263.5,257 260,257.5 254.5,257ZM271.6,259 274,258.3 278.4,259 276,259.3 271.6,259ZM612.9,259 615,258.3 616.4,259 615,259 612.9,259ZM721.6,261 724,260.9 724,262.5 719.4,262 721.6,261ZM634.8,266 643.5,266 650.8,269 638,269.1 636,268.2 634.8,266ZM711.6,268 715,267.3 724,267.4 724,271.6 713.5,271 711.8,270 711.6,268ZM653.3,276 669,276.5 673.6,278 667.1,280 670.5,281 667,282.3 655,282.4 648.1,281 649.3,280 649.3,279 646.6,278 647.1,277 653.3,276ZM720.8,277 724,276.8 724,279.6 716.5,279 716.9,278 720.8,277ZM239.7,291 247,290.7 255,291.6 263,291 267,293 274.4,295 232,295.7 232,291.2 239.7,291ZM654.4,291 670,290.2 672.2,291 665.2,293 664,295.4 653,296.4 636,293.7 625,294 616.9,293 618,292.4 654.4,291ZM665.4,296 672,295.9 680.2,298 677,298.5 669,297.9 665.7,297 665.4,296ZM636.3,298 640,297.9 642.4,298 639,298.2 636.3,298ZM232,299 243,298.9 245.6,300 232,301 232,299ZM717.7,303 724,302.5 724,306.6 699,305.3 681.7,306 681.8,305 688,304.3 699,304.7 717.7,303ZM232,305 232,304.3 234.3,305 232,305.3 232,305ZM232,309 246,310 256.7,309 255.8,310 246.5,312 248.6,313 248.3,314 241,314.6 232,314.2 232,309ZM723.4,316 724,316 724,316.1 723.4,316ZM296.7,344 302,343.8 305.5,344 301,345.3 295,345 296.7,344ZM563.5,352 566,351.8 567.3,352 565,352.2 563.5,352ZM695.2,354 700,353.5 715.1,355 714.4,356 710.6,356 696.2,355 695.2,354ZM624.4,355 629.3,355 631.2,356 631.3,357 629,359 621,358.9 616.1,358 617.2,357 624.4,355ZM248.9,358 268,358.5 284,357.9 293.1,360 291.3,361 276,363.2 244.8,361 240.4,360 244,358.5 248.9,358ZM671.6,362 679,361.6 693,362.9 724,361.4 724,367.3 699,364.5 676,364.1 670.9,363 671.6,362ZM327.8,363 335.5,363 324.3,366 312,366.7 302.4,366 318,363.7 326,363.9 327.8,363ZM559.9,364 576,364.7 580.6,367 580.5,368 570,368.6 563,370.6 553,371.8 545.6,371 545.7,369 551.8,368 553.3,367 552.9,366 554,365.2 559.9,364ZM584.6,364 586,363.6 589.3,364 587,364.1 584.6,364ZM504.4,365 519,365 521.5,366 514,368.6 497.9,367 498.5,366 504.4,365ZM597.6,365 599,364.3 611.1,365 603,365.8 597.6,365ZM721.8,369 724,368.5 724,371.2 719.9,371 718.4,370 721.8,369ZM261.1,370 264,369.9 266.9,370 264,370.2 261.1,370ZM534.7,372 538,371.7 540.4,372 537,372.4 534.7,372ZM654.3,372 660,371.8 672.1,375 667,376 655.3,375 655.8,373 654.3,372ZM629.6,375 632,374.2 643.1,375 639,375.7 629.6,375ZM374,376 379,375.9 382.2,377 381.8,378 379,377.9 373.9,377 374,376ZM703.6,376 707,375.9 709.8,376 708.3,377 701.5,377 703.6,376ZM598.3,377 611,376.3 616.4,378 615.6,379 608,379.4 584.1,378 598.3,377ZM390.7,379 399.1,379 401.1,380 397.5,380 390.7,379ZM675.5,379 681,378.7 687,379.9 699,379.5 702.9,381 701.3,382 697,382.4 692.7,382 687,380.2 678,382.1 674.2,382 672.6,381 672.5,380 675.5,379ZM339.2,381 343,380.1 349,380.3 363,383.5 368.4,384 346,383.6 343,383 339.2,381ZM526.6,381 538,380.4 558,383.3 568.4,384 533,383.6 526.6,381ZM406.3,384 417.8,384 415.1,386 422.1,388 409,387.7 403,386 406.3,384ZM232,385 243,386.2 260,386.5 261.8,387 259,388.1 248.7,389 248.4,390 257,392.3 268,392 274.8,394 271,395 265,395.3 247,393.2 235.5,393 236.7,390 232,389.6 232,385ZM295.7,385 296,384.9 297,385 296,385.1 295.7,385ZM370,385 373,384.5 375.6,385 373,385.1 370,385ZM436.8,388 439,387.7 441.2,388 434.2,389 436.8,388ZM516.9,391 532,390.6 537,392 534,393.1 525,393.9 516.9,391ZM520.1,395 524,394.3 526.3,395 524,395.2 520.1,395ZM721.3,396 724,395.8 724,396.9 722,396.6 721.3,396ZM322.9,397 341,396.3 354.7,397 357.8,398 356.8,399 354,399.4 344,398.6 336.7,399 335.1,400 345,402 338,402.6 331.4,402 329,401.3 329.3,400 321.1,398 322.9,397ZM478.6,397 485,397.2 486.3,398 482.4,399 481.6,400 487.8,402 476,402.4 472.7,402 471.5,401 476.5,399 476.2,398 478.6,397ZM705.9,397 714.3,397 715.6,398 703.4,398 705.9,397ZM548.1,399 564.6,400 566.9,401 560,403.1 551,403.3 540,402.6 533.9,401 548.1,399ZM272.2,400 278,399.2 286.8,400 277,400.9 272.2,400ZM232,401 261,401.6 267.6,403 264,404 250,404.9 252.5,407 248,408.1 232,408.8 232,401ZM316.5,402 325,401.6 327.8,402 316,403.9 313.3,403 316.5,402ZM359.3,403 408,402.8 414.9,404 409.4,405 392,405.7 372,404 357,406.1 351.2,406 348.3,405 359.3,403ZM710.8,403 724,402.9 724,405.1 713,404.5 710.4,404 710.8,403ZM293.6,404 303,403.8 304.9,404 304.9,405 291,406.2 285.3,406 293.6,404ZM476.1,406 494,405.3 498.7,406 496,407.2 481,408.4 478,407.8 476.1,406ZM574.4,406 579,405.5 587,407 607,407.6 609,408 610.3,410 615,410.6 626,410.8 636,408.4 640.2,409 629.1,412 628.2,413 637,413.2 638.1,414 636.4,415 633,415.4 609,413.6 599,413.7 587,411.6 555,410.7 552.6,410 554.4,408 557,407.3 574.4,406ZM320.5,407 325.2,407 328.3,408 323,409 317.7,408 320.5,407ZM494.9,412 499.5,412 500.7,413 496.7,413 494.9,412ZM703.4,412 705.5,412 704,414.8 699.4,414 703.4,412ZM479.9,414 482,414 484.1,415 479,415.7 476.9,415 479.9,414ZM686.2,414 688.3,414 690.8,415 685.1,415 686.2,414ZM553,416 559,415.4 562.7,416 557,417.7 549.8,417 553,416ZM577.9,417 582,416.6 596.4,418 593,419.1 574,420.4 562.3,419 577.9,417ZM470.8,418 477,417.4 478.1,418 479.6,421 471,421.4 461.1,420 470.8,418ZM710.9,418 724,417.6 724,419.5 720.4,420 720,421 701,421 699.9,420 710.9,418ZM281.6,422 292,421.9 299.8,425 261,427.1 257,426.6 253.7,425 254.5,424 257,423.6 281.6,422ZM359,422 365,421.4 377,423 368,425.2 362,425.4 356.6,424 357,423 359,422ZM402.3,422 406,421.8 408.3,422 405,422.1 402.3,422ZM594.2,422 598,421.7 602.7,422 599,422.6 594.2,422ZM522.3,423 527,423 532,424.6 536.1,425 519.3,424 522.3,423ZM300.8,426 308,425.3 311.8,426 307,427.5 300.8,426ZM391,427 391,427 391,427 391,427 391,427ZM502.5,428 505,427.9 507.4,428 505,428 502.5,428ZM492,429 497.2,429 490.5,431 490.4,432 496.3,433 494.8,434 478,436.5 475.4,436 477.3,434 476,433 469.5,431 470.9,430 477,429.2 492,429ZM536,433 543,432.6 547.4,434 537.9,434 536,433ZM686.4,433 691,433 691.9,434 691,435 689,435.2 677.1,435 678.5,434 686.4,433ZM347.8,434 354,433.9 357.8,435 355.8,436 350,436.3 344.4,436 343.4,435 347.8,434ZM514.7,436 532,437.6 537.8,441 532,441.9 527.4,440 521,439.8 519.1,440 517.3,442 514,442.4 504.4,441 502.5,440 514.7,436ZM619.4,437 623,436.7 627,437 623,437.7 619.4,437ZM405.6,439 410,439 423.7,440 420,440.7 403.4,440 405.6,439ZM475.9,439 480,438.1 486.5,439 488,440 488,441.2 484.1,443 489.6,445 490.1,446 479,445.9 470.8,444 480.5,442 471.7,440 475.9,439ZM303.2,440 305,439.6 306.7,440 305,440.4 303.2,440ZM444.2,440 447,439.1 449.9,440 447,440.1 444.2,440ZM706.8,440 712,439.5 724,440.4 724,442.8 717,441.6 706.4,441 706.8,440ZM621.9,443 628,442.7 634.3,444 631.6,445 625,445.1 621.9,443ZM499.8,445 512,444.4 524,447 525.5,448 506,448.1 495.6,446 499.8,445ZM232,446 232,446 232.2,446 232,446 232,446ZM613.2,446 617,445.3 622.4,446 618,447.9 606.8,448 613.2,446ZM672.9,447 678,446.3 681.2,447 678,447.3 672.9,447ZM424.7,448 431,447.3 435.9,448 432,448.7 424.7,448ZM447.9,448 453,447.5 457.3,448 453.6,449 445.4,449 447.9,448ZM279,449 294,448.8 296,451 298.4,452 283,451.2 276.8,450 279,449Z"/>
<path fill="#0077ff" d="M459.5,92 460,92 503.8,92 499,93 476,93.5 464,93.2 459.5,92ZM631.4,92 632,92 678.3,92 644,95.1 631.4,92ZM601.9,95 605,94.8 607.5,95 601,96.5 597.7,96 601.9,95ZM599.1,103 608,102.4 611.8,103 612.7,104 602,104 599.1,103ZM723.6,104 724,104 724,104 723.6,104ZM659.9,106 661,105.9 663,106 662,106.5 659.9,106ZM623.9,108 626,107.4 629.2,108 627,108.5 623.9,108ZM479.6,109 480,108.9 480.4,109 480,109.2 479.6,109ZM481.1,110 482,109.9 485.2,111 483,111.3 481.1,110ZM616.2,112 623,111.7 634,113.8 643,113.2 644.6,114 643.4,115 643.8,116 657,116.7 661.4,118 650,119 637,117.1 624,117.5 611.7,114 611.4,113 616.2,112ZM470.7,113 482,112.6 482.9,113 479.4,114 479.9,115 500,116.4 507.6,119 507,119.8 504,120.1 476,120 462.3,118 460.9,117 469.8,115 468.3,114 470.7,113ZM510.2,114 513,113.2 519.8,114 513,114.1 510.2,114ZM404.2,118 412,117.1 422.6,119 418,119.7 402,120 398.9,119 404.2,118ZM450.5,120 455,119.5 456.7,120 453.1,121 447.9,121 450.5,120ZM519,120 529,119.4 531.8,120 532.4,121 526,121.7 520.7,121 519,120ZM469.7,125 474,124.7 478.7,125 476,125.8 469.7,125ZM346.9,127 354,127 356.9,128 346.3,128 346.9,127ZM324.2,129 336,128.2 339.6,129 332,130.1 323.2,130 324.2,129ZM632.1,129 636.5,129 644.8,130 638,131 632.1,129ZM232,130 232,130 232.1,130 232,130 232,130ZM385.6,131 387,130.9 388.7,131 387,131.1 385.6,131ZM508.6,132 523,133 527.2,134 526,135.6 522,136.2 506.2,135 508.5,134 507.7,133 508.6,132ZM717.5,132 724,131.1 724,135.2 716.6,134 715.6,133 717.5,132ZM417.9,133 424,132.4 440.5,133 432,133.1 422,135.2 417.7,135 415.6,134 417.9,133ZM626.2,133 630,132.5 634.5,133 631,134 626.2,133ZM678.8,136 680,135.4 688.1,137 691.2,138 691.2,139 685,139.3 677.3,137 678.8,136ZM709.5,140 717.9,140 719.4,141 718.3,142 719,142.6 724,143.1 724,145.1 716,144.2 693,146.7 689,146 696,143.6 709,142.2 709.7,142 708.7,141 709.5,140ZM367.5,143 374,144.2 387.7,145 386.2,147 385,147.3 370,148.1 368.2,147 372,144.8 365.7,144 367.5,143ZM232,147 236,146.8 242,147 237,147.4 232,147ZM553.3,147 556.7,147 558.3,148 550,148.6 545.6,148 553.3,147ZM322,150 333,151 347.4,154 347,155 329,155.8 317,155.7 312.4,155 318,153.3 318.2,151 322,150ZM409.7,153 410,153 410.9,153 410,153 409.7,153ZM477.5,153 484,152.7 486.2,154 485.4,156 482,157 471,156 469.3,155 477.5,153ZM677.3,153 687,152.8 692.3,154 678,155.4 673.1,155 672.7,154 677.3,153ZM396.3,154 403,153.7 409,155 409.3,156 400,156.6 395.7,155 396.3,154ZM290.4,156 295,155.1 305.9,156 298,157 290.4,156ZM474.9,160 482.9,160 487.6,161 481,161.7 475.6,161 474.9,160ZM302.6,162 305,161.3 309.3,162 306,162.7 302.6,162ZM541.5,162 544,161.6 548.3,162 545,162.3 541.5,162ZM287.2,165 293,165 304,166 301.7,167 283,167 283.2,166 287.2,165ZM232,167 232,166.8 234.5,167 232,167.2 232,167ZM652.3,167 658,167.4 662.4,169 653,169.5 646.7,169 645.3,168 652.3,167ZM465,168 469,168 473.3,169 471.9,170 467.9,170 464.5,169 465,168ZM265.3,171 268,170.9 269.7,171 268,171.4 265.3,171ZM237.8,175 247.9,175 247.5,176 243.2,177 244.6,178 255,179.5 256.5,180 257,181 242,185.4 232,186.1 232,175.5 237.8,175ZM288.6,176 289,176 290.2,176 289,176.1 288.6,176ZM536,178 546,177.7 554.2,179 550,179.9 541,180.1 537,179.3 536,178ZM470.7,180 483.1,181 483.9,182 481.7,183 482.9,184 488,185 525,185.5 545.9,188 544.2,189 545.3,190 561,191.1 565,189.6 569,189.4 601,194.7 614,194.3 615.6,195 610.1,196 625,199.4 640.2,201 633,202.3 626,201.5 622,201.8 618,203.7 618,205 648,207.6 663,207.8 667,206.9 674,206.8 680.7,209 664,208.4 659.5,210 646,211 639.6,210 634,207.5 628,207.5 622.2,209 622,210 623.4,211 623.4,212 620.5,214 623.9,217 600.1,221 595.1,223 598.6,224 600.7,226 605.4,227 605.3,228 578.9,228 586,229.8 585.6,231 595,233 608,232.4 624,235.4 646,234.2 657,235.6 664,238 661,239 648,239.1 638,240.1 633,239.4 627,236.8 623,236.5 587.4,242 605,243.9 620,244.5 623.4,245 624.9,246 622,247.1 604.4,249 604.5,250 611,252 609,252.3 605,252.3 598,250.3 581,249.5 572,247.9 564,248.5 560.2,250 560.2,251 566,253.3 585.8,256 579,257.2 569,256.5 560,257.4 552.6,257 553.5,258 588,260.3 590.9,261 590.4,262 591,262.2 600,264.2 600.8,266 602.3,267 588,267.7 583.3,269 583.7,270 597.1,274 595.2,277 589,279 590,279.6 599.8,281 599,283 601,283.6 612,283.6 641.2,287 628,289.5 620,290.1 596,288.4 593.1,289 591.7,290 592.4,291 591.2,292 587.9,293 560.1,296 562.7,297 569,297.6 594,298.1 602,299 601.3,300 594.3,302 599.6,304 592.1,306 592.8,307 600,307.8 610,308.3 626,307.7 635,310 671,308 703.9,310 706.3,311 695.7,312 693.1,313 698.8,315 714,316.8 714.8,318 714.6,320 713.5,321 724,322.5 724,324.3 715,324.7 708,326.4 695,326.2 692.3,327 692.3,328 691,328.3 672,329.7 668.4,331 668,332 681,332.6 681.3,333 677.6,334 689,336.9 699,335 724,337.5 724,340.6 711,342.3 710.8,343 720,348 702,349.1 700.9,349 700.7,347 692,345.7 675,347.3 649,347.5 639,350.2 615,350.5 598.6,347 603.2,346 602.6,345 601,344.9 595.6,347 583,348.4 565,348.3 547,349.4 530,352 523.4,354 523.8,355 528,355.6 552,354.4 559.5,356 556.1,358 552,358.9 535,360 536.8,361 542.9,362 540,363.2 523,363.3 511,360.5 501,360.9 492,360.3 485.7,362 482.2,364 481.9,365 484,366.4 485.7,369 489.8,371 490.3,372 484.4,375 483.7,376 486,378.1 486.5,379 485.9,380 480,380.6 473.3,379 472.6,378 474,376 473.8,375 469.7,373 466.4,370 475.8,366 476.6,365 471,361 455,359.4 439,355.7 425,354.5 399,356.6 390,358.1 384,356.2 373,354.7 335,354.5 332.2,354 333.4,353 350,352.9 353.1,352 343,350 330.9,350 341,347.7 346.5,345 329.7,342 332.3,340 332.5,339 331,338.5 315,338.4 305,337.3 289.9,337 294.2,336 288.1,333 292.1,331 289,330 263,332.4 254,331.8 247.2,330 246.8,329 249,328.2 260,327.1 264,326 265,325 264.9,324 261,323.4 250,324 246.8,323 255,322.5 260,320.8 267.1,320 271,318.3 280.7,316 279.1,315 269,313 266.8,312 267.2,311 275,310.2 288.1,311 288.9,312 287.8,313 290,313.4 322,313.6 337,312.4 340.8,311 337.8,310 304.3,309 304.5,308 333,306.1 358,307.5 363.4,307 352,304 336,302.2 321.4,303 325,304 321,304.7 310,303.6 296,304.4 290,305.6 287.3,305 292.5,304 276,300.3 275.3,300 275.5,299 281,298.4 286.3,299 290,301.3 306,301.3 316,300.5 319.2,299 308,294.6 294,292.9 281.6,293 281.8,292 290,288.2 309,286.9 317,288.2 335,289.1 358,285.8 366,286.9 368.7,286 367,282.5 363,281.7 355,282.2 343,284.5 312,284.6 308.9,284 311.7,283 334,282.4 336.3,282 336.8,281 335.2,279 334.9,276 333,275 323,274.5 292,277.4 288.5,275 283,274 282.7,273 286,271.4 300,269.9 311,271.4 315.5,271 316.7,270 314,268.7 299.6,267 300.4,266 304,265.2 319.6,263 327,259 340,259.7 346.7,262 337.2,264 336,265 359,264.5 367,265.1 373,263.9 397,262.1 398.6,261 389,260.6 385.8,259 390,256.8 416,256.2 419.6,255 412.8,253 409,250.9 392,248.7 389.3,249 392,250 392.3,251 389,251.8 379,251.8 348.9,255 333,255.1 307,253.4 305.2,253 310,251.9 320,251.9 330,250.7 346,250.5 355,249.2 379,248.9 387,248 373,244.6 359,244 340,245.5 321,245.6 318.2,245 318.7,244 321.3,243 335,242.4 340,239.4 344.6,238 342,236.5 334.3,235 334.5,234 363,232.7 366.5,231 366.4,230 365,229.3 360,228.5 326,227.7 321.9,227 334,225.8 353,225.5 368.8,224 368.4,223 367,222.7 362,222 354,222.4 345,220.8 330,219.7 320,221.9 314,222 297,218.4 290,219.4 280,219.6 276.9,222 264,222.8 245.9,220 245.2,219 269,218.2 278,219.3 282.1,218 279.8,216 282,215.6 295,216.1 312,213.5 326,212.6 335,212.9 336,212 322,210.5 320.1,210 320.1,209 321,207.6 324.2,206 332,203.5 332.9,203 331.5,202 337.9,200 338.4,198 343,195.7 356,194.7 378,189.8 391,188.7 402,189.7 409,189 397.6,185 400,184.1 408,183.8 415,185.6 444.2,188 451.4,187 453.1,185 459,182 470.7,180ZM494,358.9 493.4,359 499,359 496,358.8 494,358.9ZM583,234.9 582.5,235 593,236.1 601.3,236 601.9,235 583,234.9ZM621,344.9 620.3,345 620.9,346 622,346.3 628.4,346 621,344.9ZM634,340.9 633.3,341 634.1,342 637,342.2 640.5,341 634,340.9ZM644,343.9 645,344.9 648,345.1 653.1,345 655.5,344 649,343.3 644,343.9ZM675,311.9 674.9,313 677,313.3 690.7,313 687.8,312 675,311.9ZM705,321.9 704.7,322 708.2,322 707,321.8 705,321.9ZM689,338.6 688.3,340 691.6,341 703,341.9 709,341.9 710,341.6 710.4,340 691,338.1 689,338.6ZM348,299 342.2,300 341.7,301 343,301.8 357.8,301 357.5,300 348,299ZM336,270.9 333.1,272 341,272.6 346.9,272 346.4,271 345,270.6 336,270.9ZM348,268.9 350,269.5 355.2,269 352,268.5 348,268.9ZM375,288 371.1,289 383,291.5 387.2,290 385.8,289 381.2,288 375,288ZM366,234.9 365.8,235 367.7,235 367,234.9 366,234.9ZM337,213.6 336.5,214 339,214 338,213.8 337,213.6ZM456,187 455.9,187 457.2,187 457,187 456,187ZM688,320 680.1,321 680.3,322 679,322.6 672,323.1 669.7,324 674,325.3 680.9,325 683,323 693.6,322 695.6,321 688,320ZM283.1,181 290,180.1 304,182.6 314.9,183 288,183.9 279,183.4 277.4,183 276.7,182 278,181.2 283.1,181ZM671.2,183 674,182.8 677.2,183 674,183.1 671.2,183ZM272.9,188 273,187.2 274,187.1 277.2,188 272.9,188ZM331.5,192 336,191.2 340.3,192 338.4,193 335,193.2 331.4,193 331.5,192ZM720.4,193 724,192.7 724,194.6 719.7,194 720.4,193ZM232,199 232,198.3 242.6,199 238,200.1 232,199.9 232,199ZM643,200 649.3,200 652,201.9 659.5,203 656,204.1 646.7,204 650.2,202 643.6,201 643,200ZM273.2,202 278.2,202 281.3,203 275,203.8 270.8,203 273.2,202ZM232,203 232,202 240.7,203 232,204.4 232,203ZM714.4,203 718,202.8 724,203.1 718,204 714.4,203ZM265.7,206 268,205.8 270.5,206 268,206.4 265.7,206ZM243.1,209 246,208.6 250.4,209 248,209.4 243.1,209ZM232,214 235.2,214 240.6,215 240.2,216 237,217.6 232,218.7 232,214ZM708.7,214 724,214.8 724,218.7 710,218 709.4,217 711,215.9 700.9,216 701.6,215 708.7,214ZM232,220 232,219.7 234.2,220 232,220.8 232,220ZM616.9,224 624,223 628.3,224 620,225.3 616.3,225 616.9,224ZM290.4,225 292,224.2 294,224.5 297.1,226 297.1,227 289.3,227 288.8,226 290.4,225ZM306,228 309,227.8 311.1,228 308,228.9 306,228ZM694.7,228 695,228 696.1,228 695,228 694.7,228ZM709.8,228 712,227.9 714.3,228 712,228.2 709.8,228ZM240.4,229 263,228.2 264.4,229 256,230.9 246,231.6 232,230.2 240.4,229ZM637.2,230 662.5,230 669.8,231 671.8,232 672,233 671,233.7 667,233.6 637.2,230ZM316.5,234 318,234 320,234 319,234.4 316.5,234ZM687.3,234 704,233.6 707.5,234 708.6,235 705.8,236 690,236.6 686,236.4 681.8,235 687.3,234ZM295.5,236 301,235 305.5,236 300,237.1 295.5,236ZM321.4,237 327,236.4 331.8,237 331.6,238 330,238.2 319.7,238 321.4,237ZM605.2,241 611,240.8 612.8,242 609,242 605.2,241ZM286.4,246 293,245.4 312.9,247 300,247.3 286.4,246ZM722.9,246 724,246 724,249 718,248.4 715,247 722.9,246ZM232,247 232,246.7 236.1,247 232,247.2 232,247ZM289.3,249 293.2,249 295.1,250 286,250 289.3,249ZM672.1,249 678,248.8 689,251.4 716.3,252 714,252.1 713,253 717,254.8 724,255.8 724,258.7 690,256.4 679,256.3 666,257.5 658.1,257 654.3,256 667.4,254 668.9,251 672.1,249ZM241.3,252 260,252.2 264.7,253 250,254.8 232,255.1 232,252.4 241.3,252ZM645,254 651,253.6 657,254 654,255 645,254ZM237.3,256 239,255.5 242.7,256 239,256.6 237.3,256ZM631.9,256 638,255.3 647.6,257 642,257.1 631.9,256ZM232,262 232,261.5 236,261.7 240.1,263 234.2,266 234,267 232,267.2 232,262ZM723,262 723,262 724,261.9 724,262 723,262ZM251.8,266 260,265.8 274,267.8 275.2,268 274.4,269 275.8,271 263,271.8 256,275.1 243,275.8 232,275.5 232,269.8 236,267.8 246,267.2 251.8,266ZM280.6,267 283,266.9 285.1,267 284.6,268 279.2,268 280.6,267ZM714.9,268 724,267.9 724,271.3 716.4,271 714.5,270 714.9,268ZM644.7,272 647,271.9 648.5,272 647,272.1 644.7,272ZM657.5,272 672,271.6 678,272.9 687.3,273 686.9,274 691.5,275 690.1,276 683.8,276 676,273.5 657.5,272ZM608.1,273 615.9,273 618.4,274 610,275.5 607.7,275 606.8,274 608.1,273ZM268.9,275 276,274.2 279.9,275 274,276.1 268.9,275ZM650,277 655,276.6 670.2,278 662.6,279 663,280 668.5,281 667,282 658,282.2 650.6,281 652.3,279 650,277ZM287,278 291,277.4 294,279.1 300.1,280 294,281.6 283.7,280 283.2,279 287,278ZM720.3,278 724,277.4 724,279 722,278.8 720.3,278ZM258.3,280 266,279.4 273.7,280 273.5,281 271,281.1 261,280.8 258.3,280ZM235.7,292 244,291.8 251,293.1 262,292.3 268.3,294 268.8,295 243,294.3 235.5,293 235.7,292ZM645.4,292 661,291.2 665.1,292 661.1,295 655,295.7 646.3,295 640.6,294 639.1,293 645.4,292ZM232,300 232,299.3 236.7,300 232,300.3 232,300ZM715,304 724,303.3 724,306.2 705.1,305 712,304.8 715,304ZM685.7,305 690,304.7 694,305 689,305.5 685.7,305ZM232,310 238.6,310 237.9,311 244.3,313 240,314 232,313.5 232,310ZM719,312 724,311.9 724,313.1 718.1,313 719,312ZM252.9,316 256,316.1 260.1,317 255,317.8 250.3,317 252.9,316ZM715.6,328 724,327.8 724,332.2 703.9,331 710,330.2 715.6,328ZM232,333 232,332.9 234.3,333 232,333.3 232,333ZM232,336 232,335.3 252,336.1 264,335.5 274,336.9 286.7,337 286.2,338 283,339.5 272,340.2 264,343.6 253,342.2 249,343.4 245.4,346 242,346.4 232,344.8 232,342.1 255,341.9 260.1,340 258,339.1 243,337.5 232,337.7 232,336ZM232,347 243,348.6 248.1,351 244.7,353 253.3,354 232,356.1 232,353.2 240.4,352 232,351.1 232,347ZM265.9,351 287,350.1 303.1,352 300,353.2 291,354.1 276,353.1 254.2,353 255,351.9 265.9,351ZM593.9,353 596,352.9 597.4,353 596,353.7 593.9,353ZM620.7,357 625.9,357 627.8,358 618.3,358 620.7,357ZM244.4,359 254,358.2 281,358.6 288.1,360 288.2,361 274,362.5 243.1,360 244.4,359ZM380.7,360 384,359.7 384.9,361 382.8,361 380.7,360ZM675.2,362 678.7,362 683.4,363 679,363.8 673.1,363 675.2,362ZM720.8,362 724,361.9 724,366.5 700.5,364 700.7,363 720.8,362ZM390.3,363 392,362.4 394.7,364 389.6,364 390.3,363ZM558.6,365 572,365 577.8,367 563.6,368 561.4,370 557,370.6 553,370.8 549.9,370 556,368 555.8,366 558.6,365ZM312.5,366 314,366 315,366 314,366 312.5,366ZM501.5,366 509,365.2 517.8,366 511,367.6 502.4,367 501.5,366ZM378.2,367 386,366.5 390.7,368 377,368.2 371,369.4 365.9,369 366.8,368 377,367.6 378.2,367ZM398.5,368 409,368 413.8,369 411,369.6 400,369.1 399,369 398.5,368ZM722,370 723,369.8 724,369.7 724,370.3 722,370ZM421.3,371 428,370.3 440.2,372 427,373.5 424.7,373 421.3,371ZM660,374 662,373.9 669.4,375 662,375.1 660,374ZM635,375 636,375 637.3,375 636,375 635,375ZM603.6,377 610,376.8 614.5,378 612,378.9 608,379.1 599.9,378 603.6,377ZM675.7,380 679,379.4 680.9,380 678,380.6 675.7,380ZM694.1,380 698,380.1 700.6,381 697,382 691.6,381 694.1,380ZM341.5,381 351,380.9 354.8,382 355.2,383 346,383.2 341.5,381ZM530.9,381 538,380.8 548.2,382 535,382.5 530.9,381ZM475.3,384 478.4,384 479.8,385 479.2,386 476.7,386 474.9,385 475.3,384ZM232,386 233,385.5 243,386.8 259.7,387 232,389.1 232,386ZM240.6,391 246,390.7 250.7,392 240.1,392 240.6,391ZM528,392 531,391.6 533.5,392 531,392.4 528,392ZM261.7,393 268,392.8 271.9,394 265,394.7 259.4,394 261.7,393ZM329.7,397 336,396.8 341.3,397 340.5,398 325.6,398 329.7,397ZM347.8,398 350,397.7 353.9,398 352,398.2 347.8,398ZM544.8,400 551,399.7 563.8,401 560.2,402 549,402.9 540,402.2 535.9,401 544.8,400ZM232,401 251,402.5 258,402.3 260.3,403 252,403.3 245.5,405 250.1,407 246.1,408 232,408.4 232,405.2 242.1,405 238,404.1 232,404.5 232,401ZM476.5,401 478,400.9 479,401 478,401.1 476.5,401ZM356.5,404 363,403.4 366.9,404 364,405.1 356,405.8 350.4,405 356.5,404ZM377.9,404 382,403.2 390,404 411.2,404 394,405.2 377.9,404ZM713.7,404 716,403.5 717.7,404 716,404.1 713.7,404ZM294,405 298,404.7 300.2,405 297,405.1 294,405ZM480.8,406 484,406 485.5,407 479.4,407 480.8,406ZM487.8,406 493,405.8 496.3,406 493,406.6 487.8,406ZM572.2,407 579,406.4 604,407.8 605.9,408 607.2,410 609.7,411 625.4,412 624,413.4 618,413.9 600,412.8 586,411.1 558,410.1 555.6,409 556.7,408 559,407.6 572.2,407ZM321.8,408 324,407.8 325.3,408 324,408.1 321.8,408ZM576.4,418 581,417.4 593,418 574,419.8 567.3,419 576.4,418ZM709.1,419 715.9,419 716.9,420 706.7,420 709.1,419ZM467.4,420 472,419.3 473.4,420 471,420.3 467.4,420ZM361.7,422 367,422 374.1,423 366,425 358.4,424 358.4,423 361.7,422ZM275.1,423 287,422.2 291,422.7 293.6,424 290.7,425 281,425.9 261,426.3 256,425 258,423.9 275.1,423ZM523.1,424 525,423.9 526.4,424 525,424 523.1,424ZM477.8,431 482.3,431 489.7,433 488.1,434 483.4,434 478.3,432 477.8,431ZM684,434 687,433.8 688.6,434 686,434.4 684,434ZM346.6,435 351,434.5 354.7,435 350,435.9 346.6,435ZM524.1,438 530,437.8 531.1,438 531.3,439 523.4,439 524.1,438ZM480.9,440 483,439.9 484,440 483,440.3 480.9,440ZM474.7,444 481,443.8 483,445 477.2,445 474.7,444ZM505.8,445 511,445.1 520.4,447 517,447.7 507,447.6 501.8,447 499.5,446 505.8,445ZM283.5,449 292,449 293.3,450 292.8,451 291,451.2 280.6,450 283.5,449Z"/>
<path fill="#0089ff" d="M461.8,92 462,92 498.8,92 478,93.1 467,92.9 461.8,92ZM634.9,92 635,92 669.8,92 660,92.1 645,94.3 634.9,92ZM604.8,103 606,103 607.8,103 606,103.1 604.8,103ZM613.9,113 622,112.1 627.7,113 629.3,114 627,115.4 623,115.7 615,114.3 613.9,113ZM473.2,116 498,116.8 504.8,119 492,120 476,119.6 469.6,119 466,118 465.8,117 473.2,116ZM645.9,117 649,117.1 657.7,118 645.3,118 645.9,117ZM407.3,118 414,117.8 417.1,119 408.4,119 407.3,118ZM525.8,121 527,120.6 529,121 527,121.1 525.8,121ZM720.1,132 724,131.6 724,134.5 717.7,133 720.1,132ZM513.1,133 521,133.4 524.7,134 522,135.2 515,135.2 512,134.1 513.1,133ZM418.6,134 422,133.4 424.3,134 421,134.3 418.6,134ZM681.1,137 683,136.9 684.8,137 684,137.4 681.1,137ZM685.8,138 686,138 686.3,138 686,138 685.8,138ZM710.8,141 714,140.1 717.2,141 714,141.9 710.8,141ZM696.8,144 707,143.3 710.5,144 702,145.2 695.7,145 696.8,144ZM375.3,146 380,145.3 383.5,146 373.3,147 375.3,146ZM321.3,151 329.7,151 344.4,154 332,155.2 318.6,155 320.6,153 320.3,152 321.3,151ZM681.8,153 688.3,154 680,155 675.1,154 681.8,153ZM475,154 480,153.5 483.2,154 482.3,156 481,156.2 474.8,156 471.3,155 475,154ZM398.9,155 403.8,155 404.1,156 402.7,156 398.9,155ZM287.7,166 291,165.6 296.3,166 292,166.6 287.7,166ZM647.7,168 656,167.6 658.4,168 659.2,169 650.6,169 647.7,168ZM232,178 232,177.4 233,177.4 254.2,180 254.1,181 246,182.7 240.9,185 232,185.4 232,178ZM539.7,178 545.7,178 550.7,179 542,179.2 540.5,179 539.7,178ZM468.9,181 477.1,181 479.4,182 479.2,183 480.8,184 491,187.6 499,187.1 503,188.1 534,189.5 561,191.9 571,190.2 584.5,193 585.9,194 586,196 587,196.2 606,196.6 619,199 620.3,200 613.5,202 615.2,205 624.2,207 616.6,209 621.2,211 621.4,212 615.3,215 616,216 619.9,217 595,221.2 582,221.4 580.8,222 595,224.3 596.6,225 596.5,226 592,227.3 579,227.1 574.4,228 578.4,231 576.3,234 577.3,235 584,237.1 605,236.2 605.7,236 605.6,235 603,234 607,233.1 616,234.2 620.4,236 600,239.7 587.1,241 584.8,242 586,243 600.9,244 597.5,246 601,246.5 604,246.5 607.1,245 612,244.6 619.5,245 622.5,246 619,246.9 607,247.4 598,249.5 585,249 573,247.2 562.7,248 557.3,250 557.8,251 567.4,255 565.8,256 560,256.6 551,256.2 547.4,257 548.7,258 551,258.3 588,260.9 587.2,262 598,264.8 597.7,267 588,267.3 581.1,269 581.3,270 584.8,271 586.2,272 586,273.1 589.2,275 588.6,277 585,279 586.4,281 593.1,282 601,284.6 612,284.1 635.3,287 624,289 597,287.7 586,288.3 577.7,290 589.7,291 588.7,292 564,294.9 553.8,294 558,296.5 561,297.2 583,298.7 593,298.4 599.9,299 599.6,300 594,301.4 582,301.9 578.5,303 590,303.1 594.4,304 593,305 583.2,306 585.6,307 604,308.8 622,308.7 625.5,310 634,310.8 669,308.6 682.9,309 689.1,310 684,311.3 671.9,311 668,312.4 660.3,313 659.7,314 694,315.1 711.3,317 712.4,318 712,319.2 709,320.3 699,320.5 690,319.4 676.4,320 672.8,322 667.8,323 667.1,324 671,325.9 683,326 686.4,327 669,329.1 661.6,332 663,333 668,334 650.5,335 655,336.9 658,337.2 671,335.6 681,336.2 685,337.6 685.2,340 688,341 706,342.9 709.4,344 711.5,346 710,346.9 706,347.4 693,345.2 672,346.2 646.3,342 647.6,340 638,339.4 624.3,341 628.6,343 627,343.4 612,344.8 600,343.8 592,345 588.2,347 583,347.7 546,348.7 529.2,351 519.9,354 517,355.7 505,357.7 492,358.4 479,362.5 471,360.3 456,359 452,357 426,353.7 392,356.6 374,354.4 355.2,354 354.3,353 355.6,352 354.8,351 342.4,349 350,344.9 333.8,342 337,339 337,338 326,337 313,337.5 298,335.4 292.3,333 296,331.3 304.4,330 286,328.9 260,331.6 255,331.4 249.7,330 249.1,329 252,328.4 270,326.5 284.7,326 289.4,323 287,321 290,319.8 302,318.7 313.3,319 312.7,318 294,316.7 290.3,315 293.1,314 336,313.5 347,310.3 355.5,310 328,309.4 309.1,308 321,307.8 333,306.5 359,308.3 366.2,307 355.1,304 348.3,303 349.7,302 357,301.5 365,301.6 378,304 389.2,303 387.8,302 377,301.6 370,299.9 351,298.7 342.4,299 335,301.3 322,301.5 319.5,301 321.8,299 315.1,297 311.9,295 287.1,291 291,288.9 299,287.9 309,287.5 336,289.4 359,286.8 360.6,287 360.5,288 357.4,289 356.5,290 360,291 359.5,292 363,292.8 371,293.2 373.3,292 368.2,291 367.3,290 370,289.8 386,292.9 390.6,290 389.7,289 383,287.4 373,286.9 370.9,284 370.9,282 369.9,281 341,281.7 339,280.9 337.4,279 337.4,275 328,274 328.1,273 347,273.2 351,270.7 360.3,269 358,268 347,267.3 340.1,266 359,265 370,266.5 373.1,266 373,265 377.1,264 399.2,263 402.2,262 401.8,261 387.8,259 388.7,258 392,257 417,256.5 420.9,256 422.2,255 410,250.5 390,247.4 376,243.9 354,243.7 340,245.1 331,244.3 322,244.7 320.9,244 333,243.6 343,239.7 356.1,238 349,237.6 337.6,235 338.5,234 357,233.4 361.9,234 360.5,235 363,235.9 372,235.3 372.7,235 369,232 369.9,230 373.3,228 374.8,226 373.5,225 374,224 373.2,223 367,221.4 351.6,221 355.7,220 352,219.4 341,220.1 328,218.9 320,221.3 314,221.4 306,219 313.1,218 303,217.1 300.9,216 309,214.5 321,214.5 328,213.7 332.3,215 332.3,217 333,217.2 345,217.3 347.5,216 347.6,215 346.4,214 337.6,211 326.6,210 324.5,209 333.5,207 340.5,204 336.7,202 345,198.6 358.1,197 365.9,194 385.8,190 391,189.5 404,190.4 412.6,189 410,187.4 402,184.9 408,184.7 412,186.5 423,186.5 431,188.2 461.5,188 464.9,187 456.7,185 462,182 468.9,181ZM632,314 629.2,315 641,315.6 646.4,314 643,313.2 632,314ZM378,346.7 377.2,347 380,348.4 383.3,348 382,346.8 378,346.7ZM346,290 342.2,292 345,292.6 352.4,291 346,290ZM359,275.9 358.2,276 367.1,276 363,275.8 359,275.9ZM316,217 315.4,218 321.5,218 321.9,217 316,217ZM281.3,182 293,181.1 299.1,182 299.5,183 287,183.6 280.9,183 281.3,182ZM509,186 515.5,186 517.2,187 511,187.7 508.2,187 509,186ZM722.4,194 723,193.6 724,193.2 724,194.1 722.4,194ZM232,199 232,198.9 235.9,199 232,199.2 232,199ZM232,203 232,202.5 236.2,203 232,203.7 232,203ZM642,208 655,208.2 658.3,209 647,210.3 639.7,209 642,208ZM232,215 235.8,215 236.6,216 235.9,217 232,217.7 232,215ZM716.6,216 724,215.3 724,218.4 713,218 713.7,217 716.6,216ZM287.4,217 290.6,217 291.5,218 288,218.2 287.4,217ZM254.9,219 268,218.6 275.7,221 264,222.1 251,220 254.9,219ZM336.5,226 363,225.7 368.7,227 348,228 329.7,227 336.5,226ZM238.4,230 253,229.4 258.3,230 246,230.8 238.4,230ZM652.8,230 666,231 667.6,232 666,232.4 650.7,231 652.8,230ZM580.6,233 584,232.4 589.4,233 587,233.4 580.6,233ZM633.8,235 649,234.9 656.3,236 661.4,238 657,239 647,238.6 637,239.4 634.1,239 628.3,236 633.8,235ZM688.3,235 700,234.1 706.2,235 691,236.1 688.6,236 688.3,235ZM299.5,236 301,235.9 302.1,236 301,236.1 299.5,236ZM326.8,237 327,237 327.1,237 327,237 326.8,237ZM718.8,247 724,246.5 724,248.5 719.2,248 718.8,247ZM355.5,250 386,249.5 389.3,250 390.1,251 378,251 356,254 342,254.7 311.7,253 355.5,250ZM672.1,250 678,249.6 688,252.4 696,251.7 706,252.1 716.6,256 704,257.3 676,255.3 671.1,257 663.9,257 664.1,256 671.6,254 669.6,252 672.1,250ZM232,253 232,252.7 239.7,253 239.3,254 232,254.5 232,253ZM240.3,253 246,252.5 259.2,253 247,254.2 240.3,253ZM571.3,256 573,255.4 581.6,256 577,256.5 571.3,256ZM717.4,257 724,256.9 724,258.3 719.5,258 717.4,257ZM327.5,260 337,260 341.3,261 342.5,262 331.6,265 333,265.9 342,267.5 342.8,268 342.5,269 332.7,270 328,271.5 321,271.3 315,268.4 303.6,267 303.1,266 320,263.6 327.5,260ZM232,262 235,262 238,263 237,264.1 232,265.2 232,262ZM250.5,267 255,266.2 260,266.3 270.7,268 272,269 271,271 266.9,271 250.3,268 250.5,267ZM240.5,268 244.9,268 248,269.2 259.8,271 256.2,273 256.1,274 252.5,275 232,275.2 232,270.3 236.4,270 240.5,268ZM719.6,270 720,269.9 722,270 721,270.1 719.6,270ZM298.1,271 303,270.6 317,272.4 318.8,273 319,274 304,276.2 296,276.4 292.9,276 291,274.6 285.8,273 289,272 298.1,271ZM661.7,272 665,271.8 669.9,272 665,272.2 661.7,272ZM653.3,280 657,279.4 666,281 663.6,282 660.6,282 652.9,281 653.3,280ZM313.1,284 328,283.7 332.5,284 316,284.1 313.1,284ZM654.2,292 661,292 661.6,293 660,294.4 655,295.3 643.4,294 645,292.9 654.2,292ZM256.8,294 261,293.2 266.1,294 262,294.9 256.8,294ZM279.1,299 283,299 286.1,300 284,300.8 281,300.7 278.3,300 279.1,299ZM292.2,302 311,301.7 315.6,302 301,303.6 292,303 292.2,302ZM721.7,304 724,304 724,305.6 717.6,305 721.7,304ZM272.1,312 275,311.3 281,311.5 284.3,312 284.7,313 282,314.1 277,314.2 271.8,313 272.1,312ZM237.4,313 238,313 238.7,313 238,313 237.4,313ZM279.4,318 287.4,318 279.6,321 280.7,323 279,323.4 270,323.7 260.8,322 279.4,318ZM693.8,323 703,322.7 711.4,324 708,325 698,325.2 690.2,325 688.7,324 693.8,323ZM715.2,323 717,322.9 719.4,323 717,323.2 715.2,323ZM718,329 724,328.6 724,329.7 720,329.5 718,329ZM696.2,336 702,335.8 714.6,337 717.9,338 715,338.9 707,338.8 697.6,338 694.3,337 696.2,336ZM232,337 232,336.7 234.4,337 232,337.1 232,337ZM255.8,337 263,336.4 268.3,337 264,338.1 252.7,338 255.8,337ZM277.9,338 280,338.3 280.6,339 275.4,339 277.9,338ZM716.4,340 717,339.8 718.2,340 717,340 716.4,340ZM240,344 243.4,344 244.3,345 241.1,345 240,344ZM633,344 635,343.9 636.4,344 635,344.6 633,344ZM648.4,346 652,345.9 655.9,346 651,346.4 648.4,346ZM610.5,348 633,347.3 637.4,348 637.9,349 630,350.2 616,350 612,349.3 610.5,348ZM232,349 232,348.1 234,348.2 243.4,350 242,350.9 232,350.7 232,349ZM269.7,351 290,350.7 300.2,352 289,353.7 277,352.3 264.1,352 269.7,351ZM232,354 237,353.8 240,355 232,355.6 232,354ZM335.1,354 340,353.3 345.2,354 339,354.3 335.1,354ZM518.6,356 520,355.9 523.7,356 521,356.5 518.6,356ZM530.9,356 552,355.1 557.3,356 556.8,357 552,358.4 533,359.2 530.3,360 538.3,362 535,362.9 524,362.7 521.5,362 517.8,359 529,358.6 530.1,358 525.5,357 530.9,356ZM246.7,359 255,358.5 277,359.2 282.9,360 283.6,361 274,361.7 245.4,360 246.7,359ZM676.9,363 678,363 678.4,363 678,363 676.9,363ZM712.1,363 724,362.5 724,365.8 704.9,364 712.1,363ZM505.1,366 509,365.8 512.9,366 509,366.7 505.1,366ZM559.2,366 564,365.1 571.9,366 570,366.8 559.2,366ZM473.7,368 480,367.5 487.9,371 488.1,372 482,374.6 476,374.6 472.1,373 469.2,370 473.7,368ZM427.1,372 429,371.1 435.1,372 430,372.5 427.1,372ZM476.1,378 480,377.1 482.9,378 483.7,379 479,379.5 476.6,379 476.1,378ZM603.3,378 608,377.3 612.3,378 608,378.6 603.3,378ZM345,381 347.6,381 351.8,382 348,382.8 344.8,382 345,381ZM232,387 232,386.1 235,386.3 239.1,387 239.5,388 232,388.7 232,387ZM538.3,401 548,400.3 554.8,401 552.6,402 547,402.4 540.7,402 538.3,401ZM232,402 232,401.3 238,401.5 245.2,403 232,403.7 232,402ZM354.1,405 356,404.9 357.3,405 355,405.1 354.1,405ZM232,406 244,406.2 247.6,407 241.7,408 232,408 232,406ZM560.5,408 578,407.2 601,407.9 604.4,409 604.2,410 607,411.7 620.9,412 621.6,413 614,413.2 610,412.2 586,410.6 572,410.6 557.9,409 560.5,408ZM277.6,423 286,422.7 290,424 282,425.4 259.3,425 261.9,424 277.6,423ZM359.9,423 364,422.3 371,423 369.5,424 365,424.5 360.3,424 359.9,423ZM503.3,446 510,445.7 514.9,447 507,447 503.3,446ZM286.6,450 288,449.9 290,450 289,450.1 286.6,450Z"/>
<path fill="#009bff" d="M463.9,92 464,92 494.2,92 482,92.9 463.9,92ZM638.4,92 639,92 655,92 646,93.6 638.4,92ZM616.6,113 623,112.7 626.5,114 620,114.6 616.8,114 616.6,113ZM471.9,117 497,117.2 501.2,118 502.2,119 489,119.7 473,119 469.2,118 471.9,117ZM720.3,133 722,132.5 724,132.2 724,133.7 720.3,133ZM516.4,134 518,133.9 521,134 519,134.3 516.4,134ZM322.7,152 326,151.4 331,151.8 340.7,154 327,154.5 323.8,154 322.7,152ZM677.9,154 682,153.6 685.2,154 681,154.4 677.9,154ZM474.4,155 477,154.8 479.1,155 477,155.2 474.4,155ZM232,179 232,178.4 234,178.5 251.7,180 251.2,181 250,181.2 238,181.8 233.4,183 238.4,184 232,184.1 232,179ZM285.5,182 291,181.5 296.6,182 296.5,183 295,183.2 284.2,183 285.5,182ZM465.4,182 471,181.5 475.4,182 487,188.1 562,192.5 572,190.8 581.2,193 582.3,194 580.6,196 586,197.7 607,197.4 616.3,199 613,200.2 606,200.6 589,198.4 588.3,199 592,201 610,202.7 614,205.7 617.9,207 601,207.7 599.1,208 599.4,209 614,209.8 618.8,211 619.4,212 615.4,214 612,214.7 592,214.3 589,214.9 614,217 613.1,218 597,220.3 578.4,221 578.5,222 581.3,223 594,224.9 594,226 589,226.9 574.2,227 571.1,228 572.1,230 570.9,232 575,235.3 585,238.1 607,236.7 608.3,236 609,234.2 615,234.7 617.1,236 606,237.3 599,239.3 586,240.5 578.7,243 590,244.1 592.3,245 586,247.3 580,247.3 572,245.9 559.3,248 554.7,250 560.1,253 562.5,255 562,255.4 560,256 547,256 544.7,257 545.1,258 548,258.6 568,259.6 579.6,261 595.9,265 595,266.2 584,267.5 579.4,269 579.3,270 581.9,271 583.1,272 582.3,273 585.2,275 585.3,276 582.2,278 583,281 586,282.3 600,285.4 612,284.5 627,285.9 631.1,287 627,288.2 617,288.5 606,288.1 595,286.7 581,286.8 578.7,287 577,289 572.2,290 574,291 580.4,292 577.8,293 565,294.2 555,293.1 550.6,294 557,297.4 579,298.7 581,299 582,300 581.6,301 574,303.3 568.7,304 569.4,305 601,309.3 617,309.5 628,311.4 638.4,312 626,314 623.6,315 628,316.5 643,316.4 653,314.7 675,315 686,316.3 697.7,316 708,317.5 709.4,318 709.3,319 700,319.8 691,318.9 677,318.9 669,319.5 667.6,320 668.7,321 667,321.4 660,321.1 657.7,322 663,322.5 665.2,325 654.4,328 657.4,330 649,332.6 631.8,335 628.6,337 628.7,338 632.5,339 617,341 616.9,342 613,342.8 603,342.7 592.2,344 587.1,345 587.4,346 582,347.4 564,347.4 533,349.1 525,350.5 521,352.7 507,356.6 490,358 480,360.8 459.3,359 456.1,358 455,356.8 441.9,355 441.7,353 441,352.8 431,352 425.4,352 413,354.6 401,355.4 390,354.5 383,355 373,354 359.4,354 356.7,353 362,350.1 372,351.3 385,350.3 394,351.7 406.3,349 390,348.6 387,347.5 385,345.4 379,344.8 371,345.8 370.3,346 370.9,348 363,349.9 349,349.2 346.1,348 353.8,345 353.4,344 337.8,341 342.6,338 328.7,336 327.2,335 324,334.5 319.7,335 322.8,336 314,336.7 299,334.6 295.3,333 298,331.8 307,331.1 314.9,329 296,328.3 291,326.6 290,325 295,323.9 311,325.9 319.1,325 297,323.4 290.9,321 302,319.7 317,319.9 324.9,318 308,316.4 298,316.3 293.4,315 294,314.8 298,314.2 307,314.8 338,314.1 347,311.6 359.8,311 363.7,310 362.4,309 368.8,307 367.9,306 352.3,303 355.4,302 365,302.2 373,304.5 380,305.5 389.7,305 396.1,303 393.5,302 379,300.9 370,299 352,298.4 342,298.6 331.7,301 324.6,301 323.2,300 324,298.8 317.1,297 314,295 303,292.6 290.3,291 290.4,290 296,288.6 308,288.1 340.2,290 341.6,291 338.5,293 341,293.6 354,292.3 369,293.8 378,293 385,293.8 389,293.4 394.6,290 390.2,288 377,285.4 375.1,284 374,280.8 363,279.9 343,280.6 340.8,280 338.9,277 339.1,276 343,274.1 355,276.4 370.2,277 372,276 353,274.6 351,273.6 350.7,272 354,270.9 368.9,270 373.6,269 377,267.3 379.5,267 379.3,266 377.5,265 380,264.5 390,263.5 400,263.7 406.1,262 404.8,261 390.1,259 390.2,258 392,257.5 419,256.8 423.5,256 424.3,255 412,250.3 393,247.1 387.3,245 378,243.6 354,243.4 341,244.5 336.3,244 344,240.3 361.2,238 362,236.9 375.1,236 375.8,235 371.9,231 381.6,225 379.8,223 371.7,220 352,217.5 351.3,217 353.2,215 352.6,214 344.6,212 341.5,210 340.7,207 344.6,204 340.2,202 343,200.7 359,198 367.9,195 381,192 409,190.5 420,188.2 442,188.9 467,188 468.7,187 460.9,185 460.7,184 461.9,183 465.4,182ZM409,349.9 414,350.6 416.3,350 411,349.5 409,349.9ZM332.5,209 336,208.9 338.6,209 336,209.3 332.5,209ZM644.8,209 646,209 647.7,209 646,209.1 644.8,209ZM311.4,215 314,215 315.9,216 305.7,216 311.4,215ZM719.8,216 724,215.7 724,218.1 717.9,218 717.4,217 719.8,216ZM258.9,219 267.4,219 270.9,220 271.7,221 264,221.6 255.5,220 258.9,219ZM313.9,219 318.3,219 320.6,220 316,220.7 313.7,220 313.9,219ZM336.9,219 339,218.8 341.3,219 339,219.1 336.9,219ZM335.6,227 341,226.4 354.2,227 343,227.5 335.6,227ZM656.3,231 658,230.9 660.5,231 659,231.1 656.3,231ZM351.3,234 357.6,234 356.6,235 354,235.6 344.3,235 351.3,234ZM695.9,235 700,234.7 703.3,235 700,235.2 695.9,235ZM632.1,236 647,235.2 653.9,236 658.9,238 637,238.3 632.1,236ZM589.8,248 596,247.4 600.3,248 596,248.6 589.8,248ZM723,248 724,247.5 724,248 723,248ZM361.1,250 371,250 373.2,251 355,253.4 341,254.2 333,254.1 325.2,253 361.1,250ZM671.7,251 678,250.3 688,253.3 696,252.2 703,252.5 708.9,254 711,256 703,257 682,255.1 673,253.3 671,252 671.7,251ZM232,253 232,253 232.1,253 232,253.1 232,253ZM328,261 336,260.8 339.1,262 328.5,265 326.9,267 329.9,268 329.5,269 326,269.9 321,269.8 316.9,268 308.4,267 306.5,266 323,263.7 326,262.7 328,261ZM232,263 232,262.3 236,263 235.3,264 232,264.5 232,263ZM348.1,266 360,265.6 363,266 363.4,267 353.7,267 348.1,266ZM253.6,267 260.7,267 268.7,269 262.5,269 253.6,267ZM240.2,270 243,269.4 254.8,271 255.2,272 252.6,273 252.4,274 248.6,275 232,274.9 232,270.7 240.2,270ZM296.3,272 304,271.4 311.6,273 313.2,274 305,275.6 298,275.9 295,275.2 290.8,273 296.3,272ZM655.8,281 657,280.6 661.5,281 659,281.2 655.8,281ZM648.5,293 655,292.6 659,293 658.5,294 654,294.7 647.2,294 648.5,293ZM587.4,299 596,298.7 598,299 598.1,300 590,301.2 586.7,301 585.1,300 587.4,299ZM298,303 300,302.6 303.5,303 301,303.1 298,303ZM331.4,307 347,307.6 351.2,308 350.4,309 346,309.2 329,309 325,308 331.4,307ZM655.3,310 670,309.3 684.9,310 681,310.7 671,310.2 665,311.5 652,312.5 643.4,311 655.3,310ZM274.5,313 278,312.2 282.1,313 279,313.5 274.5,313ZM265.2,322 270,321.6 273.2,322 270,322.4 265.2,322ZM271.4,328 275,327.4 278.5,328 275,328.5 271.4,328ZM252.4,329 261,328.7 268.2,330 263.6,331 257,331.1 252.4,330 252.4,329ZM642.9,337 648,336.6 659,338.2 672,336.6 678,336.9 682.6,338 682.9,339 681.8,340 683.1,341 692,342.5 702.2,343 708.5,345 705,346 691,343.6 683,343.7 685,345 682,345.1 662,343.6 650.3,342 649.9,341 652.5,340 652,339.3 641.9,338 642.9,337ZM681,342.9 680.7,343 682.1,343 682,343 681,342.9ZM697.6,337 701,336.6 710.1,338 704.3,338 697.6,337ZM232,349 236.5,349 239.8,350 232,350.3 232,349ZM615.1,349 630,348 633.7,349 627,349.8 615.1,349ZM282.6,352 289,351.2 296.4,352 289,353.2 284.7,353 282.6,352ZM232,355 232,354.6 235.1,355 232,355.1 232,355ZM537,356 553,355.9 554.2,356 554.5,357 551,358.1 541,358.5 532.1,357 537,356ZM250.3,359 258.2,359 263.2,360 248.9,360 250.3,359ZM271.5,360 274,359.9 276.4,360 274,360.4 271.5,360ZM525.9,362 529,361.6 534.6,362 531,362.3 525.9,362ZM475.3,369 480,369.4 485.6,371 485.8,372 481,373.8 476,373.4 474.6,373 472.2,370 475.3,369ZM232,387 235.5,387 236.1,388 232,388.3 232,387ZM542,401 546,400.9 549.2,401 548,402 546,402.1 542,401ZM232,402 232,401.6 238.1,402 236,403 232,403.3 232,402ZM232,407 232,406.3 243.7,407 232,407.5 232,407ZM561,409 581,408 597,408.1 601.7,409 600,410.7 598,410.9 586,410 572,410.3 561,409ZM281.3,423 287.3,424 281,425 273.8,424 281.3,423ZM362.1,423 365,422.8 367.6,423 365,424 362.1,423Z"/>
<path fill="#00adff" d="M466.5,92 467,92 490.7,92 482,92.6 466.5,92ZM641.9,92 642,92 652.4,92 647,93 641.9,92ZM475.6,118 477,118 478.9,118 477,118 475.6,118ZM482.6,118 496,117.6 499.1,118 499.2,119 487,119.3 482.3,119 482.6,118ZM329.3,153 334,152.9 336.8,154 330,154 329.3,153ZM232,179 234,179 238.2,180 236.5,181 232,181.6 232,179ZM289.7,182 293.2,182 293,183 288.2,183 289.7,182ZM465.7,183 471,182.7 481.5,186 479,187.8 474,187.6 466.4,185 465.2,184 465.7,183ZM458.9,189 479,188.1 516,189.8 574,193.9 574.8,194 572.4,195 581.1,199 590.5,202 606,203.1 609.9,204 610.6,205 610,206.2 598,207.2 595.5,208 595,209 596,210.4 598,211.1 605,211.4 613,210.7 617,212 613,213.8 609,214.3 589,212.7 585,213.6 582.8,215 586.2,216 595,216.3 607.3,218 598,219.7 576,220.8 575.5,221 576.7,222 579.3,223 591.7,225 591.8,226 576,226.4 567.8,228 567.6,232 568.5,233 573,235.7 579.5,238 569.9,240 577.7,241 577.8,242 572.9,243 576,244.5 586,245 581,245.5 572,244.9 558,247.4 552.2,250 558.1,253 559.4,255 543.4,256 541,258.4 537.4,259 569,260 575.1,261 576.1,262 591,264 593.8,265 592.3,266 579.4,268 577.4,270 578.9,271 579.1,272 577.9,273 582.2,275 581.8,276 579.4,277 580.5,281 584.1,283 594.5,285 591.9,286 581.6,286 572.8,287 571.9,289 569.3,290 570,291.1 575,292 572.4,293 554,292.7 548.2,294 552.5,296 552.2,297 550.1,298 576,298.8 578.1,299 579.1,300 577.6,301 562.9,304 568,306 591.5,309 592,309.8 614,310 625.1,312 625.3,313 618.2,314 618.6,315 626.2,318 633.9,319 640.4,321 639.3,322 652.2,324 650,324.8 642,324.8 640.4,326 642.9,327 632,327 630.8,328 651.6,330 648,331.5 628,334.7 623.8,339 601.3,340 599.8,342 584,344.5 582.6,345 584.2,346 581.3,347 570.4,347 564,346 562.7,347 555,347.7 539,347 525,347.9 520.1,350 518,352 506.2,356 490,357.5 483,359.5 478,359.8 460,358.3 457,356.4 447,355 445,352.6 440,351.3 422,351.2 419,349.7 407,348 392,348 388.6,347 389,345.8 391.3,345 389,344.5 371,343.8 362,343 356,341.5 345,340.8 343.6,340 349.6,338 337.1,336 333.8,334 325.4,332 326.4,331 334.3,328 332.2,327 320,323.6 299,322.3 295.8,321 322,320.3 328.4,318 326.6,317 312.1,316 313.1,315 315,314.9 339,314.9 348,312.1 363,311.5 376,308.3 378,306.7 395.9,305 402,302.2 406.7,301 405.4,300 402,299.7 395,301.4 380,300.2 375.2,299 375.1,298 376.1,297 373,296.6 363,298.3 342,298.2 328,300.2 326.8,300 327.7,299 326,298 319.6,297 317.2,295 312.1,294 308.2,292 295,291.2 292.7,290 296,289.1 311,288.6 337,290.2 339.6,291 335.5,293 335.8,294 339,294.2 355,293.4 373,295 380,294.1 386.3,295 385.8,296 388,296.5 404,297 410.7,296 397,295.7 391.6,294 395,292.3 400.6,291 394.2,288 382.2,285 381,284 381,283 376.8,280 346,279.4 344.1,279 341.7,277 341.9,276 345,275.6 352,277.1 373,277.6 374.6,277 374.7,276 372.6,275 356,274.1 353,273.3 352.4,272 373.6,270 386.5,267 385.6,266 381.6,265 390,264 403,264 412.7,262 414,261 393,259.1 392,257.9 422.7,257 426,256.2 426.6,255 425.6,254 419,252.5 415,250.3 404,247.8 396.2,247 387.3,244 374,242.9 354,243.1 340.2,244 342,242 346,240.5 380,236.4 381,236 377,234 376.2,232 374.7,231 375.3,230 387.4,225 385.1,222 381.4,221 356.2,217 357.7,215 357,214 348,211 345.2,207 347.8,204 347.3,203 343.7,202 345.5,201 363,198 382,192.9 408.4,191 422,189.2 458.9,189ZM530,251.9 530.7,253 533,253.3 541.7,253 537,251.5 530,251.9ZM582,311 589,312 593.1,311 591,310 582,311ZM637,320.9 635,321.4 630.2,322 636.4,322 637.6,321 637,320.9ZM323,293.9 321.1,295 325,295.2 333.2,294 323,293.9ZM431,349.9 436,350.8 438.3,350 435,349.2 431,349.9ZM602.8,198 609.1,198 613.5,199 608,199.7 601.8,199 602.8,198ZM720.5,217 722,216.5 724,216.3 724,217.5 720.5,217ZM258.4,220 263,219.1 268.9,220 267.6,221 265,221.1 258.4,220ZM643,236 650,235.9 653.4,237 649,237.6 641.1,237 643,236ZM593,238 598,237.7 601.3,238 597,239 589.9,239 593,238ZM360.1,251 366,250.4 370.1,251 365,251.5 360.1,251ZM673.7,251 678.8,251 681,252.5 686.4,254 682,254.3 675,253 672.7,252 673.7,251ZM343.9,252 350,251.9 352.7,252 350,252.3 343.9,252ZM334.7,253 341,252.5 343.1,253 338,253.3 334.7,253ZM695.5,253 701.7,253 707.8,256 703,256.6 689.8,255 690.8,254 695.5,253ZM232,263 232,262.9 233.2,263 232,263.6 232,263ZM318,265 324.9,265 324.8,266 322,266.9 311,266 318,265ZM322.2,268 324,268.1 325.3,269 321.2,269 322.2,268ZM234.8,271 244,270.5 249.5,271 252,272 249.9,274 246,274.9 232,274.4 232,271.1 234.8,271ZM296.3,273 304,272.1 309.9,274 305,275.2 299,275.3 297.3,275 296.3,273ZM608.5,285 624.9,286 628.3,287 624,287.8 612,288 601,287 601.9,286 608.5,285ZM590.2,299 596,299 596.4,300 592,300.5 588.1,300 590.2,299ZM355.9,303 363,302.5 368.6,304 368,304.7 365,304.9 355.9,303ZM329,308 333,307.7 337.3,308 332,308.3 329,308ZM296.9,315 299,314.9 301.2,315 299,315.3 296.9,315ZM650.1,316 670,315.6 676.8,316 676.3,317 674,317.5 665,317.9 655,319.8 644,319.3 641.1,318 650.1,316ZM690.2,317 696,316.6 702.9,318 702.4,319 700,319.1 682.4,318 690.2,317ZM255.9,330 258,329.5 262.3,330 259,330.3 255.9,330ZM311.9,332 313.8,332 313.8,333 309,334.8 301,334.2 298.1,333 302,332.2 311.9,332ZM669.4,338 676,337.6 678.8,338 680.1,339 670,342.7 656,342.3 653.5,342 652.2,341 658,339.2 669.4,338ZM359.3,344 361,343.2 364,343.2 364.7,344 362.8,346 364.8,347 362,348.1 356.9,348 359.9,345 359.3,344ZM699.3,344 703.5,344 705.8,345 700.2,345 699.3,344ZM625.6,349 628,348.9 629.2,349 627,349.1 625.6,349ZM400.5,351 406,350.4 420.1,352 413,354.1 401,354.8 390,353 381,354.2 374,353.4 363,353.8 358.7,353 364,351.6 376,352.3 385,351.7 387.9,352 389,352.9 393,352.8 400.5,351ZM288.4,352 290,352 291.2,352 290,352.1 288.4,352ZM536.5,357 541,356.7 550.1,357 542,357.7 536.5,357ZM476.8,371 481.5,371 482.4,372 479,372.7 477,372 476.8,371ZM574.3,409 578,409 579.8,409 577,409.1 574.3,409ZM587.7,409 594,408.6 598.8,409 595,410.1 587.7,409ZM277.7,424 282,423.7 284.4,424 281,424.3 277.7,424Z"/>
<path fill="#00c0ff" d="M470.3,92 471,92 487.4,92 482,92.3 470.3,92ZM645.8,92 646,92 649.3,92 648,92.1 645.8,92ZM490.8,118 493,117.9 495.4,118 495,119 486.5,119 490.8,118ZM232,180 232,179.9 233.4,180 232,180.3 232,180ZM473.9,185 476,185 478.3,186 474,186 473.9,185ZM420.3,190 481,189.1 516,190.2 554.6,193 561.7,194 589,202.6 605.5,204 607.9,205 605.8,206 595,206.9 590.9,210 581.6,213 579,215 582,216.2 595.8,217 600.8,218 600.4,219 576,220 573.3,221 580,223.8 588.4,225 589.2,226 575,226.1 564.2,228 564.3,231 565.7,233 571,236.5 575,238 565.5,239 563.8,240 568,242.2 569.7,244 557,246.3 549.9,250 555.8,253 556.6,254 556,254.4 526,256 527.4,257 534,257.6 535,258 531.8,259 535.9,260 545,260.8 550,259.9 561.6,260 571.8,261 558.7,262 559.1,263 561.3,264 577,262.7 591.7,265 577.2,268 575.4,270 575.6,271 574.2,273 579,275 576.1,277 577.9,279 578.2,281 582,283.2 588.2,285 569.2,287 568.6,289 566.7,290 567.5,292 548.3,293 545.3,294 550.2,296 545,298 553.4,299 575,299.2 576.7,300 568.7,301 559.4,304 566,306.4 585.8,309 576.5,311 580.1,312 598,313.6 600.5,313 599.1,311 610,310.4 617,310.8 621.4,312 613.6,314 623,318.4 631.7,320 618,322.3 615.1,324 616.8,326 620.9,328 620.1,329 620.4,330 617.8,332 617.1,334 622.9,336 616.4,338 597.4,339 595.1,340 595.8,341 594.9,342 590,342.9 573,343.6 557.6,345 554.2,346 557.6,347 540,346.3 525,347.2 516.2,350 510.4,354 505,355.6 489,357 478,359.1 463,358 463,357 459.7,356 451.3,355 447.1,352 439,348.8 424,349.4 406,347.3 392,347.3 390.9,347 392,345.9 400,345 396.8,344 375,342.9 353.7,340 354.7,338 352,336.5 342,335.1 337.6,333 335.5,330 339.7,328 338.8,327 333,324.6 326.7,324 326,323 331,322.8 338,324.1 342,323.3 340.8,322 331,321.3 327.5,320 331.6,318 333.7,316 345,315.2 347.1,313 350,312.6 371.1,313 375.3,312 375.9,310 381.7,307 397,305.6 405,302.7 412.5,301 410.8,300 402,298.3 394,300.6 386.3,300 386.1,299 390,297.6 403,297.9 412,296.8 421.5,297 421,296 410,295 398,294.9 395.8,294 407.4,292 397.6,288 386,285 385.1,283 380.8,280 377,278.5 377.1,276 375.9,275 359.1,274 354.6,273 354.5,272 384,269.6 389.5,267 389.3,266 387.2,265 404,264.5 416.8,262 418.1,261 395.9,259 393.6,258 406,257.3 425,257.6 428.7,257 430,256 428.5,254 420,252 419.9,251 418.1,250 411.7,249 406,247.1 397,246.1 390,243.2 376,242.6 343,243 344,241.9 348,240.7 384.4,237 385.1,236 379.3,233 378,230 391.2,225 391.3,224 389.3,222 385.5,221 360,217 360.1,216 362.2,215 361.3,214 353.8,212 349.8,208 350.9,206 351.2,203 349.3,202 385,193.7 420.3,190ZM530,251 526.6,252 527,253 537,254.2 544.5,253 542,251.6 538,250.8 530,251ZM604.2,213 611,212.5 612.3,213 609,213.4 604.2,213ZM261.5,220 264,219.8 266.4,220 264,220.3 261.5,220ZM696.3,254 698.7,254 704.9,256 700.2,256 696.6,255 696.3,254ZM318.3,266 319,266 319.8,266 319,266 318.3,266ZM232,272 242,271 249.1,272 247.8,274 243,274.6 232,273.8 232,272ZM299.4,273 304,272.8 307.3,274 301,274.8 298.8,274 299.4,273ZM351.8,278 356,277.9 360.8,278 355,278.6 351.8,278ZM605.6,286 612,285.5 621.3,286 625.2,287 611,287.5 603.8,287 605.6,286ZM295.6,290 312,289 337.6,291 334,292.5 317,294.2 314,293.5 311,291.7 298.1,291 295.6,290ZM330.7,295 352,294.2 366,294.8 367.6,295 367.9,296 357,297.7 334,298.2 325,297 325.5,296 330.7,295ZM591.2,300 593,299.8 594,300 592,300.1 591.2,300ZM361.6,303 362,303 362.2,303 362,303 361.6,303ZM316,316 321,315.5 327.7,316 321,316.3 316,316ZM658.8,317 660,317 660.6,317 660,317 658.8,317ZM314.3,322 316,321.9 318.1,322 316,322.1 314.3,322ZM631.7,324 637.3,324 633,325.4 625,325.9 623.1,325 631.7,324ZM636.3,330 642,329.8 646.2,330 645.4,331 634,333 628.6,333 627.6,332 636.3,330ZM665.3,339 673,339.1 674.4,340 672,341.3 667,342.1 658,341.9 654.3,341 665.3,339ZM573.7,346 577,345.6 580.2,346 577,346.4 573.7,346ZM404.6,351 413.1,352 414.8,353 408,353.9 398.9,353 401,351.7 404.6,351ZM361.2,353 365,352.5 369.7,353 365,353.3 361.2,353Z"/>
<path fill="#00d2ff" d="M446.6,190 469,189.4 493,189.8 517,190.6 549,193 558,194.2 594.9,205 587,210 578.2,213 575.7,215 576.4,216 578,216.3 592,216.9 597,218.1 595,218.9 571.1,220 571.1,221 575,222.7 583.5,225 560.4,228 562,232 566,235 567.1,237 559.9,240 560,241.1 565.1,243 564,244 554,245.7 552.2,248 547.2,250 546.7,251 550.9,252 553.4,254 545.1,255 541.6,255 547.8,253 546,251.3 544.4,251 532,250.1 524.2,252 526.5,254 522.7,256 523.2,257 529,259.7 545,261.5 553,261.2 554.9,262 554.6,263 556,264 564,264.6 577,263.2 589.5,265 575,267.8 571.2,273 575.3,275 575.1,276 573.3,277 573.7,278 575.7,279 576,281 581.4,284 580.8,285 566.6,287 565.4,289 562,291.3 550,292.1 541.1,294 542.6,295 547.5,296 537.8,298 550,299.4 565,299.1 571.6,300 566,300.7 557.4,303 556.2,304 561,306.2 569.8,308 572,309.2 572.1,311 575,312.4 597,314.7 608,314 617.3,317 618.6,318 608.1,324 607.5,325 610.4,327 610.7,329 612.6,331 609.1,333 609.2,334 611.7,336 611.7,337 593,338.9 590.8,340 591.6,341 589,342 575,342.4 547,345.3 523,346.9 513.1,350 509.8,353 504.2,355 488,356.6 478,358.4 474.4,358 473,356.9 454,354.8 451.8,354 449.8,352 440,348.2 424,348.4 404.6,346 405.7,345 399,343.5 376.3,342 359,337.5 352,333.5 343,331.9 341.5,330 342.5,329 352.5,327 352.9,326 348,324.3 343,321.4 331.6,320 336,317.9 341,316.9 357.2,317 357.1,316 353,315.3 351,314 351.7,313 355.2,313 363,314.7 377,313.6 382.3,312 381.2,310 384,308.7 403.4,305 407.5,303 419.4,300 410.1,299 408.9,298 415,297.7 421,299.1 427.6,298 424.3,296 422,295.6 400.6,294 411.7,292 400.8,288 388.9,285 388.3,283 380,277.8 379.5,275 357.3,273 360,272.1 368,271.4 388,271 390.3,270 390.8,268 392.5,267 392.4,265 405,265.1 419,262.3 421.8,261 417,259.8 399.6,259 396.8,258 408,257.6 426,258.4 429.1,258 433.1,256 431.6,254 422.5,252 421.9,250 414,248.7 409,246.8 399,245.2 389,241.2 380,242.3 346.4,242 359,239.6 388,237.3 388.8,237 388.5,236 383.8,233 381.2,230 389,227.9 394.5,225 395,224 393,222 388.8,221 371,217.4 364.5,217 364.9,216 367.5,215 355.9,211 355.2,210 355.7,208 354.2,204 355.8,202 359,201 390,193.7 423,190.3 446.6,190ZM232.8,272 243,271.5 246.4,272 246.8,273 245.5,274 240,274.2 232,273 232.8,272ZM608,287 611,286.5 613.1,287 610,287.1 608,287ZM305.7,290 314,289.6 334.9,291 332,292.1 318,293.1 305.7,290ZM345.1,295 352,294.7 361.2,296 357,297.2 350,297.5 335,297.4 332,297 330.5,296 345.1,295ZM574.9,309 578,308.9 581.4,309 578,309.2 574.9,309ZM605.5,311 614.2,311 616.9,312 607,312.8 604.7,312 605.5,311ZM660.5,340 667,339.7 668.9,340 669.4,341 663,341.5 656.9,341 660.5,340ZM402.9,352 408,351.9 410.2,353 403.5,353 402.9,352Z"/>
<path fill="#00edff" d="M458.7,190 473,189.9 514,190.9 547,193.3 559,195.5 589.8,205 590,206 585.4,209 575.5,213 572.7,215 572.4,216 576,216.9 593.6,218 571,219.2 566.9,220 577.5,225 560,227 557.1,228 560,233 564.1,236 563.6,237 557.9,239 556.5,240 556.2,241 559.2,243 552,245.3 550.8,246 549.9,248 546,249.3 530,249.6 524,250.7 522.1,252 523.6,254 520.5,256 520.9,257 522.4,258 522.9,260 549,262.4 554,264.5 564,265.2 577,263.7 585.9,265 572.8,267 570.9,268 571,269 569.3,271 568.6,274 571.3,275 572.1,276 570.6,277 571,278 573.2,279 574.1,280 573.8,281 574.9,282 578.8,284 576.4,285 566,286.4 564.3,287 562,288.7 555,290.8 537.4,294 536.2,295 544.1,296 530,297.7 528.7,298 527.8,299 530,299.5 561,300.2 561.3,301 558,301.7 549,301.2 547.1,302 550,302.7 556,305.6 563.5,308 570,313 575.7,314 588,314.3 592.1,315 595.3,316 593.4,317 594,318 599,319.1 606,319.2 606.6,319 606.3,318 606.8,317 608,316.5 613,317.3 614.2,318 608.4,320 607.6,322 603.8,324 603.2,325 605.6,327 606.1,329 607.7,331 602.8,333 602.8,334 606.1,336 602.5,337 592.9,338 583,340.9 551,344.3 523,346.3 510.3,350 507.2,353 502,354.7 479,357 455,354.2 451,351.3 446.1,349 441,347.6 425,347.7 413,346.2 407,344 401,343 381,341.2 369.7,338 361,336.4 357.4,334 356.8,332 346.8,330 348.9,329 356,327.5 357.3,327 357.6,326 349.4,323 347.7,322 347,320.9 337.8,320 337.9,319 346,317.8 353,318.9 357,318.8 361.7,318 368,315.7 380,314.4 386.7,312 387.1,310 391.6,309 394,307.8 408,305 410.9,303 427.1,300 430.9,298 429.8,297 426,295.7 411,294 411.4,293 414.8,292 413.1,291 408,289.8 403,287.7 392,285 391.2,283 386.5,279 382.2,277 385,274.9 374,273.5 362.2,273 366.3,272 370,271.8 388,272.6 394.1,270 394.6,268 397,266.6 407,265.6 423.4,262 435.5,256 435.3,255 433,253.3 425.8,252 425.2,250 416,248.4 412,246.6 402,244.6 395.8,242 391.2,239 391.4,238 392.5,237 391.8,236 388.5,234 387,231.1 385.5,230 392,228 396.5,226 400.3,223 374.3,217 369.4,214 360,210.1 360.8,209 360.7,208 358,205 358,204 361.3,202 373.4,198 393,193.9 424,190.8 458.7,190ZM351,319.9 350.6,320 355.5,320 355,319.2 354,319.2 351,319.9ZM375.7,239 381,238.6 385.9,239 385.4,240 381,241.3 374.6,242 356.6,242 353.5,241 361,239.8 371,239.6 375.7,239ZM402.8,258 411,258 414,258.9 419.9,259 406,259.3 402.7,259 402.8,258ZM239.9,272 243,272.2 244.7,273 242,273.7 236.8,273 239.9,272ZM312.8,290 313,290 314.2,290 314,290 312.8,290ZM316.1,291 322.2,291 326.4,292 320,292.3 316.1,291ZM339.8,296 350,295.1 356.7,296 354.9,297 350,297.2 339.7,297 339.8,296Z"/>
<path fill="#00fff2" d="M451.9,191 468,190.7 492,191 514,191.8 542,193.7 562.2,198 574.2,202 578.5,204 577.7,205 577.9,206 580,207.8 579.8,209 578.3,210 569.9,213 566.9,215 565,218 556.3,220 555.1,221 558,221.6 566.5,222 565.6,223 566.6,225 555,225.2 554.6,226 551.6,227 550.8,228 553.9,232 555,234.3 558.1,236 557.7,237 550.8,240 548.1,244 545,245.5 537,246.7 534.8,248 525,248.5 519,249.8 518.1,251 519.4,253 519.4,254 516.3,256 517.6,258 517,260 518.5,261 542,262.4 545.4,263 547.1,264 547.3,265 549,265.9 557,266.5 557.3,267 556.4,268 556.8,269 558,270 563.8,272 562.6,274 565.4,276 564.9,277 565.3,278 569.6,280 569.2,282 572.5,284 565,284.7 559,286.7 557.1,288 540,292.4 525,294.7 523.2,296 522.9,299 525,300.7 529,301.9 544,304.5 556,307.9 561.2,312 561.6,313 563.5,314 583,317.3 588.7,319 593,321 598,322 598.5,323 595.5,325 596.2,329 598.1,330 598.3,331 592,334 591.3,335 591.5,336 589.3,337 561,341.6 521,345.5 504.6,350 501,353 498,353.8 480,355.6 470,355 460,353.6 458.2,353 455.9,350 441,346.4 433,345.5 423,345.4 407,342.5 389,340.4 377.7,337 367,335 364.3,334 367.1,332 366.6,331 360,329 365.5,327 367.1,325 366.8,324 364.1,322 364.2,321 365,320.6 371.6,319 374.8,317 386.4,315 390,313 393.2,312 396,310 400,308.5 415.7,305 420.7,303 432.1,301 434.2,300 435.3,298 435,296.9 429.6,295 419.1,294 418.1,293 420.4,292 419.2,291 399.4,285 395,280 389.8,277 397.6,272 403.9,269 404.5,268 407.1,267 431.6,262 433.9,261 434.4,259 439.7,256 439.5,255 436.1,251 435,250.5 421.7,248 416.9,246 406.8,244 402.1,242 398.7,238 397.8,236 393.9,234 394.7,232 394.5,230 396,229 405.2,225 412.1,223 409.3,222 396,220.5 383.2,218 373.2,213 368.5,210 366.3,207 366.2,204 368.8,202 379.3,198 395,194.8 426,191.8 451.9,191Z"/>
<path fill="#00ffd7" d="M451.4,192 489,192 535,194.3 555.6,198 568,201.5 571.3,203 572,204 570.9,206 573.9,208 574.1,209 572.5,210 566,212 556,217.5 537,220.1 530.3,222 531.4,223 541.7,226 543.5,227 551.7,236 551,237 539,243.5 530,246.1 515.1,249 513.6,251 515.9,253 511.4,255 511.1,256 512.8,260 516.5,262 523,262.7 538,262.7 543,263.7 543.5,264 541.8,266 550.2,268 550.6,270 558.3,276 559,278.3 561,279.7 562.8,280 558,281.2 555.6,283 555.4,285 550.3,288 540.7,290 536.3,292 521.3,294 519.7,295 518.4,297 518.8,299 519.6,300 523,301.8 527,302.9 549.5,308 554.6,312 555.8,314 575.2,318 588.3,323 587.1,325 587.6,327 587,329 587.6,331 587.2,332 582.5,334 579,336.2 563,339.7 544,342.3 519,344.6 509,347.5 497,350 495.4,351 495,352 492.6,353 479,354.5 471.4,354 465.8,353 463.8,352 464.4,351 463.9,350 441,344.8 424,343.4 396,339.3 388,337.4 376.1,333 376,331 374.1,329 374.1,328 376.1,325 375.6,324 371.5,321 381.5,319 393,315.9 402.1,313 403.5,312 403.8,311 408,309 423.7,305 437.3,301 438.9,300 439.3,297 437.9,296 434,294.6 425.2,293 426.4,292 425,291 406,285 403.2,282 401.7,279 397.2,277 397.7,276 402.5,274 405.4,272 416,267.2 440.2,262 440.9,261 438.8,259 443.1,257 443.9,256 441.1,251 439.7,250 429.4,248 423.7,246 410.5,243 408.4,242 404.3,237 400.2,234 401.4,232 401.7,230 403.1,229 411,225.6 421.1,223 421.4,222 390,218 378.5,213 372.7,209 371.7,207 372.6,204 373.2,203 374.8,202 382.2,199 396.9,196 427.4,193 451.4,192Z"/>
<path fill="#00ffbd" d="M455.1,193 489,193.1 530,195.5 540.4,197 555,200.5 563.9,202 565.8,203 565.9,204 564.4,206 566.4,209 564.6,210 542.1,217 526.6,220 520.9,222 521.2,223 530.9,225 537,227.5 540.8,230 546,234.6 546.4,235 546.2,236 533.7,243 512,248.3 509,251 510.2,253 505.1,255 504.9,256 507.7,260 511.4,262 517,263.3 532.3,265 537.1,267 542.5,268 543.6,270 552.5,277 551.9,279 546.4,284 546.3,286 545.3,287 531,289.6 529.5,290 529.5,291 528,291.7 519,293.3 514.9,296 514.1,298 514.6,299 517.2,301 519.5,302 544,309 547.7,312 549,314 550,314.4 567,318.2 580.2,323 578.7,325 579.6,327 576.7,333 570.4,336 552.8,340 517,343.8 502,347.7 489,349.6 480,350.2 473,349.7 455.5,347 443,343.8 424,342.1 406,339.5 393,336.2 385.9,333 382.9,327 384.2,322 396,317.8 411,314.2 412.7,313 411.9,311 413.6,310 442,301 443.6,300 443.8,297 443.2,296 438,292 428.8,290 413.4,285 409.4,282 408,278.8 407.1,278 403.9,277 403.8,276 407,274.9 410,273 421,268 444.9,262 445.5,261 444,259 448.2,257 448.7,256 448.1,254 445.4,251 442.6,249 417,242.3 412.9,240 407.1,234 410.6,229 412.1,228 417.1,226 431.8,222 429.4,221 412,219.3 399,217.1 385,212.2 378.6,208 379.6,206 380,203 384.8,201 391.9,199 404,196.9 428,194.4 455.1,193Z"/>
<path fill="#00ffa3" d="M453.4,194 486,193.9 525,196.8 536.9,199 553.9,204 554.4,205 553.9,207 549.9,210 541,213.6 513.1,222 514.7,223 526.6,226 532.1,228 538,233 541.5,235 540.8,236 535.8,238 530.6,242 508,248 504.9,250 503,253 499,255 498.7,256 502.3,260 506.1,262 516,264.3 526,265.6 533.2,268 541.8,273 546.6,277 546.8,278 546.2,279 544.1,281 536.2,286 531.1,288 522.4,290 513.1,294 510,297 509.7,298 510.2,299 515.4,302 528.8,306 536.5,309 539.6,311 542.3,314 544.2,315 561.5,319 571,323 571.4,328 570.3,333 561,336.5 548,339.4 536.7,341 514.9,343 503.9,346 496,347.4 480,348.6 462.4,347 456.4,346 445.5,343 424,341 411.6,339 399.2,336 394.7,334 391.7,332 390.3,328 390.3,326 394.8,321 401,318.6 416.6,315 418.6,314 419.3,311 423.2,309 445,301.5 448.1,300 448.7,299 447.9,296 443.5,292 422.8,286 417.9,284 415.7,282 411.9,276 416,273 426,268.5 446,263.4 449.6,262 450.9,261 451.6,259 454.5,257 455.1,256 453,253 445.4,248 425.4,243 420.6,241 417.2,239 415.5,236 413.6,234 416.3,230 419.2,228 427.6,225 440.4,222 440.1,221 418,218.2 402.7,214 396.7,212 392.6,210 391,208 391.1,205 394.2,202 400.1,200 407,198.5 432,195.5 453.4,194Z"/>
<path fill="#00ff89" d="M449.6,195 479,194.4 504,195.9 517,197.6 528.9,200 537.3,203 540.5,205 540.3,207 538.9,209 536.5,211 532.6,213 512,219.7 503,221 504.1,222 519,225.6 526,228 528,229.1 531.3,232 532.7,235 528.9,239 525,242 503.1,248 497.4,252 491.6,255 490.9,256 497.4,261 500,262 521,266.7 527,268.6 535.8,273 540.3,277 540.3,278 536.6,282 527.2,287 515.8,290 508.6,294 506.2,296 504.9,298 505.4,299 508.7,301 525.1,306 532,308.8 535.4,311 538.6,315 540,315.7 554.2,319 561.6,322 564.1,324 564.7,326 565.2,332 564.5,333 551.7,337 542.5,339 512,342.5 495,346.3 480,347.3 463.4,346 448,342.4 430,340.6 419.2,339 405.4,336 398,332 396.5,327 396.8,326 399.5,323 403.6,320 421,315.6 423.2,314 423.6,312 424.5,311 428.2,309 436,305.8 451.1,301 454.1,299 454,298 452,295 446.4,291 428.9,286 422.4,283 420.1,280 418.3,276 419.1,275 421.8,273 430.4,269 448.9,264 457.8,261 460.8,259 462.5,257 462.5,256 459.6,253 450.5,248 428.4,242 421.8,238 420.3,233 421.2,231 423.2,229 430,225.9 447,222 446.6,221 425,217.5 410,212.7 403.3,210 401.7,207 401.8,205 405,202.6 415,199.5 434,196.4 449.6,195Z"/>
<path fill="#00ff6f" d="M465.3,195 486,195.2 506,196.9 520,199.8 525.8,202 529.5,204 531,206 530.6,208 528.1,211 525.5,213 513,217.7 495.4,221 496.2,222 511.2,225 520.3,228 523.9,230 525.9,232 526.8,234 526.4,236 522.7,240 518,242.5 500.5,247 486,252.4 478,253.5 473,253.1 466,251.5 453.4,247 434.3,242 428.2,239 426.5,237 425.7,233 426.2,231 428.3,229 435.2,226 453.7,222 452.9,221 433.2,218 424,215.4 412.7,210 410.6,207 411.4,205 414.2,203 418.7,201 431,197.8 446,195.9 465.3,195ZM473.3,260 479,259.5 486,260.5 515.4,267 524,269.9 531.5,274 533.3,276 533.7,278 532.9,280 530.8,282 524,285.7 512,289.5 506.6,292 500.4,296 498.9,298 499.3,299 506.6,302 527,308 532.5,311 534.5,313 536.2,316 550.4,320 554.6,322 557.1,324 558.3,326 558.5,332 548.1,336 538,338.4 509.4,342 493,345.2 481,346.1 467,345.1 451.6,342 424,338.5 410,335.3 404.6,332 403.2,328 403.5,326 405,324 409.1,321 412,319.7 424,316.5 425.6,315 427,311.8 431.4,309 438,306.4 456.5,301 459,300 460.9,298 457.7,295 451.2,291 445.9,289 434.4,286 428.1,283 426.1,281 425.2,279 424.6,276 426,274 432,270.6 439.2,268 456,263.6 473.3,260Z"/>
<path fill="#00ff55" d="M453.5,196 476,195.5 498,196.7 512.4,199 518,200.7 523,203 525.6,205 526.1,207 524.9,210 521.8,213 515,215.7 508,217.7 486.3,221 486.4,222 504,224.7 511,226.3 516,228.2 519.5,230 521.6,232 522.5,234 521.6,237 518,240.3 512,242.8 486,248.7 479,249.6 472,249.2 457,246.4 441,242.4 434,239.8 430.9,237 429.7,233 430.2,231 432.7,229 437,227 443,225.4 462.3,222 461.3,221 438.3,218 429,215.7 424,213.8 419,211 416.3,208 416,206 417.7,204 420,202.6 428,199.5 440,197.3 453.5,196ZM468.6,263 482,262.4 498,264.7 515,268.5 522,271.3 526.3,274 528,276 528.3,279 527,281 524.4,283 517,286.3 502.8,291 489.1,298 490,299 492.9,300 518,306.1 528.2,310 531.8,313 533,316 534,317 546.2,321 550.7,324 552.1,327 550.9,331 548.4,333 544.1,335 533.2,338 492,343.8 481,344.6 470,343.9 433,338.8 416,335 410.8,332 409.6,327 411.5,324 416,321 427,317.3 428,316.2 429.7,312 432.4,310 440,306.9 467.1,300 470.2,299 471.3,298 454.1,290 436,284.6 433.2,283 431.1,281 430.1,278 430.1,276 431.3,274 438.3,270 454,265.5 468.6,263Z"/>
<path fill="#00ff3b" d="M469.1,196 491,196.7 507.9,199 515,201 521,203.7 523.2,206 523,208 521.3,211 518.5,213 506.3,217 491,219.3 472,220.5 453,219.2 436,216.5 429,214.3 423.7,212 420.9,210 418.9,207 419.7,205 422.6,203 428,200.8 434.7,199 449,196.9 469.1,196ZM467,223 475,222.6 485,223.2 496,224.5 506,226.4 512,228.3 517,230.8 518.8,233 519.1,235 518.2,237 516.2,239 510,242.1 493,245.7 477,247.1 461,245.7 445,242.2 436.5,239 434.4,237 433.5,235 433,233 433.6,231 439,227.9 450,225.1 467,223ZM464.7,265 475,264.1 485,264.3 496,265.6 507.7,268 515,270.2 520.8,273 523.9,276 524.3,279 522,282 515,285.3 489,293.2 480,294.3 471,293.3 442,285 437.5,283 434.4,280 433.9,278 434.6,275 436.6,273 440,271.1 452,267.4 464.7,265ZM475.5,301 485,301 496,302.4 512,305.6 523.1,309 528.2,312 529.7,314 530.6,317 531.7,318 539.7,321 544.5,324 545.8,326 545.7,329 543.4,332 540,334 535,336 529,337.6 503,341.4 482,343 467,342.3 438,338.7 423.3,335 418.9,333 416.5,331 415.7,328 416.8,325 420.5,322 430.2,318 431.9,313 435.4,310 442,307.4 453,304.6 465,302.3 475.5,301Z"/>
<path fill="#00ff21" d="M456.2,197 479,196.7 499,198.3 507.7,200 516,202.7 519.8,205 520.6,207 519.3,210 517.2,212 507,215.6 492,218.4 473,219.5 455,218.6 439,216.1 426.7,212 423.7,210 421.6,207 422.4,205 423.7,204 433,200.5 444,198.2 456.2,197ZM467.6,224 484,224.2 503.5,227 510,229 513.9,231 515.5,233 515.7,235 514.7,237 512.6,239 505.5,242 491,244.6 477,245.7 462,244.5 448,241.8 440.2,239 437.8,237 436.8,235 436.3,233 437.1,231 442.8,228 453,225.7 467.6,224ZM467.2,266 477,265.4 486,265.7 496,266.9 506,268.9 513,270.9 517.2,273 520.5,276 521,279 519.7,281 517,282.9 509,285.8 491,289.6 479,290.8 467,289.5 447,285.1 441,282.8 438.6,281 437.3,279 437.2,277 438,275 440.2,273 444,271 456,267.7 467.2,266ZM469.5,303 481,302.4 493,303.3 509,306 519.8,309 524,311 526,312.8 526.8,314 527.6,317 529,318.7 536.1,322 539.1,324 540.5,326 540.4,329 539.2,331 536,333.3 530,336 524,337.6 504,340.6 483,342 465,341.3 441,338.3 428.9,335 424.7,333 422.1,331 421.1,328 422.1,325 425,322.5 433,318.5 433.8,317 434.2,314 436.8,311 441,308.9 449,306.5 469.5,303Z"/>
<path fill="#00ff07" d="M452.1,198 474,197.1 495,198.5 504,200.2 513.5,203 517,205 517.8,207 516.4,210 514.1,212 507,214.5 490,217.8 472,218.7 456,217.9 440,215.2 429.8,212 426.6,210 424.4,207 425.3,205 430,202.6 440,199.9 452.1,198ZM467.8,225 482,225 502,227.8 510.2,231 511.9,233 512,235 511,237 508.7,239 503,241.2 490,243.5 477,244.4 463,243.4 450,241 443,238.3 440.4,235 440.1,232 442,230.1 444.3,229 453,226.8 467.8,225ZM469.8,267 479,266.6 488,267.1 497,268.2 505.5,270 511.6,272 515,274 517.1,276 517.6,279 515,282 506,285.3 493,287.7 479,288.7 465,287.6 451.4,285 444,282.3 442.1,281 440.7,279 440.5,277 441.5,275 446,271.9 456,269 469.8,267ZM471,304 481,303.5 492,304.3 506,306.4 516.3,309 520.8,311 523.2,313 524.9,318 525.9,319 535.7,324 537.1,326 537.1,329 535.9,331 533,333 527,335.7 521,337.4 502,340.1 482,341.2 463,340.5 443.5,338 436,336.2 431,334.3 426.7,332 425,330 424.5,328 425.4,325 428,322.8 435.8,319 436.6,318 437.2,314 440,311 444.4,309 451.5,307 471,304Z"/>
<path fill="#44ff00" d="M460.7,198 480,197.9 495,199.4 510.1,203 514,205 514.8,207 514.1,209 512.3,211 508.4,213 505,214 489.4,217 472,218 455,217 439.4,214 431.2,211 428.6,209 427.3,207 428.3,205 429.8,204 436,202 448,199.4 460.7,198ZM468.6,226 481,226 498,228.2 506,231 507.9,233 507.9,235 505.9,238 499,240.8 487,242.6 475,243.1 463,242.2 451.5,240 446.7,238 444.9,236 444,234 444.1,232 444.9,231 449,229 457,227.3 468.6,226ZM473.2,268 489,268.4 504.2,271 509.4,273 512.5,275 513.9,277 513.9,279 511,282 503,284.8 492,286.6 479,287.4 466,286.5 455,284.6 447.4,282 444.3,279 444.1,277 445.3,275 450.1,272 460,269.4 473.2,268ZM471.6,305 482,304.6 493,305.4 506,307.4 515.2,310 520,313 521,315 521.6,318 522.5,319 532.9,324 534.5,326 534.5,329 533.2,331 530.1,333 518.5,337 502,339.5 482,340.5 465,340 447,337.8 439.2,336 434,334.2 429.5,332 427.6,330 427.1,328 428,325 430.4,323 439.1,319 439.8,318 440.4,314 443.5,311 448.3,309 454,307.5 471.6,305Z"/>
<path fill="#9fff00" d="M457.3,199 475,198.4 491,199.7 506.5,203 510.8,205 511.7,207 510.9,209 508.8,211 503,213.4 487,216.4 472,217.2 457,216.3 441,213.3 434.7,211 431.8,209 430.5,207 431.5,205 436,203 448,200.3 457.3,199ZM470.8,227 483,227.3 495.7,229 499,230 502.6,232 503.4,233 503.3,235 501,238 495.6,240 486,241.4 475,241.8 463.5,241 454,239 450.3,237 448.5,234 448.6,232 449.6,231 453,229.5 459.9,228 470.8,227ZM464.6,270 480,269.1 496,270.6 502.1,272 506.7,274 509.3,276 510,278 509.2,280 508.1,281 503,283.3 493,285.3 481,286.1 469,285.6 458.2,284 451.9,282 448.3,279 448.1,277 448.6,276 451,273.9 456,271.8 464.6,270ZM472.2,306 481,305.6 492,306.4 503.5,308 511.1,310 516.4,313 519,319 530.3,324 531.9,326 531.9,329 530.6,331 527.2,333 514.1,337 500,339 483,339.9 465,339.3 449,337.3 435,333.3 432.3,332 430.2,330 429.7,328 430.6,325 433.2,323 442.5,319 443.2,318 443.9,314 447.3,311 457,308 472.2,306Z"/>
<path fill="#faff00" d="M456.2,200 471,199.1 486.4,200 503,203.2 507.3,205 508.3,207 507.3,209 505.1,211 500.1,213 485,215.6 472,216.4 459,215.6 444.1,213 436.7,210 433.9,207 434.1,206 435,205 439,203.3 456.2,200ZM462.9,229 475,228.2 487.5,229 495.4,231 497.1,232 498.2,234 496.3,237 494,238.3 488,239.7 481,240.4 472,240.4 464,239.6 457.8,238 455,236 453.9,234 454.1,232 458,230 462.9,229ZM467.5,271 481,270.4 494,271.7 499,273 503,274.8 504.5,276 505.4,278 504.4,280 503.1,281 497.9,283 491,284.2 481,284.9 470,284.4 461,283.1 455.2,281 453,279 452.8,277 453.4,276 456.1,274 461.8,272 467.5,271ZM473.3,307 482,306.7 494,307.7 502.5,309 509.2,311 513.4,314 514.4,318 515.2,319 525.7,323 528,324.5 529.2,326 529.2,329 527.8,331 525,332.6 513,336.3 500,338.3 483,339.2 467,338.8 452,337 437.3,333 435.2,332 433,330 432.4,328 433.3,325 436.1,323 446.3,319 447,318 447.7,314 449.7,312 458.1,309 473.3,307Z"/>
<path fill="#ffe200" d="M467.8,200 481,200.4 495,202.4 501.4,204 503.4,205 504.5,207 503.4,209 501,210.9 495,213 483,214.8 472,215.4 460,214.6 448,212.7 440.7,210 437.7,207 437.8,206 438.9,205 444.7,203 457,200.9 467.8,200ZM469.9,230 478,229.9 485,230.6 489.5,232 490.7,233 491,234 489.6,236 486,237.7 476,238.8 466,237.6 462.7,236 461,234 461,232.9 463,231.4 469.9,230ZM474.3,272 483,272 491,273 497.1,275 498.7,276 499.7,278 498.4,280 493.8,282 488.3,283 481,283.5 473,283.3 466,282.3 461.6,281 458.7,279 458.5,277 461,274.9 466.6,273 474.3,272ZM475.8,308 483,307.9 493,308.7 500.6,310 505,311.4 509,314 510.2,318 511.1,319 524.5,324 526.3,326 526.4,329 524.9,331 522,332.6 510,335.9 497,337.9 483,338.6 468,338.2 455,336.6 440.5,333 438.2,332 435.8,330 435.2,328 436.2,325 439.2,323 450.4,319 451.2,318 452,314 454.4,312 463,309.4 475.8,308Z"/>
<path fill="#ffc400" d="M467.1,201 478,201.2 492.4,203 499,205 500.1,206 500.3,207 497.7,210 492.9,212 484,213.5 472,214.3 460,213.5 451,212 445.4,210 442.5,208 441.9,207 442.1,206 443.3,205 447,203.7 456,202.1 467.1,201ZM470.8,275 478,274.2 485,274.7 490.1,276 491.4,277 491.8,278 491.2,279 489.5,280 485.7,281 479,281.5 472.5,281 468.6,280 466.9,279 466.3,278 466.6,277 467.9,276 470.8,275ZM468.2,310 477,309.2 486,309.4 494,310.3 500.8,312 503.9,314 505.3,318 506.2,319 521.4,324 523.3,326 523.4,329 521.8,331 520.1,332 511,334.7 497.5,337 482,337.9 469,337.5 457,336 444,333 441.4,332 438.9,330 438.3,327 439.3,325 440.5,324 455.2,319 456.1,318 456.6,315 458.2,313 463,311 468.2,310Z"/>
<path fill="#ffa500" d="M469.9,202 480,202.5 490.7,204 493.7,205 495.1,206 495.3,207 493.7,209 489,211.1 482,212.4 472,213 462,212.4 454.1,211 449,209 446.8,207 447.1,206 448.6,205 451.7,204 469.9,202ZM474.7,311 486,311 492.6,312 495.7,313 498.2,315 499.1,318 500.4,319 517.9,324 520.1,326 520.1,329 518.4,331 516.6,332 509.5,334 495,336.4 482,337.2 470,336.8 458,335.1 447.8,333 445,332 442.2,330 441.5,327 442.6,325 443.9,324 461.1,319 462.2,318 462.9,315 465,313.2 468.3,312 474.7,311Z"/>
<path fill="#ff8700" d="M460.4,204 471,203.3 481,203.9 486.8,205 488.7,206 489.1,207 487,208.8 483.9,210 478.6,211 472,211.4 464.9,211 459.2,210 456,209 453.1,207 453.4,206 455.5,205 460.4,204ZM476.2,314 481,313.6 484.9,314 487.4,315 489.6,318 492.3,319 512,323.2 514.2,324 516.5,326 516.6,329 514,331.4 508,333.3 493,335.7 481,336.4 469,335.7 454,333.4 448.9,332 446.9,331 445.2,329 445.4,326 447.7,324 454,322.1 469.2,319 471.8,318 473.7,315 476.2,314Z"/>
<path fill="#ff6800" d="M464.2,206 473,205.3 477.9,206 478.7,207 475,208.2 469,208.4 465.9,208 463.5,207 464.2,206ZM475.2,320 481,319.7 488,320.1 506,322.8 511.6,325 512.6,326 513,328 511.9,330 510.6,331 505,332.8 493,334.7 482,335.5 471.6,335 457.2,333 451.1,331 449.1,329 449.4,326 453,323.6 460,322 475.2,320Z"/>
<path fill="#ff4a00" d="M479.3,321 489,321.4 501.1,323 507,325 508,326 508.6,328 507.3,330 502.9,332 494,333.5 482,334.4 473,334.1 462,332.7 455.9,331 453.6,329 453.3,328 453.9,326 456.9,324 466,322.2 479.3,321Z"/>
<path fill="#ff2c00" d="M468.8,323 481,322.2 493,323 501.2,325 502.6,326 503.3,328 501.7,330 497,331.7 482,333.3 465.8,332 462,331 459,329 458.7,327 460.7,325 468.8,323Z"/>
<path fill="#ff0e00" d="M474.1,324 482,323.7 490,324.4 495.2,326 496.1,327 496.2,328 493.9,330 491,330.8 481,331.7 471,330.9 467.8,330 465.6,328 466,326.8 468,325.4 474.1,324Z"/>
</g>
<g fill="none" stroke="#000" stroke-width="1" shape-rendering="crispEdges">
<path d="M505.7,92 501,93 476,93.6 463,93.4 458.3,92M680.5,92 676,93.1 660,93.5 650,95 643,95.4 640,95.1 637.5,94 632,93 629.9,92M696.4,92 696,92.5 694,92.9 689.1,92M267.2,94 272,93.8 276.1,94 275.3,95 272,95.3 267.3,95 267.2,94M600,95 606,94.4 609.7,95 601.7,97 596,97 595.9,96 600,95M604.7,102 610,102.4 613,103 616,104.5 621.4,105 606,104.6 597.9,105 596.8,104 597.3,103 598,102.8 604.7,102M724,104.7 721,104.5 719.9,104 724,103.6M657.9,106 661,105.6 664.7,106 664.1,107 661,107.4 659,107.2 657.9,106M469.9,107 479.7,107 482.6,108 485,109.5 490.3,111 489.1,112 484.2,114 486.1,115 502,116.3 511,119.7 518,119.8 529,119 532,119.5 533.1,120 533.5,121 530,121.9 527,122 513,120.2 476,120.2 460,118.1 459,117.4 458.6,117 467.8,115 466.8,114 469.1,113 475.7,112 478.5,111 474,108.5 469.3,108 469.9,107M624.1,107 627.9,107 630.5,108 629,108.8 625,108.8 622.8,108 624.1,107M495.6,109 500,108.4 503.8,109 497,110.5 493,110.5 491.6,110 495.6,109M636.6,109 641,108.7 644.8,109 641,109.7 636.6,109M614.8,112 623,111.4 635,113.2 644,112.4 646,113.3 646.2,114 644.7,115 645.8,116 651,116.3 658,116.1 662.6,118 658.5,119 652,119.3 646.1,119 637,117.4 622.1,118 619,116.3 612.4,115 610.5,114 610.3,113 614.8,112M507.9,113 520,113 521.7,114 510,114.4 508.1,114 507.9,113M428.7,116 430,115.6 434.8,116 432,116.2 428.7,116M407.8,117 415,117 423.9,119 420.2,120 409,120.1 401,121 395.3,121 396.3,120 396.5,119 407.8,117M579.7,117 583,116.7 585.6,117 583,117.2 579.7,117M454.7,119 457,119 458,120 453,121.2 446.2,121 448.5,120 454.7,119M305.5,120 307,119.9 309.2,120 307,120.5 305.5,120M467.2,125 477,124.6 480.7,125 481,126 472,126 467.2,125M345,127 353,126.7 355.7,127 358.1,128 354,128.6 344,128.6 336.7,130 331,130.6 320.8,130 320.3,129 332,127.9 342,127.8 345,127M691.3,128 695,127.8 698.7,128 694,128.4 691.3,128M626.5,129 634,128.4 649.3,130 646,131.3 636,131.7 626.5,129M232,129.7 235.2,130 232,130.4M382.9,131 386,130.4 391.2,131 386,131.9 382.9,131M439.4,132 444.5,132 442.8,133 435,133.6 423,135.6 416,135 414.5,134 417,132.9 422,132.1 433,132.5 439.4,132M506.8,132 511,131.5 525,133 528.3,134 528.2,135 526.9,136 522,137 511,136.1 501.4,136 502.9,135 506.9,134 506.2,133 506.8,132M625,133 627,132.3 632,132.1 636,132.4 637.4,133 637.1,134 632,134.2 627.2,134 625,133M676.6,133 679.2,133 684.1,136 692.5,138 692.4,139 689,139.9 683,139.9 682.2,139 675.6,137 674.1,136 673.6,135 673.8,134 676.6,133M254.9,136 256,136 256.5,136 256,136 254.9,136M724,135.5 717,134.8 714.9,134 714.6,133 718,131.5 724,130.8M530.2,141 537,140.9 537.7,141 538.4,142 532.2,142 530.2,141M364.3,143 370,142.8 375,143.8 385,144.3 389.1,145 387.6,147 386,147.7 369,148.5 366.2,148 366.3,147 368.9,146 369.4,145 363.3,144 364.3,143M724,145.2 713,144.6 692,147.1 689.6,147 687.8,146 695,143.6 708.4,142 707.8,141 708.4,140 711,139.5 719.5,140 720.5,141 719.6,142 724,142.7M232,146.6 246.7,147 241,147.8 232,147.7M550.5,147 559,146.9 561.2,148 547,149.2 544.8,149 542.7,148 550.5,147M566.5,149 568,148.9 570,149 568,149.1 566.5,149M317.9,150 325,149.9 333,150.7 348.5,154 348.7,155 329,156 309,156.2 304.3,157 302,158 301.4,159 299,159.3 294.5,159 291.9,157 289.2,156 293,154.9 307,155.3 313,154.5 317.4,153 316.2,151 317.9,150M401,153 410,152.3 414.6,153 408.2,154 411.6,155 411,156 404,157.6 400,157.3 394.6,155 395,154 396,153.6 401,153M475.8,153 480,152.2 485,152.2 486,152.4 487.4,154 486.5,155 486.4,156 484,157 481,157.4 469.4,156 468.4,155 475.8,153M675.9,153 687,152.6 691.8,153 695,154 682,155.5 675,155.5 671.9,155 671.6,154 675.9,153M472.8,160 480,159.3 486.8,160 489.2,161 486.3,162 479,162 473.4,161 472.8,160M302.4,161 307,160.9 311,162 309,163.1 305,163.1 301.4,162 302.4,161M539.7,162 541,161.3 543,161.1 550,162 546,162.7 539.7,162M284.9,165 291,164.7 301,165.6 309,165.7 311,166 312,166.9 318.3,167 290,167.6 284,168.4 281.2,168 280,167 280.9,166 284.9,165M232,166.4 236.7,167 232,167.6M649.7,167 657,167 661.4,168 663.5,169 660,169.7 655,169.8 645.3,169 644.3,168 649.7,167M462.8,168 465,167.2 472,167.8 477.4,169 478.1,170 474,170.5 466,170.2 463,169.2 462.8,168M263,171 268,170.6 272.1,171 271.4,172 268,172.1 265.2,172 263,171M274.6,173 278,172.4 282.8,173 279,173.9 274.6,173M385.8,175 387,175 388.2,175 387,175 385.8,175M404.8,175 406,175 406.6,175 406,175 404.8,175M232,175.2 240,174.4 249,174.8 249.6,175 249.3,176 245.1,177 246.6,178 256,179.5 259.2,181 249,183.2 242,185.6 232,186.3M285.4,176 289,175.5 293.6,176 291.2,177 288,177.3 286.3,177 285.4,176M501,176 509.8,176 512.6,177 496.3,177 501,176M332.2,177 336,176.4 337.5,177 335,177.1 332.2,177M534.7,178 539,177.4 545,177.5 551.6,178 555.7,179 551,180.3 540,180.9 536,179.9 534.8,179 534.7,178M267.2,180 281,180.5 289,179.4 302,181.7 311.5,182 316.3,183 312,184 303,183.6 290,184.1 279,183.7 276,183.2 273,181.4 266,181 267.2,180M408.9,181 410,180.9 411.8,181 410,181.4 408.9,181M668.9,183 671,182.4 675,182.1 679.7,183 674,183.4 668.9,183M269.8,186 276,186.7 279.4,188 277.1,189 274,188.7 271,188 269.5,187 269.8,186M323.7,190 325,190 326.5,191 323.6,191 323.7,190M331.4,191 337,190.7 342.1,192 341.2,193 337,193.6 331,193.7 326.8,193 328,191.7 331.4,191M724,194.8 718.8,194 719.4,193 724,192.5M232,198 240,198.3 244.8,199 240,200.6 232,200.2M267.6,201 269,200.8 279,201.8 283,203 279,204 272,205 273,205.4 274.1,207 273,207.2 264,207.2 260.8,206 267.1,205 268,204.3 268.2,203 269.7,202 269,201.3 267.6,201M232,201.7 239,201.7 244.1,203 232,204.8M724,204.2 710.5,204 711.7,203 715,202.4 724,202.7M242.4,208 248,208.1 252.3,209 252,209.5 250,210 240.5,209 242.4,208M688.2,210 692,209.4 699,209.1 707.2,210 694,210.2 692,210.7 690,212 686.9,212 686.8,211 688.2,210M724,210.2 722.9,210 724,210M232,213.7 237.5,214 242.5,215 241.6,216 235.1,219 237.8,220 235,221 232,221.3M654.2,217 658,216.5 659.2,217 656,217.3 654.2,217M724,218.9 712,218.4 708.7,218 707,217.2 700.8,217 698.6,216 699,215 710,213.6 714,213.6 724,214.7M621.3,223 626,222.7 629.8,224 626.5,225 622,225.5 614.1,225 614.7,224 621.3,223M287.6,224 295,224 300.6,227 294,227.4 285.5,227 288.7,225 287.6,224M303.8,228 306,227.4 313,227.1 314,228 310.7,229 308,229.3 305.3,229 303.8,228M690.7,228 695,227.7 701.3,228 696,228.4 690.7,228M706.4,228 712,227.8 715.9,228 713,228.5 706.4,228M626.8,229 639,228.8 662,229.8 671.6,231 673.4,232 673.4,233 675,233.7 705,233.4 709.4,234 709.8,235 707,236.1 686,236.7 677,234.4 668,234 658,232.4 628.5,230 626.8,229M232,229.5 240,228.7 257,228.4 263,227.7 268.3,228 262,230.3 246,231.9 232,230.7M314.2,234 322.8,234 324.2,235 322,235.4 318,235.2 316.2,235 314.2,234M296.1,235 304,234.9 306.8,236 304.5,237 300,237.3 296,237 293.8,236 296.1,235M319.6,237 324,236.2 329,236.2 333,236.9 333.7,238 324,238.5 318,238 319.6,237M232,246.4 237.9,247 232,247.4M286.3,249 290,248.5 295,248.7 296.8,249 297.5,250 290,250.9 283.9,250 286.3,249M724,249.4 717,248.6 713.4,247 724,245.6M232,252.2 245,251.5 263,252 271.7,253 265,253.3 248,255.4 243,257.1 232,257.2M641,254.4 641,255 646,256.1 650.6,256 649.3,255 641,254.4M232,256.2 233.3,256 232,255.9M724,258.9 713,257.7 703,257.6 691,256.5 680,256.5 667,257.7 655,257.1 642,257.4 632,256.8 630.1,256 635,254.5 640,254.4 645,253.6 654,253.4 661,254.4 665,254 667.3,253 668.2,251 670.5,249 668.2,248 670,247.1 679,248.4 689,250.9 718,251.4 720.3,252 715.2,253 715.7,254 724,255.3M232,261.3 238,261.7 241.2,263 240.1,264 237.4,265 236,266 238,266.8 246,266.9 252,265.7 257,265.4 274,267.1 283,266.7 287.4,267 286.8,268 286,268.2 277,268.4 275.6,269 278,271 263,272.3 261.1,273 260.9,274 258.5,275 243,276 232,275.7M724,262.2 721,262 724,261.4M637.7,266 640.3,266 641.8,267 641,267.5 639,267.7 637.2,267 637.7,266M336,271.8 335.4,272 341,272.3 345.3,272 342,271.1 336,271.8M634.6,272 646,271.2 654,272 669,271.1 680,272.5 690,272.9 690.5,273 691,274 693.8,275 691,276.1 683,276.2 680.7,276 674,273.8 670,273.2 660,273 654,272 647,272.5 634.6,272M724,271.4 714.9,271 713.1,270 713,269 713.1,268 715,267.7 724,267.7M648.6,277 655,276.3 668,277 671.7,278 666.7,279 664.9,280 669.5,281 667.9,282 658,282.3 653.5,282 649.5,281 650.9,279 648.7,278 648.6,277M257,280 260,279.2 269,279.2 276.2,280 276.4,281 261,281.4 258.4,281 257,280M724,279.3 719.4,279 718.7,278 724,277M375,288.9 374.6,289 382,290.7 384,290.6 385.4,290 383.7,289 381,288.5 378,288.4 375,288.9M659,291 669.9,291 665,292.5 662.6,295 655,296 649,295.6 636,293.1 628,293.4 623.1,293 634,293 639.4,292 659,291M232,291.8 245,291 253,292.1 262,291.8 269.4,294 271.3,295 262,295.4 251,294.7 241,294.9 237,293.9 232,293.5M670.8,297 671,297 671.3,297 671,297 670.8,297M674.6,298 676,297.5 678.3,298 677,298.1 674.6,298M232,298.9 239.5,299 240,300 232,300.6M344,299.9 343.5,300 344.1,301 347,301.2 354.5,301 355.8,300 350,299.2 344,299.9M684,305 691,304.5 695.8,305 688,305.9 686,305.8 684,305M724,306.4 701.6,305 724,303M232,309.3 237,309.4 240.9,310 243.7,312 246.2,313 244.5,314 242,314.2 232,313.9M724,313.4 714.4,313 711.9,312 724,311.7M250.2,316 257,315.8 262.6,317 258,318.1 254,318.2 248.8,317 250.2,316M672,323.8 671.2,324 675,324.9 677,324.9 679.6,324 676,323.4 672,323.8M724,324.5 715.2,325 713.1,326 712.4,327 724,327.6M697,326.9 696.4,327 699,327.5 703.1,327 697,326.9M707,327.9 706.6,328 709.5,328 708,327.9 707,327.9M232,332.2 237,332.9 238.5,334 240,334.4 250,335.2 255,335.2 259,334.4 275,336.5 291,336 290.9,335 285.8,333 289.5,331 288,330.7 285,330.7 281,331.6 272,331.8 263,333.1 260,333.3 255,332.5 246,330 245.9,329 249,327.8 258.8,327 261.4,326 262.1,325 261.1,324 249,324.7 244,323.2 236.9,322 247,322.2 254,321.8 259,320.5 267,319.4 269.2,318 276.1,317 277.9,316 275.8,315 264.4,312 263.7,311 271,310 277,309.9 292.2,311 291.1,313 321,313.4 336,312.1 338.4,311 320,309.5 300.7,309 302.6,308 305,307.6 332,305.7 351,306.5 357,307.1 361.4,307 355.6,305 350.1,304 333,302.8 329.1,303 327.5,304 322,305.2 309,303.9 299.3,305 295,306.1 288,306.1 285.1,305 287.2,304 286.1,303 277,301.4 273.2,300 273.9,299 281,298.2 287.8,299 291,301 305,301.2 315,300.3 316.4,300 317.6,299 313,297.5 311.2,296 309,295.1 307,294.7 294,293.2 283,293.5 279.1,293 279.5,292 284,290.6 286.6,289 286,288.4 283.6,288 310,286.6 316.5,288 335,289 343,287.4 350,287 355,286 357,285 360,285 365,285.8 366.1,285 365.8,283 365,282.6 362,282.2 357,282.5 353.3,283 351.2,284 344,285 334,284.5 313,285.2 307.2,284 308.8,283 310,282.9 332,282.3 334.4,282 335.9,281 334.3,279 334.7,278 333.9,276 330,275 324,274.8 313,275.5 306,276.8 295,277.8 294.2,278 296,279 306.5,280 301,280.4 297,281.8 294,282.2 280.5,280 283,278.5 288.2,277 285.9,275 283,274.9 280.2,276 275,276.4 269,276 267.4,275 280,273.6 283.3,272 283.8,271 286,270.7 301,269.7 311,271.1 314,270.9 315.8,270 312,268.5 297.8,267 299.1,266 304,265 318.3,263 322.8,261 325.2,259 327,258.6 340,259.5 347,261.6 351.8,262 347,262.4 339,264 340,264.3 367,264.7 372,263.8 389.2,262 388.2,261 386,260.4 384.8,259 390,256.5 415,256 418.3,255 411.4,253 408.2,251 395,249.5 393.5,250 393.5,251 390,251.9 368.3,253 362,254.2 352.9,255 333,255.3 324,254.5 314,254.5 306,253.7 303.4,253 309,251.7 320,251.7 329,250.3 345,250.4 348.7,250 353,248.9 374,248.7 382.8,248 372,245.2 357,244.1 341,245.7 331,245.5 318,246.2 312,247.4 300,247.6 288,247.2 284.2,246 292,245 307,246.3 316,245.7 317.9,244 320,243 331,242.7 335.2,242 338.4,240 338.7,239 342.2,238 342,237 333,235.1 333.1,234 340,233.1 361,232.5 363.5,232 365.1,231 364,229.8 358,228.6 325,228.1 319,227.2 314.2,227 320,226.9 330,225.8 352,225.3 358,224.3 365,224 366,223 362,222.6 354,222.9 345,221.2 330,220 327,220.3 320,222.2 314,222.3 308,221.7 301,219.6 297,219.1 282.3,220 281,220.4 278.9,222 277,222.4 263,223.1 243.2,220 242.4,219 267.2,218 270.3,217 277,216.4 281,215.3 295,215.7 317,212.3 331.2,212 321,211.5 318.2,210 318,208 315.6,207 314.6,206 328,203.6 329.8,203 327.9,201 334.9,200 328,197.8 325.4,196 327,195.5 331,195.4 337,196.2 344,194.8 352.8,194 352,193 352.2,192 355,191.8 358,192.6 361,192.2 362,192 359.8,190 363,189.4 369,190.1 391,188.5 398,188.5 403,189.2 406.5,189 402,188.4 401.1,188 400.9,187 395.9,185 397.4,184 400,183.8 409,183.4 416,185.4 426,185.9 436,187.5 445,187.4 448,186.8 456,183.6 457.2,183 458,181.9 465,180.7 468,180 468.5,179 470,178.9 484,180.6 491.5,181 493,182 485,182.5 483.1,183 484.2,184 487,184.5 527.7,185 547,187.8 550,188.9 568,188.9 602,194.1 616,193.9 617.5,195 612.5,196 613.6,197 623,198.5 637,199.6 650,199.7 654,201.2 659,202 661,203 659.3,204 657,204.3 647,204.4 644.5,204 645.8,203 645.6,202 642,201.6 632,203.3 621,203.7 619.9,204 619.8,205 626,205.6 636,205.6 642.4,207 649,207.4 661,207.3 674,206.4 677,206.9 684,209 672,209.8 665,209.4 658,210.5 646,211.3 638,210 632.9,208 628,208 624,209.4 623.5,210 624.5,211 624.4,212 622.1,213 621.8,214 626.2,217 622.6,218 602,220.9 599,222 598.8,223 600.6,224 600.8,225 606.8,227 607.1,228 600,228.8 590,228.8 589,229.1 587.8,231 596,232.6 603,232 609,232.2 624,234.7 644,234 648,234.2 657,235.3 665.5,238 663.1,239 648,239.3 642,240.2 637,240.3 632,239.4 627,237.2 623,236.9 608,239 607,240 613,240.7 615,242 613,242.7 609,242.5 600,240.9 593,241.2 588.8,242 605,243.6 614,243.3 624,244.8 625.9,246 624,247 622,247.3 610,248.2 605.6,249 605.8,250 610.4,251 612.8,252 609,252.6 605,252.6 599,250.8 596,250.4 578,250.1 577,249.9 576.4,249 571,248.2 565,248.6 561.5,250 561.4,251 566.6,253 588.3,256 581,257.3 568,256.8 560.2,258 590,260.4 592,261 591.9,262 601.2,264 602.1,265 602.1,266 604.1,267 599,267.7 587.5,268 584.6,269 585.1,270 602,273.4 611,272.4 629.8,273 628.3,274 619,274.3 612,276 608,276 602,274.7 601,275 602.4,277 593.1,279 602.7,281 601.1,283 612,283.4 632,285.7 640.2,286 642.9,287 629,289.8 619,290.6 608.8,289 597,288.5 594.4,289 593,290 593.4,291 592.1,292 588,293.3 581,294.5 562,296 564.3,297 569,297.4 594,298 603.5,299 602.5,300 595.9,302 598.2,303 603,304 594.7,306 595.1,307 599,307.4 610,308 627,307.3 630,307.8 633,309.3 636,309.6 653,309.2 672,307.6 684,308.4 693,309.5 706.1,310 709.4,311 709.9,312 701,312.3 697.6,313 698.1,314 700.8,315 714,316.3 715.7,317 715.9,318 715.3,319 716.5,321 724,322.2M724,332.4 716,332.4 700,331.3 688.1,331 692.1,330 691,329.2 689.3,329 676,329.6 672.7,330 670.3,331 671,331.8 672,332 681,331.5 686,331.6 686.8,332 683.3,334 683.8,335 689,336.2 695,335 699,334.7 724,336.9M692,339 690,340 694,341 704,341.6 708,341.1 708.5,340 692,339M232,341.8 253,341.3 257.7,340 241,337.8 232,337.9M724,341.1 716.9,342 714.9,343 716.8,344 716.3,345 719.7,346 720.3,347 724,347.6M647,343.9 646.5,344 650,344.4 653.2,344 647,343.9M724,344.8 720.6,344 724,343.7M232,346.2 234.9,346 232,345.7M724,348.5 715,348.6 702,349.4 698.6,349 699.4,347 693,345.9 674,347.6 651,347.7 646,348.5 642,350.3 639,350.6 612,350.6 605,348.6 595,347.6 588.2,348 584,348.9 564,348.5 547,349.9 544.2,351 532,352.4 524.7,354 525.6,355 530,355.4 553,354.1 557,354.6 560.6,356 559.6,357 556.9,358 546.6,360 547.5,361 547,361.4 544,363.1 542,363.5 523,363.6 515,361.4 510,360.9 492,360.8 488,361.6 485.1,363 484.3,364 484.6,365 485.7,366 486.8,369 490.7,371 491.6,372 485.6,375 485.1,376 487,378 487.5,379 487.3,380 485,380.7 481,381 476,380.5 472,379 471.3,378 472.5,376 472.5,375 468.5,373 464.9,370 466.3,369 473.7,366 474,365 469.6,361 450.2,359 443.6,357 438,355.8 424,354.8 419,354.9 413,355.9 399,356.8 393,358.3 386,358.9 385,356.9 373,354.9 350,354.3 338,354.9 334,354.6 331,354 329.1,353 349,352.5 351.6,352 348,351 343,350.4 332,350.5 326.5,350 340,347.5 343.7,346 344.4,345 329,342.4 327.9,342 330.4,340 329.2,339 327,338.7 314,338.7 303,337.7 290,338.4 283.8,340 272,340.8 269.9,342 272,344 262,344.3 252,343.5 249,344.3 246.8,346 245,346.7 237.5,347 245,348.4 248,350.3 252,351.6 274,349.9 284,349.7 299,350.8 304.4,352 301,353.3 290,354.3 276,353.3 265,353.2 240.8,356 232,356.3M582.6,350 585,349.3 589.6,350 589.5,351 586,351.6 581.7,351 582.6,350M232,352.9 237.6,352 232,351.4M591.1,353 595,352.5 599.5,353 598.3,354 596,354.2 593.2,354 591.1,353M618.7,357 627,356.3 629,357 629.2,358 625,358.8 617.2,358 618.7,357M243.4,359 247,358.3 253,358 268,358.7 282,358.2 290.5,360 289.7,361 275,362.9 256,361.1 247,360.9 241.9,360 243.4,359M381.1,359 385,358.7 388,360.7 394.5,362 396.8,364 392,364.8 389,364.7 387.8,364 388.5,363 387,362.2 379.5,361 378.8,360 381.1,359M673.2,362 680,361.9 685.7,363 687,363.7 695.4,364 677,364 672.1,363 673.2,362M314.9,365 320,364.6 323.9,365 318,366.2 306.7,366 314.9,365M507.8,365 516,365.3 519.7,366 516,367.5 513,368 500.1,367 500.1,366 507.8,365M557,365 562,364.3 573,364.8 575,365.2 579.1,367 577,367.9 567,368.5 563.4,370 557.4,371 551,371.3 548.9,371 547.8,370 548.5,369 553.8,368 554.7,367 554.4,366 557,365M374.9,367 385,366.2 394,367.8 410,367.8 416.8,369 419,369.9 428.1,370 443.2,372 441.4,373 427,373.9 424,373.2 420,371.5 415,370.6 396.7,369 394,368.4 378,368.7 372,369.9 363.8,369 366,367.8 374.9,367M724,366.8 697.1,364 697.6,363 724,361.7M724,370.8 720.1,370 724,369M658.2,373 660,372.7 670.8,375 666,375.7 658.8,375 657.6,374 658.2,373M631.9,375 635,374.6 640.7,375 637,375.3 631.9,375M375.9,377 378,376.4 380.3,377 379,377.3 375.9,377M601.4,377 610,376.5 615.4,378 613.8,379 608,379.2 602,379 597.8,378 601.4,377M677.1,379 681.3,379 682.9,380 677,381.4 674.7,381 674,380 677.1,379M690.8,380 698,379.8 700,380.1 701.7,381 699.9,382 695,382.1 690.1,381 690.8,380M340.4,381 344,380.4 349,380.5 352.7,381 358.5,383 346,383.4 344,383 340.4,381M528.8,381 539,380.7 550.5,382 552.3,383 534,382.9 531,382.2 528.8,381M477.2,383 479.1,383 481,383.7 482.2,385 482,386 479,386.6 476,386.5 474.2,386 472.8,385 472.5,384 477.2,383M232,385.2 243,386.5 256,386.3 260.8,387 257,388 240.5,389 241,389.5 244,389.7 249.9,391 253,392 252.9,393 239,392.8 237.6,392 239,390.5 240.4,390 240,389.6 232,389.3M406.2,386 411,385.3 411.5,386 414,387 408,387 406.2,386M520.8,391 521,391 521.2,391 521,391 520.8,391M527.7,391 532.2,391 535.4,392 532,393 529,393.1 527,392.9 525,392 527.7,391M258.6,393 267,392.3 271.5,393 273.3,394 269,394.9 263,395 257.4,394 258.6,393M325.1,397 336,396.6 349,396.9 356.1,398 353,398.9 345,398.2 329,398.8 323.2,398 325.1,397M478.7,398 482,397.4 484.2,398 481,398.5 478.7,398M705.2,398 709,397.1 712.6,398 709,398.2 705.2,398M275.4,400 278,399.9 280.4,400 278,400.2 275.4,400M542,400 551,399.3 563,400.3 565.5,401 560,402.5 550,403.1 540,402.4 534.9,401 542,400M232,400.8 250,401.9 261,401.9 264.1,403 253,403.8 249,404.6 247.7,405 251.2,407 247.3,408 232,408.6M333.3,401 338,401 341.1,402 334.6,402 333.3,401M473.4,401 478,400.2 482.7,401 481,401.8 478,402 475,401.7 473.4,401M376.4,403 385,402.9 391,403.6 408,403.2 413.1,404 403.6,405 391,405.4 375.9,404 376.4,403M712.6,403 719.5,403 721.6,404 717,404.4 711.7,404 712.6,403M297.7,404 302,404 302.7,405 293,405.5 290.9,405 297.7,404M354.5,404 365,403 368,403.4 368.5,404 365,405.1 356.8,406 352.9,406 349.4,405 354.5,404M234,405 237,405.1 239.3,405 237,404.7 234,405M477.8,406 494,405.5 497.6,406 494.3,407 488,407.1 482,407.9 478,407.1 477.8,406M569.6,407 579,406 587,407.2 605,407.7 607.5,408 608.7,410 611,410.7 626,411.3 627.1,412 625,413.8 618,414.1 608,413.3 599,413.2 593.2,412 586,411.3 574,411.4 554.8,410 555,408.6 557,407.6 569.6,407M319.7,408 323,407.4 327,408 323,408.5 319.7,408M631.1,410 634,409.6 635.5,410 632,410.5 631.1,410M628.1,411 630,410.9 630.6,411 629,411.1 628.1,411M630.7,414 634,413.8 635.9,414 634.9,415 629.3,415 630.7,414M556.5,416 559.7,416 557,417 552.5,417 556.5,416M580.9,417 595.1,418 592,418.7 574,420.2 569.7,420 565,419 580.9,417M468.7,419 475,418 476.4,419 476,420.2 473,420.9 469,420.9 463.6,420 468.7,419M724,419.1 720,419.4 718,420.3 715,420.7 702.9,420 705.8,419 709,418.6 724,417.8M284.4,422 292,422.5 295.5,424 296.5,425 281,426.1 262,426.7 258,426.3 254.9,425 255.7,424 257,423.8 272,423.2 284.4,422M360.2,422 366,421.7 375.5,423 371,424.4 366,425.2 360.7,425 357.6,424 357.7,423 360.2,422M520.8,424 525,423.4 529.1,424 526,424.2 520.8,424M303.6,426 307,425.7 310,426 307,426.9 303.6,426M474.1,430 485,430.2 486,430.4 487.4,432 493.3,433 491.4,434 481,434.9 476,431.9 473,431 474.1,430M486.4,430 491,429.8 492.3,430 489,430.2 486.4,430M539.1,433 541,432.9 542.6,433 541,433.3 539.1,433M681.2,434 688,433.4 690.5,434 688.1,435 685,435.1 681,435 681.2,434M345,435 351,434.1 356.3,435 353.8,436 350,436.2 346.6,436 345,435M515.1,437 517.4,437 520,437.9 527,437.4 531,437.7 532.2,438 532.8,440 535.1,441 532.1,441 531.6,440 517.6,439 513.6,438 515.1,437M480.2,439 483.9,439 486.4,440 486,441 483,441.5 476.4,440 480.2,439M405.4,440 408,439.5 411.8,440 409,440.2 405.4,440M625.9,443 627,443.1 630.5,444 626,444 625.9,443M724,442.2 720,441.4 710,441 709.5,440 714.7,440 724,441M472.8,444 477,443.3 481,443.2 487.1,445 484,445.6 479,445.5 475,445 472.8,444M502.4,445 512,444.9 522.2,447 522.3,448 505,447.7 500.2,447 497.9,446 502.4,445M616.1,446 618.6,446 618.7,447 616,447.3 613.5,447 616.1,446M428,448 431,447.8 433.8,448 431,448.2 428,448M281.2,449 293,448.9 294,449.6 294.5,451 293,451.4 287,451.2 278.8,450 281.2,449"/>
<path d="M454.6,193 489,193.1 530,195.5 540.5,197 555,200.5 564,202 565.8,203 565.9,204 564.5,206 566.5,209 564.7,210 542.2,217 526.7,220 521,222 521.2,223 531,225 537,227.5 540.8,230 546,234.6 546.5,235 546.2,236 533.8,243 512,248.4 510.8,249 509.1,251 509.3,252 510.2,253 505.2,255 505,256 507.8,260 511.5,262 517,263.2 532.4,265 537.2,267 542.6,268 543.7,270 552.5,277 551.9,279 549.2,282 546.5,284 546.3,286 545.4,287 531,289.6 529.6,290 529.6,291 528,291.7 522,292.4 519,293.3 517.3,294 514.9,296 514.1,298 514.7,299 517.2,301 519.5,302 544.1,309 547.8,312 549.1,314 550,314.3 567,318.2 580.2,323 578.8,325 579.6,327 576.8,333 570.5,336 552.9,340 540,341.7 517,343.8 502,347.7 489,349.6 480,350.2 473,349.7 455.4,347 443,343.8 424,342.1 406,339.5 393,336.2 387.3,334 385.8,333 384.4,331 382.8,327 384.1,322 386,321 396,317.8 411,314.2 412.6,313 411.8,311 413.5,310 442,301 443.5,300 443.7,297 443.1,296 437.9,292 428.7,290 413.4,285 409.4,282 408,278.8 407,278 403.9,277 403.7,276 407,274.9 410,273 421,268 442.2,263 444.9,262 445.5,261 444,259 448.1,257 448.6,256 448.1,254 445.4,251 442.5,249 417,242.3 412.8,240 410,236.7 407.6,235 407,234 410.5,229 412,228 417.1,226 429.3,223 431.8,222 429.3,221 412,219.3 399,217.1 385,212.2 382.5,211 378.5,208 379.5,206 379.9,203 384.7,201 391.8,199 403.1,197 428,194.4 454.6,193"/>
<path d="M458.4,197 481,196.9 500,198.6 508,200.3 516,203 519.2,205 520,207 518.7,210 516.5,212 512,213.9 506,215.7 491,218.3 472,219.3 454,218.3 439,215.8 427.4,212 424.3,210 422.2,207 423,205 424.4,204 434,200.5 446,198.1 458.4,197M471.7,224 486,224.6 504,227.4 509.1,229 513.1,231 514.7,233 514.9,235 513.9,237 511.8,239 504.3,242 489,244.6 476,245.4 461,244.1 446.3,241 442,239.4 439.5,238 438,236 437.2,234 437.2,232 437.9,231 441,229 443.7,228 456,225.5 471.7,224M470.3,266 479,265.7 488,266.2 498,267.5 507,269.4 514,271.7 517.8,274 519.8,276 520.3,279 519,281 516,283 508,285.8 490,289.3 479,290.2 472,289.8 464,288.6 448,285.1 441,282.3 439.3,281 438,279 437.9,277 438.7,275 441,273 444.9,271 457,267.8 470.3,266M472.4,303 482,302.7 494,303.6 509,306.2 519.1,309 523.3,311 525.6,313 527.4,318 528.6,319 535.2,322 538.2,324 539.6,326 539.5,329 538.4,331 535,333.4 529.1,336 523,337.6 503,340.5 482,341.8 461,340.8 440.1,338 433,336.1 428,334.2 424,332 422.4,330 422,328 422.9,325 426,322.4 433.2,319 434.2,318 434.6,315 435.4,313 439.2,310 444.5,308 453,305.9 472.4,303"/>
<path d="M461.2,202 473,201.4 487,202.7 496,204.7 498,206 498.2,207 497,208.8 495.4,210 489.9,212 483,213.1 472,213.8 461,213.1 454,212 447.8,210 445,208.3 444,207 444.2,206 445.5,205 448.2,204 461.2,202M476.6,276 482,276.1 485.1,277 485.7,278 484,279.2 479,279.8 474,279.1 472.3,278 472.9,277 476.6,276M474.8,310 487,310.1 493.8,311 497.6,312 501.3,314 502,315 502.8,318 503.8,319 519.9,324 521.9,326 522,329 520.3,331 518.6,332 510,334.4 495,336.9 482,337.6 468,337.1 457,335.5 445.6,333 442.9,332 440.3,330 439.8,329 439.7,327 440.7,325 442,324 457.6,319 458.6,318 459.1,315 459.7,314 463,312.1 467,311 474.8,310"/>
</g></g>
<g stroke="#000" stroke-width="1" shape-rendering="crispEdges" fill="none">
<line x1="231.5" y1="96" x2="231.5" y2="448"/>
<line x1="222" y1="145.5" x2="231" y2="145.5"/>
<line x1="222" y1="218.5" x2="231" y2="218.5"/>
<line x1="222" y1="291.5" x2="231" y2="291.5"/>
<line x1="222" y1="365.5" x2="231" y2="365.5"/>
<line x1="222" y1="438.5" x2="231" y2="438.5"/>
<line x1="226" y1="108.5" x2="231" y2="108.5"/>
<line x1="226" y1="126.5" x2="231" y2="126.5"/>
<line x1="226" y1="163.5" x2="231" y2="163.5"/>
<line x1="226" y1="181.5" x2="231" y2="181.5"/>
<line x1="226" y1="200.5" x2="231" y2="200.5"/>
<line x1="226" y1="236.5" x2="231" y2="236.5"/>
<line x1="226" y1="255.5" x2="231" y2="255.5"/>
<line x1="226" y1="273.5" x2="231" y2="273.5"/>
<line x1="226" y1="310.5" x2="231" y2="310.5"/>
<line x1="226" y1="328.5" x2="231" y2="328.5"/>
<line x1="226" y1="346.5" x2="231" y2="346.5"/>
<line x1="226" y1="383.5" x2="231" y2="383.5"/>
<line x1="226" y1="401.5" x2="231" y2="401.5"/>
<line x1="226" y1="420.5" x2="231" y2="420.5"/>
<line x1="236" y1="453.5" x2="719" y2="453.5"/>
<line x1="273.5" y1="454" x2="273.5" y2="461"/>
<line x1="351.5" y1="454" x2="351.5" y2="461"/>
<line x1="429.5" y1="454" x2="429.5" y2="461"/>
<line x1="508.5" y1="454" x2="508.5" y2="461"/>
<line x1="586.5" y1="454" x2="586.5" y2="461"/>
<line x1="664.5" y1="454" x2="664.5" y2="461"/>
<line x1="253.5" y1="454" x2="253.5" y2="457"/>
<line x1="292.5" y1="454" x2="292.5" y2="457"/>
<line x1="312.5" y1="454" x2="312.5" y2="457"/>
<line x1="332.5" y1="454" x2="332.5" y2="457"/>
<line x1="371.5" y1="454" x2="371.5" y2="457"/>
<line x1="390.5" y1="454" x2="390.5" y2="457"/>
<line x1="410.5" y1="454" x2="410.5" y2="457"/>
<line x1="449.5" y1="454" x2="449.5" y2="457"/>
<line x1="468.5" y1="454" x2="468.5" y2="457"/>
<line x1="488.5" y1="454" x2="488.5" y2="457"/>
<line x1="527.5" y1="454" x2="527.5" y2="457"/>
<line x1="547.5" y1="454" x2="547.5" y2="457"/>
<line x1="566.5" y1="454" x2="566.5" y2="457"/>
<line x1="605.5" y1="454" x2="605.5" y2="457"/>
<line x1="625.5" y1="454" x2="625.5" y2="457"/>
<line x1="644.5" y1="454" x2="644.5" y2="457"/>
<line x1="683.5" y1="454" x2="683.5" y2="457"/>
<line x1="703.5" y1="454" x2="703.5" y2="457"/>
</g>
<g font-family='"Liberation Sans", sans-serif' font-size="12" fill="#000" letter-spacing="0.35">
<text x="218" y="149.7" text-anchor="end">0.082</text>
<text x="218" y="223.0" text-anchor="end">0.08</text>
<text x="218" y="296.4" text-anchor="end">0.078</text>
<text x="218" y="369.8" text-anchor="end">0.076</text>
<text x="218" y="443.1" text-anchor="end">0.074</text>
<text x="272.7" y="476" text-anchor="middle">-0.006</text>
<text x="351.0" y="476" text-anchor="middle">-0.004</text>
<text x="429.2" y="476" text-anchor="middle">-0.002</text>
<text x="507.4" y="476" text-anchor="middle">0</text>
<text x="585.6" y="476" text-anchor="middle">0.002</text>
<text x="663.8" y="476" text-anchor="middle">0.004</text>
</g>
<g font-family='"Liberation Sans", sans-serif' font-weight="bold" fill="#000">
<text x="358.3" y="85" font-size="19" textLength="234.6" lengthAdjust="spacingAndGlyphs">Обратное пространство</text>
<g transform="translate(447.7,495) rotate(0)"><text font-size="15.5" x="0 9.2 21 29.6" y="0">qX,Å</text><rect x="43.4" y="-9.2" width="6.6" height="1.7"/><text font-size="10" x="51.2" y="-4.6" textLength="7" lengthAdjust="spacingAndGlyphs">1</text></g>
<g transform="translate(183,301.2) rotate(-90)"><text font-size="15.5" x="0 9.2 21 29.6" y="0">qZ,Å</text><rect x="43.4" y="-9.2" width="6.6" height="1.7"/><text font-size="10" x="51.2" y="-4.6" textLength="7" lengthAdjust="spacingAndGlyphs">1</text></g>
<text transform="translate(771.6,189.8) rotate(90)" font-size="17.6" textLength="148.2" lengthAdjust="spacingAndGlyphs">Интенсивность(log)</text>
</g>
<rect x="478" y="96" width="2" height="352" fill="#ff0000"/>
<text transform="translate(474,167) rotate(-90)" font-family='"Liberation Sans", sans-serif' font-size="12" fill="#f0103c" textLength="67">-0.000732595</text>
<defs><linearGradient id="cb" x1="0" y1="1" x2="0" y2="0"><stop offset="0" stop-color="#0000ff"/><stop offset="0.25" stop-color="#00ffff"/><stop offset="0.6" stop-color="#00ff00"/><stop offset="0.7" stop-color="#ffff00"/><stop offset="1" stop-color="#ff0000"/></linearGradient></defs>
<rect x="724" y="96" width="20" height="352" fill="url(#cb)"/>
<g stroke="#000" stroke-width="1" shape-rendering="crispEdges">
<line x1="746.5" y1="96" x2="746.5" y2="448"/>
<line x1="747" y1="447.5" x2="754" y2="447.5"/>
<line x1="747" y1="363.5" x2="754" y2="363.5"/>
<line x1="747" y1="279.5" x2="754" y2="279.5"/>
<line x1="747" y1="195.5" x2="754" y2="195.5"/>
<line x1="747" y1="111.5" x2="754" y2="111.5"/>
<line x1="747" y1="430.5" x2="750" y2="430.5"/>
<line x1="747" y1="413.5" x2="750" y2="413.5"/>
<line x1="747" y1="397.5" x2="750" y2="397.5"/>
<line x1="747" y1="380.5" x2="750" y2="380.5"/>
<line x1="747" y1="346.5" x2="750" y2="346.5"/>
<line x1="747" y1="329.5" x2="750" y2="329.5"/>
<line x1="747" y1="313.5" x2="750" y2="313.5"/>
<line x1="747" y1="296.5" x2="750" y2="296.5"/>
<line x1="747" y1="262.5" x2="750" y2="262.5"/>
<line x1="747" y1="245.5" x2="750" y2="245.5"/>
<line x1="747" y1="228.5" x2="750" y2="228.5"/>
<line x1="747" y1="212.5" x2="750" y2="212.5"/>
<line x1="747" y1="178.5" x2="750" y2="178.5"/>
<line x1="747" y1="161.5" x2="750" y2="161.5"/>
<line x1="747" y1="144.5" x2="750" y2="144.5"/>
<line x1="747" y1="128.5" x2="750" y2="128.5"/>
</g>
<g font-family='"Liberation Sans", sans-serif' font-size="12" fill="#000">
<text x="759" y="451.9">0</text>
<text x="759" y="367.8">1</text>
<text x="759" y="283.7">2</text>
<text x="759" y="199.6">3</text>
<text x="759" y="115.5">4</text>
</g>
<g shape-rendering="crispEdges"><rect x="734" y="96" width="10" height="2" fill="#cfcfcf"/><rect x="735" y="100" width="7" height="1.6" fill="#c4c4c4"/><rect x="734" y="103.6" width="10" height="2" fill="#545454"/><rect x="742.4" y="96" width="1.6" height="9.6" fill="#545454"/><rect x="724" y="443" width="10" height="1.8" fill="#d4d4d4"/><rect x="724" y="446.6" width="7.5" height="1.5" fill="#c4c4c4"/><rect x="724" y="450.2" width="10" height="2.2" fill="#545454"/><rect x="732.2" y="443" width="1.8" height="9.4" fill="#545454"/></g>
<defs><linearGradient id="bg1" x1="0" y1="0" x2="0" y2="1"><stop offset="0" stop-color="#fffff4"/><stop offset="0.25" stop-color="#fbfbd6"/><stop offset="1" stop-color="#e8e7c8"/></linearGradient><linearGradient id="bg2" x1="0" y1="0" x2="0" y2="1"><stop offset="0" stop-color="#f2ffff"/><stop offset="0.25" stop-color="#d6f6f6"/><stop offset="1" stop-color="#cae6e4"/></linearGradient></defs>
<g shape-rendering="crispEdges"><rect x="772" y="96" width="14" height="70" fill="#ebeac8"/><rect x="773.5" y="97" width="1.5" height="68" fill="#fcfbd2"/><rect x="775" y="97.5" width="8" height="67.5" fill="url(#bg1)"/><rect x="783" y="97.5" width="2" height="67.5" fill="#dad8aa"/><rect x="775" y="109.6" width="8" height="1.2" fill="#d6d49e"/><rect x="775" y="129.8" width="8" height="1.2" fill="#d6d49e"/><rect x="775" y="149.7" width="8" height="1.2" fill="#d6d49e"/><rect x="772" y="381" width="14" height="70" fill="#c9e7e5"/><rect x="773.5" y="382" width="1.5" height="68" fill="#bdf0f0"/><rect x="775" y="382.5" width="8" height="67.5" fill="url(#bg2)"/><rect x="783" y="382.5" width="2" height="67.5" fill="#a9d3d1"/><rect x="775" y="398.7" width="8" height="1.2" fill="#90c8c6"/><rect x="775" y="418.7" width="8" height="1.2" fill="#90c8c6"/><rect x="775" y="437.8" width="8" height="1.2" fill="#90c8c6"/></g>
<g stroke="#8c8c8c" stroke-width="1" stroke-dasharray="1,2" shape-rendering="crispEdges">
<line x1="211" y1="644.5" x2="786" y2="644.5"/>
<line x1="211" y1="612.5" x2="786" y2="612.5"/>
<line x1="211" y1="579.5" x2="786" y2="579.5"/>
<line x1="211" y1="546.5" x2="786" y2="546.5"/>
<line x1="211" y1="514.5" x2="786" y2="514.5"/>
<line x1="230.5" y1="507" x2="230.5" y2="646"/>
<line x1="348.5" y1="507" x2="348.5" y2="646"/>
<line x1="466.5" y1="507" x2="466.5" y2="646"/>
<line x1="584.5" y1="507" x2="584.5" y2="646"/>
<line x1="703.5" y1="507" x2="703.5" y2="646"/>
</g>
<g stroke="#000" stroke-width="1" shape-rendering="crispEdges">
<line x1="206.5" y1="508" x2="206.5" y2="646"/>
<line x1="198" y1="644.5" x2="206" y2="644.5"/>
<line x1="198" y1="612.5" x2="206" y2="612.5"/>
<line x1="198" y1="579.5" x2="206" y2="579.5"/>
<line x1="198" y1="546.5" x2="206" y2="546.5"/>
<line x1="198" y1="514.5" x2="206" y2="514.5"/>
<line x1="202" y1="638.5" x2="206" y2="638.5"/>
<line x1="202" y1="631.5" x2="206" y2="631.5"/>
<line x1="202" y1="625.5" x2="206" y2="625.5"/>
<line x1="202" y1="618.5" x2="206" y2="618.5"/>
<line x1="202" y1="605.5" x2="206" y2="605.5"/>
<line x1="202" y1="598.5" x2="206" y2="598.5"/>
<line x1="202" y1="592.5" x2="206" y2="592.5"/>
<line x1="202" y1="585.5" x2="206" y2="585.5"/>
<line x1="202" y1="572.5" x2="206" y2="572.5"/>
<line x1="202" y1="566.5" x2="206" y2="566.5"/>
<line x1="202" y1="559.5" x2="206" y2="559.5"/>
<line x1="202" y1="553.5" x2="206" y2="553.5"/>
<line x1="202" y1="540.5" x2="206" y2="540.5"/>
<line x1="202" y1="533.5" x2="206" y2="533.5"/>
<line x1="202" y1="527.5" x2="206" y2="527.5"/>
<line x1="202" y1="520.5" x2="206" y2="520.5"/>
<line x1="214" y1="653.5" x2="782" y2="653.5"/>
<line x1="230.5" y1="654" x2="230.5" y2="661"/>
<line x1="348.5" y1="654" x2="348.5" y2="661"/>
<line x1="466.5" y1="654" x2="466.5" y2="661"/>
<line x1="584.5" y1="654" x2="584.5" y2="661"/>
<line x1="703.5" y1="654" x2="703.5" y2="661"/>
<line x1="259.5" y1="654" x2="259.5" y2="657"/>
<line x1="289.5" y1="654" x2="289.5" y2="657"/>
<line x1="318.5" y1="654" x2="318.5" y2="657"/>
<line x1="377.5" y1="654" x2="377.5" y2="657"/>
<line x1="407.5" y1="654" x2="407.5" y2="657"/>
<line x1="437.5" y1="654" x2="437.5" y2="657"/>
<line x1="496.5" y1="654" x2="496.5" y2="657"/>
<line x1="525.5" y1="654" x2="525.5" y2="657"/>
<line x1="555.5" y1="654" x2="555.5" y2="657"/>
<line x1="614.5" y1="654" x2="614.5" y2="657"/>
<line x1="643.5" y1="654" x2="643.5" y2="657"/>
<line x1="673.5" y1="654" x2="673.5" y2="657"/>
<line x1="732.5" y1="654" x2="732.5" y2="657"/>
<line x1="762.5" y1="654" x2="762.5" y2="657"/>
</g>
<g font-family='"Liberation Sans", sans-serif' font-size="12" fill="#000" letter-spacing="0.35">
<text x="193" y="649.1" text-anchor="end">0</text>
<text x="193" y="616.5" text-anchor="end">1</text>
<text x="193" y="583.9" text-anchor="end">2</text>
<text x="193" y="551.3" text-anchor="end">3</text>
<text x="193" y="518.7" text-anchor="end">4</text>
<text x="229.5" y="676" text-anchor="middle">0.074</text>
<text x="347.7" y="676" text-anchor="middle">0.076</text>
<text x="465.9" y="676" text-anchor="middle">0.078</text>
<text x="584.1" y="676" text-anchor="middle">0.08</text>
<text x="702.3" y="676" text-anchor="middle">0.082</text>
</g>
<g font-family='"Liberation Sans", sans-serif' font-weight="bold" fill="#000">
<g transform="translate(468.4,694.2) rotate(0)"><text font-size="15.5" x="0 9.2 21 29.6" y="0">qZ,Å</text><rect x="43.4" y="-9.2" width="6.6" height="1.7"/><text font-size="10" x="51.2" y="-4.6" textLength="7" lengthAdjust="spacingAndGlyphs">1</text></g>
<text transform="translate(181.4,613.7) rotate(-90)" font-size="17" textLength="74" lengthAdjust="spacingAndGlyphs">Инт.(log)</text>
</g>
<polyline points="214.2,633.9 228.7,633.9 232.4,630.2 235.4,628.9 239.9,634.7 244.9,634.7 250.6,629.7 252.9,633.4 255.4,643.9 259.4,642.9 263.1,637.2 265.6,635.2 270.6,640.4 276.1,634.7 278.6,638.4 281.8,642.6 286.5,642.1 287.8,630.9 291.0,625.2 294.3,628.4 301.7,642.9 309.7,630.9 316.7,621.7 322.2,624.7 327.2,619.0 332.2,618.5 337.7,612.2 343.4,619.0 348.9,619.0 355.9,614.0 362.1,609.7 368.3,601.5 373.3,605.2 375.8,592.3 379.6,582.3 383.8,577.3 388.5,564.8 392.2,547.4 395.1,537.4 396.8,523.7 399.8,513.7 403.7,508.7 407.4,507.7 411.2,508.2 414.9,511.2 417.4,517.5 418.7,526.2 420.6,530.9 429.9,530.9 433.6,533.7 437.4,539.9 441.1,549.9 446.1,566.1 451.1,577.3 455.3,581.5 464.8,573.6 469.8,569.8 473.5,559.9 479.8,542.4 484.7,536.2 488.5,534.9 492.2,536.2 498.5,544.9 504.7,562.3 512.2,581.0 517.2,586.5 522.1,588.5 525.9,587.8 532.1,583.0 537.1,579.3 544.6,559.9 550.8,543.6 555.8,539.9 559.6,538.7 563.3,539.9 567.0,546.1 570.8,556.1 573.3,567.3 578.4,584.3 582.9,576.0 587.2,560.2 591.5,537.3 597.3,528.7 603.6,524.4 607.3,528.7 611.0,537.3 613.1,554.5 614.5,576.0 618.8,597.5 624.5,613.3 630.3,621.9 635.1,624.7 638.9,623.9 644.0,633.9 649.5,629.0 653.2,632.5 658.9,643.4 663.8,629.0 669.5,633.4 675.3,629.0 679.9,642.0 684.7,633.4 690.5,643.4 703.4,643.4 706.3,642.5 719.2,643.4 725.8,634.8 730.6,643.4 740.7,643.4 745.8,634.8 750.7,642.5 755.9,633.9 761.6,633.9 766.5,642.5 781.4,643.4" fill="none" stroke="#000" stroke-width="2.2" stroke-linejoin="round" stroke-linecap="square"/>
<defs><linearGradient id="rx" gradientUnits="userSpaceOnUse" x1="-4.6" y1="-4.6" x2="4.6" y2="4.6"><stop offset="0" stop-color="#f6a0a0"/><stop offset="0.45" stop-color="#ee6a6c"/><stop offset="0.55" stop-color="#de3a3c"/><stop offset="1" stop-color="#cc1418"/></linearGradient></defs>
<ellipse cx="775.5" cy="521.3" rx="4" ry="0.8" fill="#000" opacity="0.12"/>
<g transform="translate(775.5,514.4) rotate(45)"><path d="M-1.9,-7.4 h3.8 v5.5 h5.5 v3.8 h-5.5 v5.5 h-3.8 v-5.5 h-5.5 v-3.8 h5.5 Z" fill="url(#rx)" stroke="#d23438" stroke-width="0.7" stroke-linejoin="round"/></g>
<defs><radialGradient id="ai" cx="0.5" cy="0.62" r="0.62"><stop offset="0" stop-color="#ff0000"/><stop offset="0.22" stop-color="#ff0000"/><stop offset="0.32" stop-color="#ffe000"/><stop offset="0.42" stop-color="#30ff20"/><stop offset="0.7" stop-color="#00ffd0"/><stop offset="1" stop-color="#00e8ff"/></radialGradient></defs><path d="M9,23 L9,15 A8,8 0 0 1 25,15 L25,23 Z" fill="#00f0f0"/><ellipse cx="17" cy="16.5" rx="5.2" ry="6.5" fill="url(#ai)"/><ellipse cx="17" cy="16.5" rx="2.4" ry="3.6" fill="#ff0000"/>
<defs><linearGradient id="ff" x1="0" y1="0" x2="1" y2="1"><stop offset="0" stop-color="#f4e29a"/><stop offset="0.5" stop-color="#ecd07a"/><stop offset="1" stop-color="#dcb458"/></linearGradient><linearGradient id="fb" x1="0" y1="0" x2="0" y2="1"><stop offset="0" stop-color="#e9cd74"/><stop offset="1" stop-color="#d9b85a"/></linearGradient><linearGradient id="ga" x1="0" y1="0" x2="1" y2="0"><stop offset="0" stop-color="#3fae00"/><stop offset="0.55" stop-color="#86d820"/><stop offset="1" stop-color="#4fb400"/></linearGradient><linearGradient id="pp" x1="0" y1="0" x2="0" y2="1"><stop offset="0" stop-color="#ffffff"/><stop offset="1" stop-color="#c8c8c8"/></linearGradient></defs><ellipse cx="76" cy="75" rx="19" ry="1.6" fill="#000" opacity="0.12"/><path d="M59,53.5 Q59,52.3 60.2,52.3 L74.5,52.3 L77.2,49.4 Q77.6,49 78.4,49 L92.3,49 Q93.6,49 93.6,50.3 L93.6,60 L59,60 Z" fill="url(#fb)" stroke="#d0ac50" stroke-width="0.6"/><path d="M73.5,54 Q73.5,53 74.6,53 L89.8,53 Q91,53 91,54.2 L91,59 L73.5,59 Z" fill="url(#pp)"/><path d="M56.2,57 Q56,56 57.2,56 L72.5,56 Q73.6,56 74.6,57.2 Q75.8,58.8 77.2,58.8 L94.8,58.8 Q96,58.8 95.8,60 L93.9,73.2 Q93.7,74.5 92.4,74.5 L59.6,74.5 Q58.4,74.5 58.2,73.2 Z" fill="url(#ff)" stroke="#d8b458" stroke-width="0.6"/><path d="M57,57 L73,57 Q76,60 78,59.6 L95,59.6 L94,66 Q75,64.5 58,69 Z" fill="#fff" opacity="0.22"/><path d="M68,39.6 L76.4,48.6 L73.3,48.6 L73.3,55.6 L62.9,55.6 L62.9,48.6 L59.2,48.6 Z" fill="url(#ga)" stroke="#3c9c08" stroke-width="0.5"/>
<rect x="57.7" y="107.7" width="31" height="31" fill="#fff" stroke="#c9a545" stroke-width="0.9"/><path d="M79.5,104 L92,104 L92,116 L85,116 Z" fill="#f0f0f0"/><rect x="86" y="105" width="6" height="11" fill="#f0f0f0"/><path d="M79.8,107.2 L90,107.2 L90,116.3 L83,116.3 Z" fill="#fff"/><g transform="translate(67.2,128.6) rotate(-43.2)"><path d="M0,0 L6.6,-3.1 L6.6,3.1 Z" fill="#f7f0c2" stroke="#c9a545" stroke-width="0.8" stroke-linejoin="round"/><path d="M0,0 L2.2,-1.2 L2.2,1.2 Z" fill="#c9a545"/><path d="M6.6,-3.15 L32.6,-3.15 A3.15,3.15 0 0 1 32.6,3.15 L6.6,3.15 Z" fill="#4a870c"/><rect x="28" y="-3.15" width="2.6" height="6.3" fill="#f3ecc0"/></g><text x="65.3" y="136.4" font-family='"Liberation Serif",serif' font-weight="bold" font-size="8.2" fill="#c9a545" textLength="20.5" lengthAdjust="spacingAndGlyphs">*.DSC</text>
<defs><linearGradient id="wr" x1="0" y1="0" x2="1" y2="1"><stop offset="0" stop-color="#ffffff"/><stop offset="1" stop-color="#d4dbe3"/></linearGradient><linearGradient id="hd" x1="0" y1="0" x2="0" y2="1"><stop offset="0" stop-color="#e2cf9c"/><stop offset="0.5" stop-color="#c2a460"/><stop offset="1" stop-color="#8c7038"/></linearGradient></defs><ellipse cx="76" cy="199" rx="15" ry="1.5" fill="#000" opacity="0.07"/><g transform="translate(61.6,196.2) rotate(-43.6)"><path d="M0,-3.5 L25.5,-3.5 A8.4,8.4 0 0 1 40.8,-3.3 L33.6,-3.3 A3.3,3.3 0 0 0 33.6,3.3 L40.8,3.3 A8.4,8.4 0 0 1 25.5,3.5 L0,3.5 A3.5,3.5 0 0 1 0,-3.5 Z" fill="url(#wr)" stroke="#a9b6c4" stroke-width="0.8" stroke-linejoin="round"/><circle cx="0.8" cy="0" r="0.9" fill="#b5c0cc"/><line x1="7" y1="0" x2="17" y2="0" stroke="#c6d0da" stroke-width="0.9"/></g><g transform="translate(58.6,165.2) rotate(44)"><path d="M0,-1.6 L4.5,-2 L6.5,-1 L27,-1 L27,1 L6.5,1 L4.5,2 L0,1.6 Z" fill="#f4f6f8" stroke="#a9b6c4" stroke-width="0.7"/><path d="M26.5,-2.2 L29,-3 L29,3 L26.5,2.2 Z" fill="#333"/><path d="M29,-3.2 Q31,-4.2 33,-3.9 L41.5,-4.7 Q44.8,-4.7 44.8,0 Q44.8,4.7 41.5,4.7 L33,3.9 Q31,4.2 29,3.2 Z" fill="url(#hd)" stroke="#8a7038" stroke-width="0.5"/><line x1="33" y1="-1.5" x2="42.5" y2="-2" stroke="#f0e2b8" stroke-width="0.8" opacity="0.8"/><line x1="33" y1="1.5" x2="42.5" y2="2" stroke="#8a7038" stroke-width="0.7" opacity="0.7"/></g>
<g fill="none" stroke="#13284b" stroke-width="3.3" stroke-linecap="round"><path d="M70.4,235.9 A15,15 0 0 1 90.9,248"/><path d="M81.5,263.6 A15,15 0 0 1 60.6,251.5"/></g><path d="M86.4,247.2 L96,247.2 L91.4,254 Z" fill="#13284b"/><path d="M55.9,252 L65.2,252 L60.5,245 Z" fill="#13284b"/><g fill="#ff6a12"><rect x="68" y="251" width="3" height="5.8"/><rect x="71.9" y="246.9" width="2.7" height="9.9"/><rect x="75.3" y="248.9" width="2.9" height="7.9"/><rect x="79" y="246.9" width="2.6" height="9.9"/><rect x="82.3" y="242.3" width="2.9" height="14.5"/></g>
<defs><clipPath id="tc"><path d="M56,299.6 L60.8,294.9 L91,294.9 L95.8,299.6 L95.8,318.8 Q76,327 56,318.8 Z"/></clipPath><filter id="tb" x="-20%" y="-40%" width="140%" height="180%"><feGaussianBlur stdDeviation="1.6"/></filter><linearGradient id="tg" x1="0" y1="0" x2="0" y2="1"><stop offset="0" stop-color="#00f6ff"/><stop offset="0.3" stop-color="#00ffd8"/><stop offset="0.55" stop-color="#20ff90"/><stop offset="0.8" stop-color="#00ffd8"/><stop offset="1" stop-color="#00e8ff"/></linearGradient></defs><g clip-path="url(#tc)"><rect x="55" y="294" width="42" height="30" fill="url(#tg)"/><path d="M55.5,310 Q56,305 61,305.6 Q76,309 91,305.6 Q96,305 96.5,310 Q94,317.5 76,319.5 Q58,317.5 55.5,310 Z" fill="#38ff10" filter="url(#tb)"/><path d="M57.4,310.2 Q57.6,306.8 61.5,307.2 Q76,310.2 90.5,307.2 Q94.6,306.8 94.8,310.2 Q93,315 76,316.8 Q59,315 57.4,310.2 Z" fill="#ffd800"/><path d="M57.9,310.2 Q58.1,307.3 61.6,307.7 Q76,310.6 90.4,307.7 Q94.1,307.3 94.3,310.2 Q92.5,314.6 76,316.3 Q59.5,314.6 57.9,310.2 Z" fill="#ff0000"/></g>
<defs><clipPath id="cc"><path d="M57,388 L67.3,372 L87.6,372 L97.2,385.4 L97.2,401.8 L57,401.8 Z"/></clipPath><radialGradient id="cg" cx="0.5" cy="0.42" r="0.6"><stop offset="0" stop-color="#000"/><stop offset="0.6" stop-color="#021c06"/><stop offset="0.85" stop-color="#008c28"/><stop offset="1" stop-color="#00d050"/></radialGradient><linearGradient id="cbg" x1="0" y1="0" x2="1" y2="0"><stop offset="0" stop-color="#00c4c8"/><stop offset="0.18" stop-color="#00fcff"/><stop offset="0.82" stop-color="#00fcff"/><stop offset="1" stop-color="#00c4c8"/></linearGradient></defs><g clip-path="url(#cc)"><rect x="56" y="371" width="42" height="32" fill="url(#cbg)"/><ellipse cx="77.4" cy="394" rx="13.7" ry="22" fill="#00f6f0" stroke="#009ca0" stroke-width="0.7"/><ellipse cx="77.5" cy="392" rx="10.1" ry="16.5" fill="#00eccc" stroke="#007c6c" stroke-width="0.7"/><ellipse cx="77.6" cy="390.6" rx="7.9" ry="12.6" fill="#00dc94" stroke="#005440" stroke-width="0.7"/><ellipse cx="77.7" cy="389.8" rx="6.6" ry="10" fill="url(#cg)" stroke="#003820" stroke-width="0.6"/><ellipse cx="77.7" cy="388.3" rx="4.7" ry="6.2" fill="#ff0000"/></g>
<defs><clipPath id="pc"><path d="M49.8,562 Q50.2,558.6 52.8,558 L87,558 Q89.6,558.6 90,562 L90,596 L49.8,596 Z"/></clipPath><linearGradient id="pg" x1="0" y1="0" x2="1" y2="0"><stop offset="0" stop-color="#00a4a4"/><stop offset="0.17" stop-color="#00ffff"/><stop offset="0.32" stop-color="#00ffd8"/><stop offset="0.5" stop-color="#08ff98"/><stop offset="0.68" stop-color="#00ffd8"/><stop offset="0.83" stop-color="#00ffff"/><stop offset="1" stop-color="#00a4a4"/></linearGradient><radialGradient id="pr" cx="0.5" cy="0.5" r="0.5"><stop offset="0.6" stop-color="#ff0000"/><stop offset="0.72" stop-color="#ffe800"/><stop offset="0.86" stop-color="#40ff00"/><stop offset="1" stop-color="#20ff70" stop-opacity="0"/></radialGradient><filter id="pb" x="-10%" y="-10%" width="120%" height="120%"><feGaussianBlur stdDeviation="0.5"/></filter></defs><g clip-path="url(#pc)"><rect x="49" y="557" width="42" height="40" fill="url(#pg)"/><path d="M49,557 L58,557 Q51,572 51.5,597 L49,597 Z M91,557 L82,557 Q89,572 88.5,597 L91,597 Z" fill="#009898" opacity="0.6" filter="url(#pb)"/><ellipse cx="69.9" cy="574.6" rx="6.8" ry="12" fill="url(#pr)"/><rect x="68.9" y="557" width="2.2" height="40" fill="#8b0000"/></g>
<defs><linearGradient id="sb" x1="0" y1="0" x2="0" y2="1"><stop offset="0" stop-color="#62acd2"/><stop offset="0.45" stop-color="#4996c2"/><stop offset="1" stop-color="#2f7fac"/></linearGradient><linearGradient id="sg" x1="0" y1="0" x2="0" y2="1"><stop offset="0" stop-color="#94dc1c"/><stop offset="1" stop-color="#4f9e22"/></linearGradient></defs><ellipse cx="70.5" cy="658.6" rx="19" ry="1.6" fill="#000" opacity="0.22"/><path d="M52.6,623 Q52.6,621 54.6,621 L80.6,621 L87.9,628.2 L87.9,655.4 Q87.9,657.4 85.9,657.4 L54.6,657.4 Q52.6,657.4 52.6,655.4 Z" fill="url(#sb)" stroke="#2f7dab" stroke-width="0.6"/><path d="M57,621.3 L76,621.3 L76,630 Q76,631 75,631 L58,631 Q57,631 57,630 Z" fill="#fff"/><rect x="60.2" y="622.2" width="4.3" height="7" fill="#3b8ab6"/><rect x="55" y="643" width="31" height="12.6" rx="1" fill="#fff"/><g stroke="#b9c4d2" stroke-width="1.1"><line x1="58" y1="646.3" x2="83" y2="646.3"/><line x1="58" y1="649.6" x2="83" y2="649.6"/><line x1="58" y1="652.9" x2="83" y2="652.9"/></g><rect x="55" y="655.4" width="31" height="2" fill="#e9b454"/><path d="M75.5,629 L85,629 L85,644 L90,644 L80.2,658 L70,644 L75.5,644 Z" fill="url(#sg)"/>
<path d="M99.8,581.8 L109.4,581.8 L104.6,587 Z" fill="#000"/>
<path d="M105,645.2 L114.4,645.2 L109.7,650.4 Z" fill="#000"/>
<path d="M73.5,701.5 L76.5,704 L79.5,701.5 M73.5,705.5 L76.5,708 L79.5,705.5" fill="none" stroke="#333" stroke-width="1.1"/>
<g stroke="#000" stroke-width="1" shape-rendering="crispEdges" fill="none">
<line x1="56" y1="461.5" x2="136" y2="461.5"/>
<line x1="56.5" y1="453" x2="56.5" y2="462"/>
<line x1="76.5" y1="455" x2="76.5" y2="462"/>
<line x1="96.5" y1="453" x2="96.5" y2="462"/>
<line x1="115.5" y1="455" x2="115.5" y2="462"/>
<line x1="135.5" y1="453" x2="135.5" y2="462"/>
<line x1="61" y1="517.5" x2="137" y2="517.5"/>
<line x1="61.5" y1="517" x2="61.5" y2="525"/>
<line x1="71.5" y1="517" x2="71.5" y2="522"/>
<line x1="80.5" y1="517" x2="80.5" y2="525"/>
<line x1="89.5" y1="517" x2="89.5" y2="522"/>
<line x1="99.5" y1="517" x2="99.5" y2="525"/>
<line x1="108.5" y1="517" x2="108.5" y2="522"/>
<line x1="117.5" y1="517" x2="117.5" y2="525"/>
<line x1="127.5" y1="517" x2="127.5" y2="522"/>
<line x1="136.5" y1="517" x2="136.5" y2="525"/>
</g>
<g stroke="#000" stroke-width="1" fill="none" shape-rendering="crispEdges"><line x1="682" y1="15.5" x2="692" y2="15.5"/><rect x="727.5" y="10.5" width="9" height="9"/></g>
<path d="M773.6,10.4 L783.2,20 M783.2,10.4 L773.6,20" stroke="#000" stroke-width="1.1" fill="none"/>
<g stroke="#b8b8b8" stroke-width="1.2"><line x1="789" y1="730" x2="800" y2="719"/><line x1="793" y1="730" x2="800" y2="723"/><line x1="797" y1="730" x2="800" y2="727"/></g>
<path d="M207.3,52 L213.3,58 M213.3,52 L207.3,58" stroke="#fff" stroke-width="1.8" fill="none" stroke-linecap="butt"/>
<path d="M328.6,52 L334.6,58 M334.6,52 L328.6,58" stroke="#fff" stroke-width="1.8" fill="none" stroke-linecap="butt"/>
<path d="M451.09999999999997,50.8 L457.3,57.0 M457.3,50.8 L451.09999999999997,57.0" stroke="#fff" stroke-width="2.2" fill="none" stroke-linecap="butt"/>
</svg>
<div id="edgeL"></div><div id="edgeT"></div><div id="edgeR"></div><div id="edgeB"></div>
</div></body></html>
